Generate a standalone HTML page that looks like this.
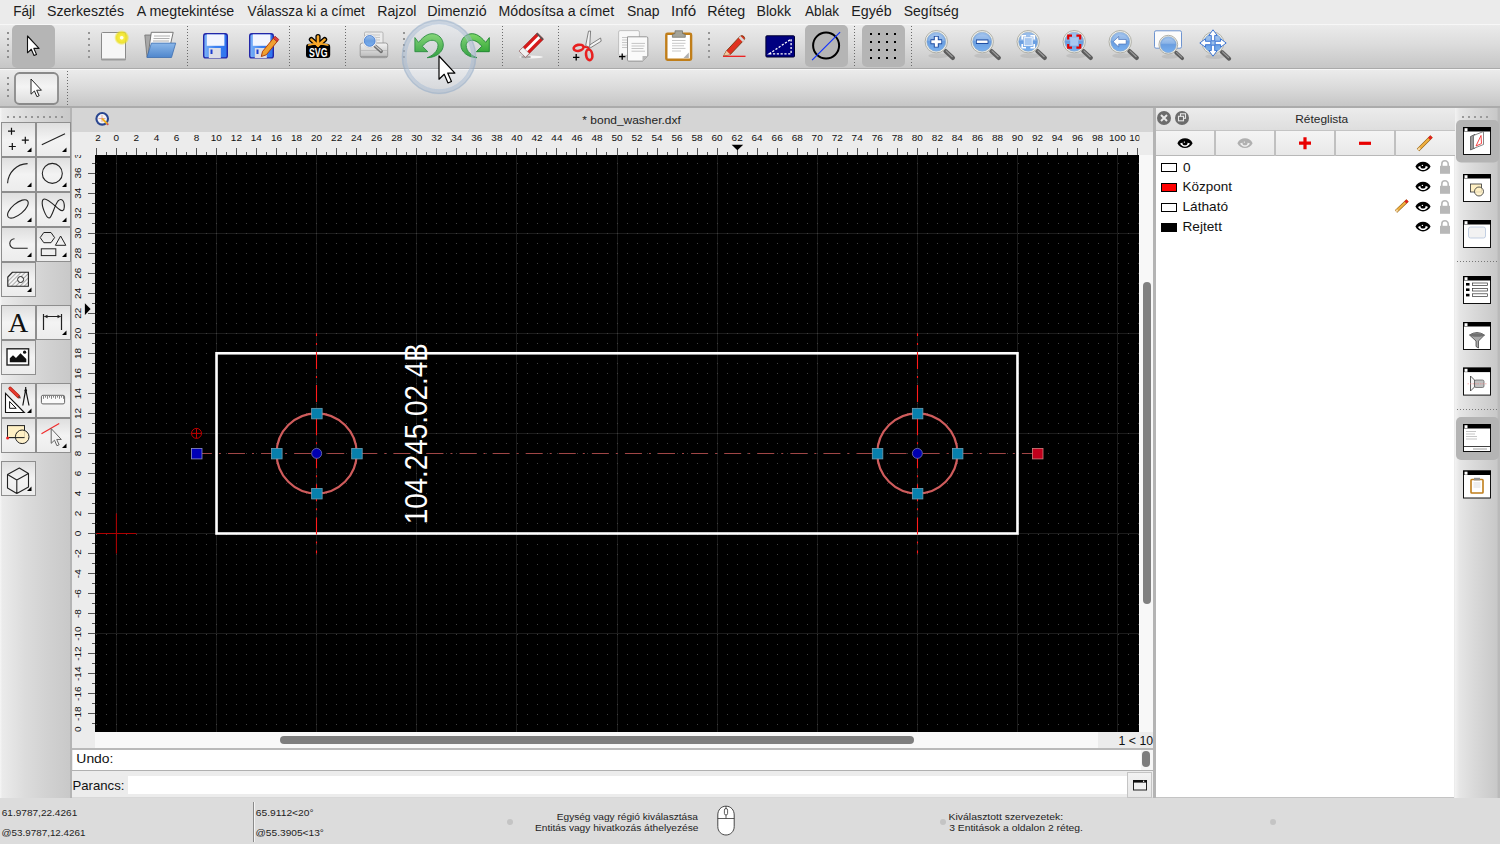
<!DOCTYPE html><html><head><meta charset="utf-8"><style>
html,body{margin:0;padding:0;width:1500px;height:844px;overflow:hidden;background:#ececec;font-family:"Liberation Sans",sans-serif;}
*{box-sizing:border-box}
</style></head><body>
<div style="position:absolute;left:0px;top:0px;width:1500px;height:24px;background:#ebebeb"></div>
<div style="position:absolute;left:0px;top:24px;width:1500px;height:45px;background:linear-gradient(#ebebeb,#dcdcdc 45%,#c6c6c6);border-top:1px solid #f7f7f7;border-bottom:1px solid #aaaaaa"></div>
<div style="position:absolute;left:0px;top:69px;width:1500px;height:39px;background:linear-gradient(#ebebeb,#dcdcdc 45%,#c6c6c6);border-top:1px solid #f7f7f7;border-bottom:2px solid #ababab"></div>
<div style="position:absolute;left:0px;top:108px;width:71px;height:690px;background:linear-gradient(90deg,#f6f6f6 0,#ebebeb 3%,#dcdcdc 35%,#d2d2d2 65%,#c8c8c8 100%)"></div>
<div style="position:absolute;left:1455px;top:108px;width:45px;height:690px;background:linear-gradient(90deg,#f2f2f2 0,#e6e6e6 10%,#dadada 40%,#d0d0d0 70%,#c8c8c8 94%,#bababa 95%,#bababa 100%)"></div>
<div style="position:absolute;left:70px;top:108px;width:2px;height:690px;background:#b4b4b4"></div>
<div style="position:absolute;left:72px;top:108px;width:1082px;height:24px;background:#d5d5d5"></div>
<div style="position:absolute;left:72px;top:132px;width:1082px;height:600px;background:#ececec"></div>
<div style="position:absolute;left:1139px;top:155px;width:15px;height:577px;background:#f8f8f8"></div>
<div style="position:absolute;left:1143px;top:282px;width:8px;height:322px;background:#808080;border-radius:4px"></div>
<div style="position:absolute;left:95px;top:732px;width:1059px;height:16px;background:#f8f8f8"></div>
<div style="position:absolute;left:72px;top:732px;width:23px;height:16px;background:#ececec"></div>
<div style="position:absolute;left:280px;top:736px;width:634px;height:8px;background:#7e7e7e;border-radius:4px"></div>
<div style="position:absolute;left:1098px;top:732px;width:56px;height:16px;background:#ececec"></div>
<div style="position:absolute;left:72px;top:748px;width:1082px;height:2px;background:#b9b9b9"></div>
<div style="position:absolute;left:73px;top:750px;width:1081px;height:20px;background:#fff"></div>
<div style="position:absolute;left:1141px;top:750px;width:13px;height:20px;background:#f6f6f6"></div>
<div style="position:absolute;left:1142px;top:751px;width:8px;height:16px;background:#7d7d7d;border-radius:4px"></div>
<div style="position:absolute;left:72px;top:770px;width:1082px;height:1px;background:#b0b0b0"></div>
<div style="position:absolute;left:72px;top:771px;width:1082px;height:27px;background:#ececec;border-bottom:1px solid #d8d8d8"></div>
<div style="position:absolute;left:128px;top:776px;width:999px;height:18px;background:#fff"></div>
<div style="position:absolute;left:1127px;top:772px;width:25px;height:26px;background:linear-gradient(#f2f2f2,#e6e6e6);border:1px solid #c4c4c4"></div>
<div style="position:absolute;left:1153px;top:108px;width:3px;height:690px;background:#b4b4b4"></div>
<svg width="1500" height="844" style="position:absolute;left:0;top:0">
<defs><clipPath id="cc"><rect x="95" y="155" width="1044" height="577"/></clipPath><clipPath id="hr"><rect x="95" y="132" width="1044.5" height="23"/></clipPath><clipPath id="vr"><rect x="72" y="155" width="23" height="577"/></clipPath></defs>
<rect x="95" y="155" width="1044" height="577" fill="#000"/>
<g clip-path="url(#cc)">
<line x1="16.5" y1="155" x2="16.5" y2="732" stroke="#1c1c1c" stroke-width="1"/>
<line x1="116.5" y1="155" x2="116.5" y2="732" stroke="#1c1c1c" stroke-width="1"/>
<line x1="216.5" y1="155" x2="216.5" y2="732" stroke="#1c1c1c" stroke-width="1"/>
<line x1="316.5" y1="155" x2="316.5" y2="732" stroke="#1c1c1c" stroke-width="1"/>
<line x1="416.5" y1="155" x2="416.5" y2="732" stroke="#1c1c1c" stroke-width="1"/>
<line x1="516.5" y1="155" x2="516.5" y2="732" stroke="#1c1c1c" stroke-width="1"/>
<line x1="617.5" y1="155" x2="617.5" y2="732" stroke="#1c1c1c" stroke-width="1"/>
<line x1="717.5" y1="155" x2="717.5" y2="732" stroke="#1c1c1c" stroke-width="1"/>
<line x1="817.5" y1="155" x2="817.5" y2="732" stroke="#1c1c1c" stroke-width="1"/>
<line x1="917.5" y1="155" x2="917.5" y2="732" stroke="#1c1c1c" stroke-width="1"/>
<line x1="1017.5" y1="155" x2="1017.5" y2="732" stroke="#1c1c1c" stroke-width="1"/>
<line x1="1117.5" y1="155" x2="1117.5" y2="732" stroke="#1c1c1c" stroke-width="1"/>
<line x1="95" y1="833.5" x2="1139" y2="833.5" stroke="#1c1c1c" stroke-width="1"/>
<line x1="95" y1="733.5" x2="1139" y2="733.5" stroke="#1c1c1c" stroke-width="1"/>
<line x1="95" y1="633.5" x2="1139" y2="633.5" stroke="#1c1c1c" stroke-width="1"/>
<line x1="95" y1="533.5" x2="1139" y2="533.5" stroke="#1c1c1c" stroke-width="1"/>
<line x1="95" y1="433.5" x2="1139" y2="433.5" stroke="#1c1c1c" stroke-width="1"/>
<line x1="95" y1="333.5" x2="1139" y2="333.5" stroke="#1c1c1c" stroke-width="1"/>
<line x1="95" y1="233.5" x2="1139" y2="233.5" stroke="#1c1c1c" stroke-width="1"/>
<line x1="95" y1="133.5" x2="1139" y2="133.5" stroke="#1c1c1c" stroke-width="1"/>
<path d="M86 744h1v1h-1zM86 734h1v1h-1zM86 724h1v1h-1zM86 714h1v1h-1zM86 704h1v1h-1zM86 694h1v1h-1zM86 684h1v1h-1zM86 674h1v1h-1zM86 664h1v1h-1zM86 654h1v1h-1zM86 644h1v1h-1zM86 634h1v1h-1zM86 624h1v1h-1zM86 614h1v1h-1zM86 604h1v1h-1zM86 594h1v1h-1zM86 584h1v1h-1zM86 574h1v1h-1zM86 564h1v1h-1zM86 554h1v1h-1zM86 544h1v1h-1zM86 534h1v1h-1zM86 523h1v1h-1zM86 513h1v1h-1zM86 503h1v1h-1zM86 493h1v1h-1zM86 483h1v1h-1zM86 473h1v1h-1zM86 463h1v1h-1zM86 453h1v1h-1zM86 443h1v1h-1zM86 433h1v1h-1zM86 423h1v1h-1zM86 413h1v1h-1zM86 403h1v1h-1zM86 393h1v1h-1zM86 383h1v1h-1zM86 373h1v1h-1zM86 363h1v1h-1zM86 353h1v1h-1zM86 343h1v1h-1zM86 333h1v1h-1zM86 323h1v1h-1zM86 313h1v1h-1zM86 303h1v1h-1zM86 293h1v1h-1zM86 283h1v1h-1zM86 273h1v1h-1zM86 263h1v1h-1zM86 253h1v1h-1zM86 243h1v1h-1zM86 233h1v1h-1zM86 223h1v1h-1zM86 213h1v1h-1zM86 203h1v1h-1zM86 193h1v1h-1zM86 183h1v1h-1zM86 173h1v1h-1zM86 163h1v1h-1zM86 153h1v1h-1zM96 744h1v1h-1zM96 734h1v1h-1zM96 724h1v1h-1zM96 714h1v1h-1zM96 704h1v1h-1zM96 694h1v1h-1zM96 684h1v1h-1zM96 674h1v1h-1zM96 664h1v1h-1zM96 654h1v1h-1zM96 644h1v1h-1zM96 634h1v1h-1zM96 624h1v1h-1zM96 614h1v1h-1zM96 604h1v1h-1zM96 594h1v1h-1zM96 584h1v1h-1zM96 574h1v1h-1zM96 564h1v1h-1zM96 554h1v1h-1zM96 544h1v1h-1zM96 534h1v1h-1zM96 523h1v1h-1zM96 513h1v1h-1zM96 503h1v1h-1zM96 493h1v1h-1zM96 483h1v1h-1zM96 473h1v1h-1zM96 463h1v1h-1zM96 453h1v1h-1zM96 443h1v1h-1zM96 433h1v1h-1zM96 423h1v1h-1zM96 413h1v1h-1zM96 403h1v1h-1zM96 393h1v1h-1zM96 383h1v1h-1zM96 373h1v1h-1zM96 363h1v1h-1zM96 353h1v1h-1zM96 343h1v1h-1zM96 333h1v1h-1zM96 323h1v1h-1zM96 313h1v1h-1zM96 303h1v1h-1zM96 293h1v1h-1zM96 283h1v1h-1zM96 273h1v1h-1zM96 263h1v1h-1zM96 253h1v1h-1zM96 243h1v1h-1zM96 233h1v1h-1zM96 223h1v1h-1zM96 213h1v1h-1zM96 203h1v1h-1zM96 193h1v1h-1zM96 183h1v1h-1zM96 173h1v1h-1zM96 163h1v1h-1zM96 153h1v1h-1zM106 744h1v1h-1zM106 734h1v1h-1zM106 724h1v1h-1zM106 714h1v1h-1zM106 704h1v1h-1zM106 694h1v1h-1zM106 684h1v1h-1zM106 674h1v1h-1zM106 664h1v1h-1zM106 654h1v1h-1zM106 644h1v1h-1zM106 634h1v1h-1zM106 624h1v1h-1zM106 614h1v1h-1zM106 604h1v1h-1zM106 594h1v1h-1zM106 584h1v1h-1zM106 574h1v1h-1zM106 564h1v1h-1zM106 554h1v1h-1zM106 544h1v1h-1zM106 534h1v1h-1zM106 523h1v1h-1zM106 513h1v1h-1zM106 503h1v1h-1zM106 493h1v1h-1zM106 483h1v1h-1zM106 473h1v1h-1zM106 463h1v1h-1zM106 453h1v1h-1zM106 443h1v1h-1zM106 433h1v1h-1zM106 423h1v1h-1zM106 413h1v1h-1zM106 403h1v1h-1zM106 393h1v1h-1zM106 383h1v1h-1zM106 373h1v1h-1zM106 363h1v1h-1zM106 353h1v1h-1zM106 343h1v1h-1zM106 333h1v1h-1zM106 323h1v1h-1zM106 313h1v1h-1zM106 303h1v1h-1zM106 293h1v1h-1zM106 283h1v1h-1zM106 273h1v1h-1zM106 263h1v1h-1zM106 253h1v1h-1zM106 243h1v1h-1zM106 233h1v1h-1zM106 223h1v1h-1zM106 213h1v1h-1zM106 203h1v1h-1zM106 193h1v1h-1zM106 183h1v1h-1zM106 173h1v1h-1zM106 163h1v1h-1zM106 153h1v1h-1zM116 744h1v1h-1zM116 734h1v1h-1zM116 724h1v1h-1zM116 714h1v1h-1zM116 704h1v1h-1zM116 694h1v1h-1zM116 684h1v1h-1zM116 674h1v1h-1zM116 664h1v1h-1zM116 654h1v1h-1zM116 644h1v1h-1zM116 634h1v1h-1zM116 624h1v1h-1zM116 614h1v1h-1zM116 604h1v1h-1zM116 594h1v1h-1zM116 584h1v1h-1zM116 574h1v1h-1zM116 564h1v1h-1zM116 554h1v1h-1zM116 544h1v1h-1zM116 534h1v1h-1zM116 523h1v1h-1zM116 513h1v1h-1zM116 503h1v1h-1zM116 493h1v1h-1zM116 483h1v1h-1zM116 473h1v1h-1zM116 463h1v1h-1zM116 453h1v1h-1zM116 443h1v1h-1zM116 433h1v1h-1zM116 423h1v1h-1zM116 413h1v1h-1zM116 403h1v1h-1zM116 393h1v1h-1zM116 383h1v1h-1zM116 373h1v1h-1zM116 363h1v1h-1zM116 353h1v1h-1zM116 343h1v1h-1zM116 333h1v1h-1zM116 323h1v1h-1zM116 313h1v1h-1zM116 303h1v1h-1zM116 293h1v1h-1zM116 283h1v1h-1zM116 273h1v1h-1zM116 263h1v1h-1zM116 253h1v1h-1zM116 243h1v1h-1zM116 233h1v1h-1zM116 223h1v1h-1zM116 213h1v1h-1zM116 203h1v1h-1zM116 193h1v1h-1zM116 183h1v1h-1zM116 173h1v1h-1zM116 163h1v1h-1zM116 153h1v1h-1zM126 744h1v1h-1zM126 734h1v1h-1zM126 724h1v1h-1zM126 714h1v1h-1zM126 704h1v1h-1zM126 694h1v1h-1zM126 684h1v1h-1zM126 674h1v1h-1zM126 664h1v1h-1zM126 654h1v1h-1zM126 644h1v1h-1zM126 634h1v1h-1zM126 624h1v1h-1zM126 614h1v1h-1zM126 604h1v1h-1zM126 594h1v1h-1zM126 584h1v1h-1zM126 574h1v1h-1zM126 564h1v1h-1zM126 554h1v1h-1zM126 544h1v1h-1zM126 534h1v1h-1zM126 523h1v1h-1zM126 513h1v1h-1zM126 503h1v1h-1zM126 493h1v1h-1zM126 483h1v1h-1zM126 473h1v1h-1zM126 463h1v1h-1zM126 453h1v1h-1zM126 443h1v1h-1zM126 433h1v1h-1zM126 423h1v1h-1zM126 413h1v1h-1zM126 403h1v1h-1zM126 393h1v1h-1zM126 383h1v1h-1zM126 373h1v1h-1zM126 363h1v1h-1zM126 353h1v1h-1zM126 343h1v1h-1zM126 333h1v1h-1zM126 323h1v1h-1zM126 313h1v1h-1zM126 303h1v1h-1zM126 293h1v1h-1zM126 283h1v1h-1zM126 273h1v1h-1zM126 263h1v1h-1zM126 253h1v1h-1zM126 243h1v1h-1zM126 233h1v1h-1zM126 223h1v1h-1zM126 213h1v1h-1zM126 203h1v1h-1zM126 193h1v1h-1zM126 183h1v1h-1zM126 173h1v1h-1zM126 163h1v1h-1zM126 153h1v1h-1zM136 744h1v1h-1zM136 734h1v1h-1zM136 724h1v1h-1zM136 714h1v1h-1zM136 704h1v1h-1zM136 694h1v1h-1zM136 684h1v1h-1zM136 674h1v1h-1zM136 664h1v1h-1zM136 654h1v1h-1zM136 644h1v1h-1zM136 634h1v1h-1zM136 624h1v1h-1zM136 614h1v1h-1zM136 604h1v1h-1zM136 594h1v1h-1zM136 584h1v1h-1zM136 574h1v1h-1zM136 564h1v1h-1zM136 554h1v1h-1zM136 544h1v1h-1zM136 534h1v1h-1zM136 523h1v1h-1zM136 513h1v1h-1zM136 503h1v1h-1zM136 493h1v1h-1zM136 483h1v1h-1zM136 473h1v1h-1zM136 463h1v1h-1zM136 453h1v1h-1zM136 443h1v1h-1zM136 433h1v1h-1zM136 423h1v1h-1zM136 413h1v1h-1zM136 403h1v1h-1zM136 393h1v1h-1zM136 383h1v1h-1zM136 373h1v1h-1zM136 363h1v1h-1zM136 353h1v1h-1zM136 343h1v1h-1zM136 333h1v1h-1zM136 323h1v1h-1zM136 313h1v1h-1zM136 303h1v1h-1zM136 293h1v1h-1zM136 283h1v1h-1zM136 273h1v1h-1zM136 263h1v1h-1zM136 253h1v1h-1zM136 243h1v1h-1zM136 233h1v1h-1zM136 223h1v1h-1zM136 213h1v1h-1zM136 203h1v1h-1zM136 193h1v1h-1zM136 183h1v1h-1zM136 173h1v1h-1zM136 163h1v1h-1zM136 153h1v1h-1zM146 744h1v1h-1zM146 734h1v1h-1zM146 724h1v1h-1zM146 714h1v1h-1zM146 704h1v1h-1zM146 694h1v1h-1zM146 684h1v1h-1zM146 674h1v1h-1zM146 664h1v1h-1zM146 654h1v1h-1zM146 644h1v1h-1zM146 634h1v1h-1zM146 624h1v1h-1zM146 614h1v1h-1zM146 604h1v1h-1zM146 594h1v1h-1zM146 584h1v1h-1zM146 574h1v1h-1zM146 564h1v1h-1zM146 554h1v1h-1zM146 544h1v1h-1zM146 534h1v1h-1zM146 523h1v1h-1zM146 513h1v1h-1zM146 503h1v1h-1zM146 493h1v1h-1zM146 483h1v1h-1zM146 473h1v1h-1zM146 463h1v1h-1zM146 453h1v1h-1zM146 443h1v1h-1zM146 433h1v1h-1zM146 423h1v1h-1zM146 413h1v1h-1zM146 403h1v1h-1zM146 393h1v1h-1zM146 383h1v1h-1zM146 373h1v1h-1zM146 363h1v1h-1zM146 353h1v1h-1zM146 343h1v1h-1zM146 333h1v1h-1zM146 323h1v1h-1zM146 313h1v1h-1zM146 303h1v1h-1zM146 293h1v1h-1zM146 283h1v1h-1zM146 273h1v1h-1zM146 263h1v1h-1zM146 253h1v1h-1zM146 243h1v1h-1zM146 233h1v1h-1zM146 223h1v1h-1zM146 213h1v1h-1zM146 203h1v1h-1zM146 193h1v1h-1zM146 183h1v1h-1zM146 173h1v1h-1zM146 163h1v1h-1zM146 153h1v1h-1zM156 744h1v1h-1zM156 734h1v1h-1zM156 724h1v1h-1zM156 714h1v1h-1zM156 704h1v1h-1zM156 694h1v1h-1zM156 684h1v1h-1zM156 674h1v1h-1zM156 664h1v1h-1zM156 654h1v1h-1zM156 644h1v1h-1zM156 634h1v1h-1zM156 624h1v1h-1zM156 614h1v1h-1zM156 604h1v1h-1zM156 594h1v1h-1zM156 584h1v1h-1zM156 574h1v1h-1zM156 564h1v1h-1zM156 554h1v1h-1zM156 544h1v1h-1zM156 534h1v1h-1zM156 523h1v1h-1zM156 513h1v1h-1zM156 503h1v1h-1zM156 493h1v1h-1zM156 483h1v1h-1zM156 473h1v1h-1zM156 463h1v1h-1zM156 453h1v1h-1zM156 443h1v1h-1zM156 433h1v1h-1zM156 423h1v1h-1zM156 413h1v1h-1zM156 403h1v1h-1zM156 393h1v1h-1zM156 383h1v1h-1zM156 373h1v1h-1zM156 363h1v1h-1zM156 353h1v1h-1zM156 343h1v1h-1zM156 333h1v1h-1zM156 323h1v1h-1zM156 313h1v1h-1zM156 303h1v1h-1zM156 293h1v1h-1zM156 283h1v1h-1zM156 273h1v1h-1zM156 263h1v1h-1zM156 253h1v1h-1zM156 243h1v1h-1zM156 233h1v1h-1zM156 223h1v1h-1zM156 213h1v1h-1zM156 203h1v1h-1zM156 193h1v1h-1zM156 183h1v1h-1zM156 173h1v1h-1zM156 163h1v1h-1zM156 153h1v1h-1zM166 744h1v1h-1zM166 734h1v1h-1zM166 724h1v1h-1zM166 714h1v1h-1zM166 704h1v1h-1zM166 694h1v1h-1zM166 684h1v1h-1zM166 674h1v1h-1zM166 664h1v1h-1zM166 654h1v1h-1zM166 644h1v1h-1zM166 634h1v1h-1zM166 624h1v1h-1zM166 614h1v1h-1zM166 604h1v1h-1zM166 594h1v1h-1zM166 584h1v1h-1zM166 574h1v1h-1zM166 564h1v1h-1zM166 554h1v1h-1zM166 544h1v1h-1zM166 534h1v1h-1zM166 523h1v1h-1zM166 513h1v1h-1zM166 503h1v1h-1zM166 493h1v1h-1zM166 483h1v1h-1zM166 473h1v1h-1zM166 463h1v1h-1zM166 453h1v1h-1zM166 443h1v1h-1zM166 433h1v1h-1zM166 423h1v1h-1zM166 413h1v1h-1zM166 403h1v1h-1zM166 393h1v1h-1zM166 383h1v1h-1zM166 373h1v1h-1zM166 363h1v1h-1zM166 353h1v1h-1zM166 343h1v1h-1zM166 333h1v1h-1zM166 323h1v1h-1zM166 313h1v1h-1zM166 303h1v1h-1zM166 293h1v1h-1zM166 283h1v1h-1zM166 273h1v1h-1zM166 263h1v1h-1zM166 253h1v1h-1zM166 243h1v1h-1zM166 233h1v1h-1zM166 223h1v1h-1zM166 213h1v1h-1zM166 203h1v1h-1zM166 193h1v1h-1zM166 183h1v1h-1zM166 173h1v1h-1zM166 163h1v1h-1zM166 153h1v1h-1zM176 744h1v1h-1zM176 734h1v1h-1zM176 724h1v1h-1zM176 714h1v1h-1zM176 704h1v1h-1zM176 694h1v1h-1zM176 684h1v1h-1zM176 674h1v1h-1zM176 664h1v1h-1zM176 654h1v1h-1zM176 644h1v1h-1zM176 634h1v1h-1zM176 624h1v1h-1zM176 614h1v1h-1zM176 604h1v1h-1zM176 594h1v1h-1zM176 584h1v1h-1zM176 574h1v1h-1zM176 564h1v1h-1zM176 554h1v1h-1zM176 544h1v1h-1zM176 534h1v1h-1zM176 523h1v1h-1zM176 513h1v1h-1zM176 503h1v1h-1zM176 493h1v1h-1zM176 483h1v1h-1zM176 473h1v1h-1zM176 463h1v1h-1zM176 453h1v1h-1zM176 443h1v1h-1zM176 433h1v1h-1zM176 423h1v1h-1zM176 413h1v1h-1zM176 403h1v1h-1zM176 393h1v1h-1zM176 383h1v1h-1zM176 373h1v1h-1zM176 363h1v1h-1zM176 353h1v1h-1zM176 343h1v1h-1zM176 333h1v1h-1zM176 323h1v1h-1zM176 313h1v1h-1zM176 303h1v1h-1zM176 293h1v1h-1zM176 283h1v1h-1zM176 273h1v1h-1zM176 263h1v1h-1zM176 253h1v1h-1zM176 243h1v1h-1zM176 233h1v1h-1zM176 223h1v1h-1zM176 213h1v1h-1zM176 203h1v1h-1zM176 193h1v1h-1zM176 183h1v1h-1zM176 173h1v1h-1zM176 163h1v1h-1zM176 153h1v1h-1zM186 744h1v1h-1zM186 734h1v1h-1zM186 724h1v1h-1zM186 714h1v1h-1zM186 704h1v1h-1zM186 694h1v1h-1zM186 684h1v1h-1zM186 674h1v1h-1zM186 664h1v1h-1zM186 654h1v1h-1zM186 644h1v1h-1zM186 634h1v1h-1zM186 624h1v1h-1zM186 614h1v1h-1zM186 604h1v1h-1zM186 594h1v1h-1zM186 584h1v1h-1zM186 574h1v1h-1zM186 564h1v1h-1zM186 554h1v1h-1zM186 544h1v1h-1zM186 534h1v1h-1zM186 523h1v1h-1zM186 513h1v1h-1zM186 503h1v1h-1zM186 493h1v1h-1zM186 483h1v1h-1zM186 473h1v1h-1zM186 463h1v1h-1zM186 453h1v1h-1zM186 443h1v1h-1zM186 433h1v1h-1zM186 423h1v1h-1zM186 413h1v1h-1zM186 403h1v1h-1zM186 393h1v1h-1zM186 383h1v1h-1zM186 373h1v1h-1zM186 363h1v1h-1zM186 353h1v1h-1zM186 343h1v1h-1zM186 333h1v1h-1zM186 323h1v1h-1zM186 313h1v1h-1zM186 303h1v1h-1zM186 293h1v1h-1zM186 283h1v1h-1zM186 273h1v1h-1zM186 263h1v1h-1zM186 253h1v1h-1zM186 243h1v1h-1zM186 233h1v1h-1zM186 223h1v1h-1zM186 213h1v1h-1zM186 203h1v1h-1zM186 193h1v1h-1zM186 183h1v1h-1zM186 173h1v1h-1zM186 163h1v1h-1zM186 153h1v1h-1zM196 744h1v1h-1zM196 734h1v1h-1zM196 724h1v1h-1zM196 714h1v1h-1zM196 704h1v1h-1zM196 694h1v1h-1zM196 684h1v1h-1zM196 674h1v1h-1zM196 664h1v1h-1zM196 654h1v1h-1zM196 644h1v1h-1zM196 634h1v1h-1zM196 624h1v1h-1zM196 614h1v1h-1zM196 604h1v1h-1zM196 594h1v1h-1zM196 584h1v1h-1zM196 574h1v1h-1zM196 564h1v1h-1zM196 554h1v1h-1zM196 544h1v1h-1zM196 534h1v1h-1zM196 523h1v1h-1zM196 513h1v1h-1zM196 503h1v1h-1zM196 493h1v1h-1zM196 483h1v1h-1zM196 473h1v1h-1zM196 463h1v1h-1zM196 453h1v1h-1zM196 443h1v1h-1zM196 433h1v1h-1zM196 423h1v1h-1zM196 413h1v1h-1zM196 403h1v1h-1zM196 393h1v1h-1zM196 383h1v1h-1zM196 373h1v1h-1zM196 363h1v1h-1zM196 353h1v1h-1zM196 343h1v1h-1zM196 333h1v1h-1zM196 323h1v1h-1zM196 313h1v1h-1zM196 303h1v1h-1zM196 293h1v1h-1zM196 283h1v1h-1zM196 273h1v1h-1zM196 263h1v1h-1zM196 253h1v1h-1zM196 243h1v1h-1zM196 233h1v1h-1zM196 223h1v1h-1zM196 213h1v1h-1zM196 203h1v1h-1zM196 193h1v1h-1zM196 183h1v1h-1zM196 173h1v1h-1zM196 163h1v1h-1zM196 153h1v1h-1zM206 744h1v1h-1zM206 734h1v1h-1zM206 724h1v1h-1zM206 714h1v1h-1zM206 704h1v1h-1zM206 694h1v1h-1zM206 684h1v1h-1zM206 674h1v1h-1zM206 664h1v1h-1zM206 654h1v1h-1zM206 644h1v1h-1zM206 634h1v1h-1zM206 624h1v1h-1zM206 614h1v1h-1zM206 604h1v1h-1zM206 594h1v1h-1zM206 584h1v1h-1zM206 574h1v1h-1zM206 564h1v1h-1zM206 554h1v1h-1zM206 544h1v1h-1zM206 534h1v1h-1zM206 523h1v1h-1zM206 513h1v1h-1zM206 503h1v1h-1zM206 493h1v1h-1zM206 483h1v1h-1zM206 473h1v1h-1zM206 463h1v1h-1zM206 453h1v1h-1zM206 443h1v1h-1zM206 433h1v1h-1zM206 423h1v1h-1zM206 413h1v1h-1zM206 403h1v1h-1zM206 393h1v1h-1zM206 383h1v1h-1zM206 373h1v1h-1zM206 363h1v1h-1zM206 353h1v1h-1zM206 343h1v1h-1zM206 333h1v1h-1zM206 323h1v1h-1zM206 313h1v1h-1zM206 303h1v1h-1zM206 293h1v1h-1zM206 283h1v1h-1zM206 273h1v1h-1zM206 263h1v1h-1zM206 253h1v1h-1zM206 243h1v1h-1zM206 233h1v1h-1zM206 223h1v1h-1zM206 213h1v1h-1zM206 203h1v1h-1zM206 193h1v1h-1zM206 183h1v1h-1zM206 173h1v1h-1zM206 163h1v1h-1zM206 153h1v1h-1zM216 744h1v1h-1zM216 734h1v1h-1zM216 724h1v1h-1zM216 714h1v1h-1zM216 704h1v1h-1zM216 694h1v1h-1zM216 684h1v1h-1zM216 674h1v1h-1zM216 664h1v1h-1zM216 654h1v1h-1zM216 644h1v1h-1zM216 634h1v1h-1zM216 624h1v1h-1zM216 614h1v1h-1zM216 604h1v1h-1zM216 594h1v1h-1zM216 584h1v1h-1zM216 574h1v1h-1zM216 564h1v1h-1zM216 554h1v1h-1zM216 544h1v1h-1zM216 534h1v1h-1zM216 523h1v1h-1zM216 513h1v1h-1zM216 503h1v1h-1zM216 493h1v1h-1zM216 483h1v1h-1zM216 473h1v1h-1zM216 463h1v1h-1zM216 453h1v1h-1zM216 443h1v1h-1zM216 433h1v1h-1zM216 423h1v1h-1zM216 413h1v1h-1zM216 403h1v1h-1zM216 393h1v1h-1zM216 383h1v1h-1zM216 373h1v1h-1zM216 363h1v1h-1zM216 353h1v1h-1zM216 343h1v1h-1zM216 333h1v1h-1zM216 323h1v1h-1zM216 313h1v1h-1zM216 303h1v1h-1zM216 293h1v1h-1zM216 283h1v1h-1zM216 273h1v1h-1zM216 263h1v1h-1zM216 253h1v1h-1zM216 243h1v1h-1zM216 233h1v1h-1zM216 223h1v1h-1zM216 213h1v1h-1zM216 203h1v1h-1zM216 193h1v1h-1zM216 183h1v1h-1zM216 173h1v1h-1zM216 163h1v1h-1zM216 153h1v1h-1zM226 744h1v1h-1zM226 734h1v1h-1zM226 724h1v1h-1zM226 714h1v1h-1zM226 704h1v1h-1zM226 694h1v1h-1zM226 684h1v1h-1zM226 674h1v1h-1zM226 664h1v1h-1zM226 654h1v1h-1zM226 644h1v1h-1zM226 634h1v1h-1zM226 624h1v1h-1zM226 614h1v1h-1zM226 604h1v1h-1zM226 594h1v1h-1zM226 584h1v1h-1zM226 574h1v1h-1zM226 564h1v1h-1zM226 554h1v1h-1zM226 544h1v1h-1zM226 534h1v1h-1zM226 523h1v1h-1zM226 513h1v1h-1zM226 503h1v1h-1zM226 493h1v1h-1zM226 483h1v1h-1zM226 473h1v1h-1zM226 463h1v1h-1zM226 453h1v1h-1zM226 443h1v1h-1zM226 433h1v1h-1zM226 423h1v1h-1zM226 413h1v1h-1zM226 403h1v1h-1zM226 393h1v1h-1zM226 383h1v1h-1zM226 373h1v1h-1zM226 363h1v1h-1zM226 353h1v1h-1zM226 343h1v1h-1zM226 333h1v1h-1zM226 323h1v1h-1zM226 313h1v1h-1zM226 303h1v1h-1zM226 293h1v1h-1zM226 283h1v1h-1zM226 273h1v1h-1zM226 263h1v1h-1zM226 253h1v1h-1zM226 243h1v1h-1zM226 233h1v1h-1zM226 223h1v1h-1zM226 213h1v1h-1zM226 203h1v1h-1zM226 193h1v1h-1zM226 183h1v1h-1zM226 173h1v1h-1zM226 163h1v1h-1zM226 153h1v1h-1zM236 744h1v1h-1zM236 734h1v1h-1zM236 724h1v1h-1zM236 714h1v1h-1zM236 704h1v1h-1zM236 694h1v1h-1zM236 684h1v1h-1zM236 674h1v1h-1zM236 664h1v1h-1zM236 654h1v1h-1zM236 644h1v1h-1zM236 634h1v1h-1zM236 624h1v1h-1zM236 614h1v1h-1zM236 604h1v1h-1zM236 594h1v1h-1zM236 584h1v1h-1zM236 574h1v1h-1zM236 564h1v1h-1zM236 554h1v1h-1zM236 544h1v1h-1zM236 534h1v1h-1zM236 523h1v1h-1zM236 513h1v1h-1zM236 503h1v1h-1zM236 493h1v1h-1zM236 483h1v1h-1zM236 473h1v1h-1zM236 463h1v1h-1zM236 453h1v1h-1zM236 443h1v1h-1zM236 433h1v1h-1zM236 423h1v1h-1zM236 413h1v1h-1zM236 403h1v1h-1zM236 393h1v1h-1zM236 383h1v1h-1zM236 373h1v1h-1zM236 363h1v1h-1zM236 353h1v1h-1zM236 343h1v1h-1zM236 333h1v1h-1zM236 323h1v1h-1zM236 313h1v1h-1zM236 303h1v1h-1zM236 293h1v1h-1zM236 283h1v1h-1zM236 273h1v1h-1zM236 263h1v1h-1zM236 253h1v1h-1zM236 243h1v1h-1zM236 233h1v1h-1zM236 223h1v1h-1zM236 213h1v1h-1zM236 203h1v1h-1zM236 193h1v1h-1zM236 183h1v1h-1zM236 173h1v1h-1zM236 163h1v1h-1zM236 153h1v1h-1zM246 744h1v1h-1zM246 734h1v1h-1zM246 724h1v1h-1zM246 714h1v1h-1zM246 704h1v1h-1zM246 694h1v1h-1zM246 684h1v1h-1zM246 674h1v1h-1zM246 664h1v1h-1zM246 654h1v1h-1zM246 644h1v1h-1zM246 634h1v1h-1zM246 624h1v1h-1zM246 614h1v1h-1zM246 604h1v1h-1zM246 594h1v1h-1zM246 584h1v1h-1zM246 574h1v1h-1zM246 564h1v1h-1zM246 554h1v1h-1zM246 544h1v1h-1zM246 534h1v1h-1zM246 523h1v1h-1zM246 513h1v1h-1zM246 503h1v1h-1zM246 493h1v1h-1zM246 483h1v1h-1zM246 473h1v1h-1zM246 463h1v1h-1zM246 453h1v1h-1zM246 443h1v1h-1zM246 433h1v1h-1zM246 423h1v1h-1zM246 413h1v1h-1zM246 403h1v1h-1zM246 393h1v1h-1zM246 383h1v1h-1zM246 373h1v1h-1zM246 363h1v1h-1zM246 353h1v1h-1zM246 343h1v1h-1zM246 333h1v1h-1zM246 323h1v1h-1zM246 313h1v1h-1zM246 303h1v1h-1zM246 293h1v1h-1zM246 283h1v1h-1zM246 273h1v1h-1zM246 263h1v1h-1zM246 253h1v1h-1zM246 243h1v1h-1zM246 233h1v1h-1zM246 223h1v1h-1zM246 213h1v1h-1zM246 203h1v1h-1zM246 193h1v1h-1zM246 183h1v1h-1zM246 173h1v1h-1zM246 163h1v1h-1zM246 153h1v1h-1zM256 744h1v1h-1zM256 734h1v1h-1zM256 724h1v1h-1zM256 714h1v1h-1zM256 704h1v1h-1zM256 694h1v1h-1zM256 684h1v1h-1zM256 674h1v1h-1zM256 664h1v1h-1zM256 654h1v1h-1zM256 644h1v1h-1zM256 634h1v1h-1zM256 624h1v1h-1zM256 614h1v1h-1zM256 604h1v1h-1zM256 594h1v1h-1zM256 584h1v1h-1zM256 574h1v1h-1zM256 564h1v1h-1zM256 554h1v1h-1zM256 544h1v1h-1zM256 534h1v1h-1zM256 523h1v1h-1zM256 513h1v1h-1zM256 503h1v1h-1zM256 493h1v1h-1zM256 483h1v1h-1zM256 473h1v1h-1zM256 463h1v1h-1zM256 453h1v1h-1zM256 443h1v1h-1zM256 433h1v1h-1zM256 423h1v1h-1zM256 413h1v1h-1zM256 403h1v1h-1zM256 393h1v1h-1zM256 383h1v1h-1zM256 373h1v1h-1zM256 363h1v1h-1zM256 353h1v1h-1zM256 343h1v1h-1zM256 333h1v1h-1zM256 323h1v1h-1zM256 313h1v1h-1zM256 303h1v1h-1zM256 293h1v1h-1zM256 283h1v1h-1zM256 273h1v1h-1zM256 263h1v1h-1zM256 253h1v1h-1zM256 243h1v1h-1zM256 233h1v1h-1zM256 223h1v1h-1zM256 213h1v1h-1zM256 203h1v1h-1zM256 193h1v1h-1zM256 183h1v1h-1zM256 173h1v1h-1zM256 163h1v1h-1zM256 153h1v1h-1zM266 744h1v1h-1zM266 734h1v1h-1zM266 724h1v1h-1zM266 714h1v1h-1zM266 704h1v1h-1zM266 694h1v1h-1zM266 684h1v1h-1zM266 674h1v1h-1zM266 664h1v1h-1zM266 654h1v1h-1zM266 644h1v1h-1zM266 634h1v1h-1zM266 624h1v1h-1zM266 614h1v1h-1zM266 604h1v1h-1zM266 594h1v1h-1zM266 584h1v1h-1zM266 574h1v1h-1zM266 564h1v1h-1zM266 554h1v1h-1zM266 544h1v1h-1zM266 534h1v1h-1zM266 523h1v1h-1zM266 513h1v1h-1zM266 503h1v1h-1zM266 493h1v1h-1zM266 483h1v1h-1zM266 473h1v1h-1zM266 463h1v1h-1zM266 453h1v1h-1zM266 443h1v1h-1zM266 433h1v1h-1zM266 423h1v1h-1zM266 413h1v1h-1zM266 403h1v1h-1zM266 393h1v1h-1zM266 383h1v1h-1zM266 373h1v1h-1zM266 363h1v1h-1zM266 353h1v1h-1zM266 343h1v1h-1zM266 333h1v1h-1zM266 323h1v1h-1zM266 313h1v1h-1zM266 303h1v1h-1zM266 293h1v1h-1zM266 283h1v1h-1zM266 273h1v1h-1zM266 263h1v1h-1zM266 253h1v1h-1zM266 243h1v1h-1zM266 233h1v1h-1zM266 223h1v1h-1zM266 213h1v1h-1zM266 203h1v1h-1zM266 193h1v1h-1zM266 183h1v1h-1zM266 173h1v1h-1zM266 163h1v1h-1zM266 153h1v1h-1zM276 744h1v1h-1zM276 734h1v1h-1zM276 724h1v1h-1zM276 714h1v1h-1zM276 704h1v1h-1zM276 694h1v1h-1zM276 684h1v1h-1zM276 674h1v1h-1zM276 664h1v1h-1zM276 654h1v1h-1zM276 644h1v1h-1zM276 634h1v1h-1zM276 624h1v1h-1zM276 614h1v1h-1zM276 604h1v1h-1zM276 594h1v1h-1zM276 584h1v1h-1zM276 574h1v1h-1zM276 564h1v1h-1zM276 554h1v1h-1zM276 544h1v1h-1zM276 534h1v1h-1zM276 523h1v1h-1zM276 513h1v1h-1zM276 503h1v1h-1zM276 493h1v1h-1zM276 483h1v1h-1zM276 473h1v1h-1zM276 463h1v1h-1zM276 453h1v1h-1zM276 443h1v1h-1zM276 433h1v1h-1zM276 423h1v1h-1zM276 413h1v1h-1zM276 403h1v1h-1zM276 393h1v1h-1zM276 383h1v1h-1zM276 373h1v1h-1zM276 363h1v1h-1zM276 353h1v1h-1zM276 343h1v1h-1zM276 333h1v1h-1zM276 323h1v1h-1zM276 313h1v1h-1zM276 303h1v1h-1zM276 293h1v1h-1zM276 283h1v1h-1zM276 273h1v1h-1zM276 263h1v1h-1zM276 253h1v1h-1zM276 243h1v1h-1zM276 233h1v1h-1zM276 223h1v1h-1zM276 213h1v1h-1zM276 203h1v1h-1zM276 193h1v1h-1zM276 183h1v1h-1zM276 173h1v1h-1zM276 163h1v1h-1zM276 153h1v1h-1zM286 744h1v1h-1zM286 734h1v1h-1zM286 724h1v1h-1zM286 714h1v1h-1zM286 704h1v1h-1zM286 694h1v1h-1zM286 684h1v1h-1zM286 674h1v1h-1zM286 664h1v1h-1zM286 654h1v1h-1zM286 644h1v1h-1zM286 634h1v1h-1zM286 624h1v1h-1zM286 614h1v1h-1zM286 604h1v1h-1zM286 594h1v1h-1zM286 584h1v1h-1zM286 574h1v1h-1zM286 564h1v1h-1zM286 554h1v1h-1zM286 544h1v1h-1zM286 534h1v1h-1zM286 523h1v1h-1zM286 513h1v1h-1zM286 503h1v1h-1zM286 493h1v1h-1zM286 483h1v1h-1zM286 473h1v1h-1zM286 463h1v1h-1zM286 453h1v1h-1zM286 443h1v1h-1zM286 433h1v1h-1zM286 423h1v1h-1zM286 413h1v1h-1zM286 403h1v1h-1zM286 393h1v1h-1zM286 383h1v1h-1zM286 373h1v1h-1zM286 363h1v1h-1zM286 353h1v1h-1zM286 343h1v1h-1zM286 333h1v1h-1zM286 323h1v1h-1zM286 313h1v1h-1zM286 303h1v1h-1zM286 293h1v1h-1zM286 283h1v1h-1zM286 273h1v1h-1zM286 263h1v1h-1zM286 253h1v1h-1zM286 243h1v1h-1zM286 233h1v1h-1zM286 223h1v1h-1zM286 213h1v1h-1zM286 203h1v1h-1zM286 193h1v1h-1zM286 183h1v1h-1zM286 173h1v1h-1zM286 163h1v1h-1zM286 153h1v1h-1zM296 744h1v1h-1zM296 734h1v1h-1zM296 724h1v1h-1zM296 714h1v1h-1zM296 704h1v1h-1zM296 694h1v1h-1zM296 684h1v1h-1zM296 674h1v1h-1zM296 664h1v1h-1zM296 654h1v1h-1zM296 644h1v1h-1zM296 634h1v1h-1zM296 624h1v1h-1zM296 614h1v1h-1zM296 604h1v1h-1zM296 594h1v1h-1zM296 584h1v1h-1zM296 574h1v1h-1zM296 564h1v1h-1zM296 554h1v1h-1zM296 544h1v1h-1zM296 534h1v1h-1zM296 523h1v1h-1zM296 513h1v1h-1zM296 503h1v1h-1zM296 493h1v1h-1zM296 483h1v1h-1zM296 473h1v1h-1zM296 463h1v1h-1zM296 453h1v1h-1zM296 443h1v1h-1zM296 433h1v1h-1zM296 423h1v1h-1zM296 413h1v1h-1zM296 403h1v1h-1zM296 393h1v1h-1zM296 383h1v1h-1zM296 373h1v1h-1zM296 363h1v1h-1zM296 353h1v1h-1zM296 343h1v1h-1zM296 333h1v1h-1zM296 323h1v1h-1zM296 313h1v1h-1zM296 303h1v1h-1zM296 293h1v1h-1zM296 283h1v1h-1zM296 273h1v1h-1zM296 263h1v1h-1zM296 253h1v1h-1zM296 243h1v1h-1zM296 233h1v1h-1zM296 223h1v1h-1zM296 213h1v1h-1zM296 203h1v1h-1zM296 193h1v1h-1zM296 183h1v1h-1zM296 173h1v1h-1zM296 163h1v1h-1zM296 153h1v1h-1zM306 744h1v1h-1zM306 734h1v1h-1zM306 724h1v1h-1zM306 714h1v1h-1zM306 704h1v1h-1zM306 694h1v1h-1zM306 684h1v1h-1zM306 674h1v1h-1zM306 664h1v1h-1zM306 654h1v1h-1zM306 644h1v1h-1zM306 634h1v1h-1zM306 624h1v1h-1zM306 614h1v1h-1zM306 604h1v1h-1zM306 594h1v1h-1zM306 584h1v1h-1zM306 574h1v1h-1zM306 564h1v1h-1zM306 554h1v1h-1zM306 544h1v1h-1zM306 534h1v1h-1zM306 523h1v1h-1zM306 513h1v1h-1zM306 503h1v1h-1zM306 493h1v1h-1zM306 483h1v1h-1zM306 473h1v1h-1zM306 463h1v1h-1zM306 453h1v1h-1zM306 443h1v1h-1zM306 433h1v1h-1zM306 423h1v1h-1zM306 413h1v1h-1zM306 403h1v1h-1zM306 393h1v1h-1zM306 383h1v1h-1zM306 373h1v1h-1zM306 363h1v1h-1zM306 353h1v1h-1zM306 343h1v1h-1zM306 333h1v1h-1zM306 323h1v1h-1zM306 313h1v1h-1zM306 303h1v1h-1zM306 293h1v1h-1zM306 283h1v1h-1zM306 273h1v1h-1zM306 263h1v1h-1zM306 253h1v1h-1zM306 243h1v1h-1zM306 233h1v1h-1zM306 223h1v1h-1zM306 213h1v1h-1zM306 203h1v1h-1zM306 193h1v1h-1zM306 183h1v1h-1zM306 173h1v1h-1zM306 163h1v1h-1zM306 153h1v1h-1zM316 744h1v1h-1zM316 734h1v1h-1zM316 724h1v1h-1zM316 714h1v1h-1zM316 704h1v1h-1zM316 694h1v1h-1zM316 684h1v1h-1zM316 674h1v1h-1zM316 664h1v1h-1zM316 654h1v1h-1zM316 644h1v1h-1zM316 634h1v1h-1zM316 624h1v1h-1zM316 614h1v1h-1zM316 604h1v1h-1zM316 594h1v1h-1zM316 584h1v1h-1zM316 574h1v1h-1zM316 564h1v1h-1zM316 554h1v1h-1zM316 544h1v1h-1zM316 534h1v1h-1zM316 523h1v1h-1zM316 513h1v1h-1zM316 503h1v1h-1zM316 493h1v1h-1zM316 483h1v1h-1zM316 473h1v1h-1zM316 463h1v1h-1zM316 453h1v1h-1zM316 443h1v1h-1zM316 433h1v1h-1zM316 423h1v1h-1zM316 413h1v1h-1zM316 403h1v1h-1zM316 393h1v1h-1zM316 383h1v1h-1zM316 373h1v1h-1zM316 363h1v1h-1zM316 353h1v1h-1zM316 343h1v1h-1zM316 333h1v1h-1zM316 323h1v1h-1zM316 313h1v1h-1zM316 303h1v1h-1zM316 293h1v1h-1zM316 283h1v1h-1zM316 273h1v1h-1zM316 263h1v1h-1zM316 253h1v1h-1zM316 243h1v1h-1zM316 233h1v1h-1zM316 223h1v1h-1zM316 213h1v1h-1zM316 203h1v1h-1zM316 193h1v1h-1zM316 183h1v1h-1zM316 173h1v1h-1zM316 163h1v1h-1zM316 153h1v1h-1zM326 744h1v1h-1zM326 734h1v1h-1zM326 724h1v1h-1zM326 714h1v1h-1zM326 704h1v1h-1zM326 694h1v1h-1zM326 684h1v1h-1zM326 674h1v1h-1zM326 664h1v1h-1zM326 654h1v1h-1zM326 644h1v1h-1zM326 634h1v1h-1zM326 624h1v1h-1zM326 614h1v1h-1zM326 604h1v1h-1zM326 594h1v1h-1zM326 584h1v1h-1zM326 574h1v1h-1zM326 564h1v1h-1zM326 554h1v1h-1zM326 544h1v1h-1zM326 534h1v1h-1zM326 523h1v1h-1zM326 513h1v1h-1zM326 503h1v1h-1zM326 493h1v1h-1zM326 483h1v1h-1zM326 473h1v1h-1zM326 463h1v1h-1zM326 453h1v1h-1zM326 443h1v1h-1zM326 433h1v1h-1zM326 423h1v1h-1zM326 413h1v1h-1zM326 403h1v1h-1zM326 393h1v1h-1zM326 383h1v1h-1zM326 373h1v1h-1zM326 363h1v1h-1zM326 353h1v1h-1zM326 343h1v1h-1zM326 333h1v1h-1zM326 323h1v1h-1zM326 313h1v1h-1zM326 303h1v1h-1zM326 293h1v1h-1zM326 283h1v1h-1zM326 273h1v1h-1zM326 263h1v1h-1zM326 253h1v1h-1zM326 243h1v1h-1zM326 233h1v1h-1zM326 223h1v1h-1zM326 213h1v1h-1zM326 203h1v1h-1zM326 193h1v1h-1zM326 183h1v1h-1zM326 173h1v1h-1zM326 163h1v1h-1zM326 153h1v1h-1zM336 744h1v1h-1zM336 734h1v1h-1zM336 724h1v1h-1zM336 714h1v1h-1zM336 704h1v1h-1zM336 694h1v1h-1zM336 684h1v1h-1zM336 674h1v1h-1zM336 664h1v1h-1zM336 654h1v1h-1zM336 644h1v1h-1zM336 634h1v1h-1zM336 624h1v1h-1zM336 614h1v1h-1zM336 604h1v1h-1zM336 594h1v1h-1zM336 584h1v1h-1zM336 574h1v1h-1zM336 564h1v1h-1zM336 554h1v1h-1zM336 544h1v1h-1zM336 534h1v1h-1zM336 523h1v1h-1zM336 513h1v1h-1zM336 503h1v1h-1zM336 493h1v1h-1zM336 483h1v1h-1zM336 473h1v1h-1zM336 463h1v1h-1zM336 453h1v1h-1zM336 443h1v1h-1zM336 433h1v1h-1zM336 423h1v1h-1zM336 413h1v1h-1zM336 403h1v1h-1zM336 393h1v1h-1zM336 383h1v1h-1zM336 373h1v1h-1zM336 363h1v1h-1zM336 353h1v1h-1zM336 343h1v1h-1zM336 333h1v1h-1zM336 323h1v1h-1zM336 313h1v1h-1zM336 303h1v1h-1zM336 293h1v1h-1zM336 283h1v1h-1zM336 273h1v1h-1zM336 263h1v1h-1zM336 253h1v1h-1zM336 243h1v1h-1zM336 233h1v1h-1zM336 223h1v1h-1zM336 213h1v1h-1zM336 203h1v1h-1zM336 193h1v1h-1zM336 183h1v1h-1zM336 173h1v1h-1zM336 163h1v1h-1zM336 153h1v1h-1zM346 744h1v1h-1zM346 734h1v1h-1zM346 724h1v1h-1zM346 714h1v1h-1zM346 704h1v1h-1zM346 694h1v1h-1zM346 684h1v1h-1zM346 674h1v1h-1zM346 664h1v1h-1zM346 654h1v1h-1zM346 644h1v1h-1zM346 634h1v1h-1zM346 624h1v1h-1zM346 614h1v1h-1zM346 604h1v1h-1zM346 594h1v1h-1zM346 584h1v1h-1zM346 574h1v1h-1zM346 564h1v1h-1zM346 554h1v1h-1zM346 544h1v1h-1zM346 534h1v1h-1zM346 523h1v1h-1zM346 513h1v1h-1zM346 503h1v1h-1zM346 493h1v1h-1zM346 483h1v1h-1zM346 473h1v1h-1zM346 463h1v1h-1zM346 453h1v1h-1zM346 443h1v1h-1zM346 433h1v1h-1zM346 423h1v1h-1zM346 413h1v1h-1zM346 403h1v1h-1zM346 393h1v1h-1zM346 383h1v1h-1zM346 373h1v1h-1zM346 363h1v1h-1zM346 353h1v1h-1zM346 343h1v1h-1zM346 333h1v1h-1zM346 323h1v1h-1zM346 313h1v1h-1zM346 303h1v1h-1zM346 293h1v1h-1zM346 283h1v1h-1zM346 273h1v1h-1zM346 263h1v1h-1zM346 253h1v1h-1zM346 243h1v1h-1zM346 233h1v1h-1zM346 223h1v1h-1zM346 213h1v1h-1zM346 203h1v1h-1zM346 193h1v1h-1zM346 183h1v1h-1zM346 173h1v1h-1zM346 163h1v1h-1zM346 153h1v1h-1zM356 744h1v1h-1zM356 734h1v1h-1zM356 724h1v1h-1zM356 714h1v1h-1zM356 704h1v1h-1zM356 694h1v1h-1zM356 684h1v1h-1zM356 674h1v1h-1zM356 664h1v1h-1zM356 654h1v1h-1zM356 644h1v1h-1zM356 634h1v1h-1zM356 624h1v1h-1zM356 614h1v1h-1zM356 604h1v1h-1zM356 594h1v1h-1zM356 584h1v1h-1zM356 574h1v1h-1zM356 564h1v1h-1zM356 554h1v1h-1zM356 544h1v1h-1zM356 534h1v1h-1zM356 523h1v1h-1zM356 513h1v1h-1zM356 503h1v1h-1zM356 493h1v1h-1zM356 483h1v1h-1zM356 473h1v1h-1zM356 463h1v1h-1zM356 453h1v1h-1zM356 443h1v1h-1zM356 433h1v1h-1zM356 423h1v1h-1zM356 413h1v1h-1zM356 403h1v1h-1zM356 393h1v1h-1zM356 383h1v1h-1zM356 373h1v1h-1zM356 363h1v1h-1zM356 353h1v1h-1zM356 343h1v1h-1zM356 333h1v1h-1zM356 323h1v1h-1zM356 313h1v1h-1zM356 303h1v1h-1zM356 293h1v1h-1zM356 283h1v1h-1zM356 273h1v1h-1zM356 263h1v1h-1zM356 253h1v1h-1zM356 243h1v1h-1zM356 233h1v1h-1zM356 223h1v1h-1zM356 213h1v1h-1zM356 203h1v1h-1zM356 193h1v1h-1zM356 183h1v1h-1zM356 173h1v1h-1zM356 163h1v1h-1zM356 153h1v1h-1zM366 744h1v1h-1zM366 734h1v1h-1zM366 724h1v1h-1zM366 714h1v1h-1zM366 704h1v1h-1zM366 694h1v1h-1zM366 684h1v1h-1zM366 674h1v1h-1zM366 664h1v1h-1zM366 654h1v1h-1zM366 644h1v1h-1zM366 634h1v1h-1zM366 624h1v1h-1zM366 614h1v1h-1zM366 604h1v1h-1zM366 594h1v1h-1zM366 584h1v1h-1zM366 574h1v1h-1zM366 564h1v1h-1zM366 554h1v1h-1zM366 544h1v1h-1zM366 534h1v1h-1zM366 523h1v1h-1zM366 513h1v1h-1zM366 503h1v1h-1zM366 493h1v1h-1zM366 483h1v1h-1zM366 473h1v1h-1zM366 463h1v1h-1zM366 453h1v1h-1zM366 443h1v1h-1zM366 433h1v1h-1zM366 423h1v1h-1zM366 413h1v1h-1zM366 403h1v1h-1zM366 393h1v1h-1zM366 383h1v1h-1zM366 373h1v1h-1zM366 363h1v1h-1zM366 353h1v1h-1zM366 343h1v1h-1zM366 333h1v1h-1zM366 323h1v1h-1zM366 313h1v1h-1zM366 303h1v1h-1zM366 293h1v1h-1zM366 283h1v1h-1zM366 273h1v1h-1zM366 263h1v1h-1zM366 253h1v1h-1zM366 243h1v1h-1zM366 233h1v1h-1zM366 223h1v1h-1zM366 213h1v1h-1zM366 203h1v1h-1zM366 193h1v1h-1zM366 183h1v1h-1zM366 173h1v1h-1zM366 163h1v1h-1zM366 153h1v1h-1zM376 744h1v1h-1zM376 734h1v1h-1zM376 724h1v1h-1zM376 714h1v1h-1zM376 704h1v1h-1zM376 694h1v1h-1zM376 684h1v1h-1zM376 674h1v1h-1zM376 664h1v1h-1zM376 654h1v1h-1zM376 644h1v1h-1zM376 634h1v1h-1zM376 624h1v1h-1zM376 614h1v1h-1zM376 604h1v1h-1zM376 594h1v1h-1zM376 584h1v1h-1zM376 574h1v1h-1zM376 564h1v1h-1zM376 554h1v1h-1zM376 544h1v1h-1zM376 534h1v1h-1zM376 523h1v1h-1zM376 513h1v1h-1zM376 503h1v1h-1zM376 493h1v1h-1zM376 483h1v1h-1zM376 473h1v1h-1zM376 463h1v1h-1zM376 453h1v1h-1zM376 443h1v1h-1zM376 433h1v1h-1zM376 423h1v1h-1zM376 413h1v1h-1zM376 403h1v1h-1zM376 393h1v1h-1zM376 383h1v1h-1zM376 373h1v1h-1zM376 363h1v1h-1zM376 353h1v1h-1zM376 343h1v1h-1zM376 333h1v1h-1zM376 323h1v1h-1zM376 313h1v1h-1zM376 303h1v1h-1zM376 293h1v1h-1zM376 283h1v1h-1zM376 273h1v1h-1zM376 263h1v1h-1zM376 253h1v1h-1zM376 243h1v1h-1zM376 233h1v1h-1zM376 223h1v1h-1zM376 213h1v1h-1zM376 203h1v1h-1zM376 193h1v1h-1zM376 183h1v1h-1zM376 173h1v1h-1zM376 163h1v1h-1zM376 153h1v1h-1zM386 744h1v1h-1zM386 734h1v1h-1zM386 724h1v1h-1zM386 714h1v1h-1zM386 704h1v1h-1zM386 694h1v1h-1zM386 684h1v1h-1zM386 674h1v1h-1zM386 664h1v1h-1zM386 654h1v1h-1zM386 644h1v1h-1zM386 634h1v1h-1zM386 624h1v1h-1zM386 614h1v1h-1zM386 604h1v1h-1zM386 594h1v1h-1zM386 584h1v1h-1zM386 574h1v1h-1zM386 564h1v1h-1zM386 554h1v1h-1zM386 544h1v1h-1zM386 534h1v1h-1zM386 523h1v1h-1zM386 513h1v1h-1zM386 503h1v1h-1zM386 493h1v1h-1zM386 483h1v1h-1zM386 473h1v1h-1zM386 463h1v1h-1zM386 453h1v1h-1zM386 443h1v1h-1zM386 433h1v1h-1zM386 423h1v1h-1zM386 413h1v1h-1zM386 403h1v1h-1zM386 393h1v1h-1zM386 383h1v1h-1zM386 373h1v1h-1zM386 363h1v1h-1zM386 353h1v1h-1zM386 343h1v1h-1zM386 333h1v1h-1zM386 323h1v1h-1zM386 313h1v1h-1zM386 303h1v1h-1zM386 293h1v1h-1zM386 283h1v1h-1zM386 273h1v1h-1zM386 263h1v1h-1zM386 253h1v1h-1zM386 243h1v1h-1zM386 233h1v1h-1zM386 223h1v1h-1zM386 213h1v1h-1zM386 203h1v1h-1zM386 193h1v1h-1zM386 183h1v1h-1zM386 173h1v1h-1zM386 163h1v1h-1zM386 153h1v1h-1zM396 744h1v1h-1zM396 734h1v1h-1zM396 724h1v1h-1zM396 714h1v1h-1zM396 704h1v1h-1zM396 694h1v1h-1zM396 684h1v1h-1zM396 674h1v1h-1zM396 664h1v1h-1zM396 654h1v1h-1zM396 644h1v1h-1zM396 634h1v1h-1zM396 624h1v1h-1zM396 614h1v1h-1zM396 604h1v1h-1zM396 594h1v1h-1zM396 584h1v1h-1zM396 574h1v1h-1zM396 564h1v1h-1zM396 554h1v1h-1zM396 544h1v1h-1zM396 534h1v1h-1zM396 523h1v1h-1zM396 513h1v1h-1zM396 503h1v1h-1zM396 493h1v1h-1zM396 483h1v1h-1zM396 473h1v1h-1zM396 463h1v1h-1zM396 453h1v1h-1zM396 443h1v1h-1zM396 433h1v1h-1zM396 423h1v1h-1zM396 413h1v1h-1zM396 403h1v1h-1zM396 393h1v1h-1zM396 383h1v1h-1zM396 373h1v1h-1zM396 363h1v1h-1zM396 353h1v1h-1zM396 343h1v1h-1zM396 333h1v1h-1zM396 323h1v1h-1zM396 313h1v1h-1zM396 303h1v1h-1zM396 293h1v1h-1zM396 283h1v1h-1zM396 273h1v1h-1zM396 263h1v1h-1zM396 253h1v1h-1zM396 243h1v1h-1zM396 233h1v1h-1zM396 223h1v1h-1zM396 213h1v1h-1zM396 203h1v1h-1zM396 193h1v1h-1zM396 183h1v1h-1zM396 173h1v1h-1zM396 163h1v1h-1zM396 153h1v1h-1zM406 744h1v1h-1zM406 734h1v1h-1zM406 724h1v1h-1zM406 714h1v1h-1zM406 704h1v1h-1zM406 694h1v1h-1zM406 684h1v1h-1zM406 674h1v1h-1zM406 664h1v1h-1zM406 654h1v1h-1zM406 644h1v1h-1zM406 634h1v1h-1zM406 624h1v1h-1zM406 614h1v1h-1zM406 604h1v1h-1zM406 594h1v1h-1zM406 584h1v1h-1zM406 574h1v1h-1zM406 564h1v1h-1zM406 554h1v1h-1zM406 544h1v1h-1zM406 534h1v1h-1zM406 523h1v1h-1zM406 513h1v1h-1zM406 503h1v1h-1zM406 493h1v1h-1zM406 483h1v1h-1zM406 473h1v1h-1zM406 463h1v1h-1zM406 453h1v1h-1zM406 443h1v1h-1zM406 433h1v1h-1zM406 423h1v1h-1zM406 413h1v1h-1zM406 403h1v1h-1zM406 393h1v1h-1zM406 383h1v1h-1zM406 373h1v1h-1zM406 363h1v1h-1zM406 353h1v1h-1zM406 343h1v1h-1zM406 333h1v1h-1zM406 323h1v1h-1zM406 313h1v1h-1zM406 303h1v1h-1zM406 293h1v1h-1zM406 283h1v1h-1zM406 273h1v1h-1zM406 263h1v1h-1zM406 253h1v1h-1zM406 243h1v1h-1zM406 233h1v1h-1zM406 223h1v1h-1zM406 213h1v1h-1zM406 203h1v1h-1zM406 193h1v1h-1zM406 183h1v1h-1zM406 173h1v1h-1zM406 163h1v1h-1zM406 153h1v1h-1zM416 744h1v1h-1zM416 734h1v1h-1zM416 724h1v1h-1zM416 714h1v1h-1zM416 704h1v1h-1zM416 694h1v1h-1zM416 684h1v1h-1zM416 674h1v1h-1zM416 664h1v1h-1zM416 654h1v1h-1zM416 644h1v1h-1zM416 634h1v1h-1zM416 624h1v1h-1zM416 614h1v1h-1zM416 604h1v1h-1zM416 594h1v1h-1zM416 584h1v1h-1zM416 574h1v1h-1zM416 564h1v1h-1zM416 554h1v1h-1zM416 544h1v1h-1zM416 534h1v1h-1zM416 523h1v1h-1zM416 513h1v1h-1zM416 503h1v1h-1zM416 493h1v1h-1zM416 483h1v1h-1zM416 473h1v1h-1zM416 463h1v1h-1zM416 453h1v1h-1zM416 443h1v1h-1zM416 433h1v1h-1zM416 423h1v1h-1zM416 413h1v1h-1zM416 403h1v1h-1zM416 393h1v1h-1zM416 383h1v1h-1zM416 373h1v1h-1zM416 363h1v1h-1zM416 353h1v1h-1zM416 343h1v1h-1zM416 333h1v1h-1zM416 323h1v1h-1zM416 313h1v1h-1zM416 303h1v1h-1zM416 293h1v1h-1zM416 283h1v1h-1zM416 273h1v1h-1zM416 263h1v1h-1zM416 253h1v1h-1zM416 243h1v1h-1zM416 233h1v1h-1zM416 223h1v1h-1zM416 213h1v1h-1zM416 203h1v1h-1zM416 193h1v1h-1zM416 183h1v1h-1zM416 173h1v1h-1zM416 163h1v1h-1zM416 153h1v1h-1zM426 744h1v1h-1zM426 734h1v1h-1zM426 724h1v1h-1zM426 714h1v1h-1zM426 704h1v1h-1zM426 694h1v1h-1zM426 684h1v1h-1zM426 674h1v1h-1zM426 664h1v1h-1zM426 654h1v1h-1zM426 644h1v1h-1zM426 634h1v1h-1zM426 624h1v1h-1zM426 614h1v1h-1zM426 604h1v1h-1zM426 594h1v1h-1zM426 584h1v1h-1zM426 574h1v1h-1zM426 564h1v1h-1zM426 554h1v1h-1zM426 544h1v1h-1zM426 534h1v1h-1zM426 523h1v1h-1zM426 513h1v1h-1zM426 503h1v1h-1zM426 493h1v1h-1zM426 483h1v1h-1zM426 473h1v1h-1zM426 463h1v1h-1zM426 453h1v1h-1zM426 443h1v1h-1zM426 433h1v1h-1zM426 423h1v1h-1zM426 413h1v1h-1zM426 403h1v1h-1zM426 393h1v1h-1zM426 383h1v1h-1zM426 373h1v1h-1zM426 363h1v1h-1zM426 353h1v1h-1zM426 343h1v1h-1zM426 333h1v1h-1zM426 323h1v1h-1zM426 313h1v1h-1zM426 303h1v1h-1zM426 293h1v1h-1zM426 283h1v1h-1zM426 273h1v1h-1zM426 263h1v1h-1zM426 253h1v1h-1zM426 243h1v1h-1zM426 233h1v1h-1zM426 223h1v1h-1zM426 213h1v1h-1zM426 203h1v1h-1zM426 193h1v1h-1zM426 183h1v1h-1zM426 173h1v1h-1zM426 163h1v1h-1zM426 153h1v1h-1zM436 744h1v1h-1zM436 734h1v1h-1zM436 724h1v1h-1zM436 714h1v1h-1zM436 704h1v1h-1zM436 694h1v1h-1zM436 684h1v1h-1zM436 674h1v1h-1zM436 664h1v1h-1zM436 654h1v1h-1zM436 644h1v1h-1zM436 634h1v1h-1zM436 624h1v1h-1zM436 614h1v1h-1zM436 604h1v1h-1zM436 594h1v1h-1zM436 584h1v1h-1zM436 574h1v1h-1zM436 564h1v1h-1zM436 554h1v1h-1zM436 544h1v1h-1zM436 534h1v1h-1zM436 523h1v1h-1zM436 513h1v1h-1zM436 503h1v1h-1zM436 493h1v1h-1zM436 483h1v1h-1zM436 473h1v1h-1zM436 463h1v1h-1zM436 453h1v1h-1zM436 443h1v1h-1zM436 433h1v1h-1zM436 423h1v1h-1zM436 413h1v1h-1zM436 403h1v1h-1zM436 393h1v1h-1zM436 383h1v1h-1zM436 373h1v1h-1zM436 363h1v1h-1zM436 353h1v1h-1zM436 343h1v1h-1zM436 333h1v1h-1zM436 323h1v1h-1zM436 313h1v1h-1zM436 303h1v1h-1zM436 293h1v1h-1zM436 283h1v1h-1zM436 273h1v1h-1zM436 263h1v1h-1zM436 253h1v1h-1zM436 243h1v1h-1zM436 233h1v1h-1zM436 223h1v1h-1zM436 213h1v1h-1zM436 203h1v1h-1zM436 193h1v1h-1zM436 183h1v1h-1zM436 173h1v1h-1zM436 163h1v1h-1zM436 153h1v1h-1zM446 744h1v1h-1zM446 734h1v1h-1zM446 724h1v1h-1zM446 714h1v1h-1zM446 704h1v1h-1zM446 694h1v1h-1zM446 684h1v1h-1zM446 674h1v1h-1zM446 664h1v1h-1zM446 654h1v1h-1zM446 644h1v1h-1zM446 634h1v1h-1zM446 624h1v1h-1zM446 614h1v1h-1zM446 604h1v1h-1zM446 594h1v1h-1zM446 584h1v1h-1zM446 574h1v1h-1zM446 564h1v1h-1zM446 554h1v1h-1zM446 544h1v1h-1zM446 534h1v1h-1zM446 523h1v1h-1zM446 513h1v1h-1zM446 503h1v1h-1zM446 493h1v1h-1zM446 483h1v1h-1zM446 473h1v1h-1zM446 463h1v1h-1zM446 453h1v1h-1zM446 443h1v1h-1zM446 433h1v1h-1zM446 423h1v1h-1zM446 413h1v1h-1zM446 403h1v1h-1zM446 393h1v1h-1zM446 383h1v1h-1zM446 373h1v1h-1zM446 363h1v1h-1zM446 353h1v1h-1zM446 343h1v1h-1zM446 333h1v1h-1zM446 323h1v1h-1zM446 313h1v1h-1zM446 303h1v1h-1zM446 293h1v1h-1zM446 283h1v1h-1zM446 273h1v1h-1zM446 263h1v1h-1zM446 253h1v1h-1zM446 243h1v1h-1zM446 233h1v1h-1zM446 223h1v1h-1zM446 213h1v1h-1zM446 203h1v1h-1zM446 193h1v1h-1zM446 183h1v1h-1zM446 173h1v1h-1zM446 163h1v1h-1zM446 153h1v1h-1zM456 744h1v1h-1zM456 734h1v1h-1zM456 724h1v1h-1zM456 714h1v1h-1zM456 704h1v1h-1zM456 694h1v1h-1zM456 684h1v1h-1zM456 674h1v1h-1zM456 664h1v1h-1zM456 654h1v1h-1zM456 644h1v1h-1zM456 634h1v1h-1zM456 624h1v1h-1zM456 614h1v1h-1zM456 604h1v1h-1zM456 594h1v1h-1zM456 584h1v1h-1zM456 574h1v1h-1zM456 564h1v1h-1zM456 554h1v1h-1zM456 544h1v1h-1zM456 534h1v1h-1zM456 523h1v1h-1zM456 513h1v1h-1zM456 503h1v1h-1zM456 493h1v1h-1zM456 483h1v1h-1zM456 473h1v1h-1zM456 463h1v1h-1zM456 453h1v1h-1zM456 443h1v1h-1zM456 433h1v1h-1zM456 423h1v1h-1zM456 413h1v1h-1zM456 403h1v1h-1zM456 393h1v1h-1zM456 383h1v1h-1zM456 373h1v1h-1zM456 363h1v1h-1zM456 353h1v1h-1zM456 343h1v1h-1zM456 333h1v1h-1zM456 323h1v1h-1zM456 313h1v1h-1zM456 303h1v1h-1zM456 293h1v1h-1zM456 283h1v1h-1zM456 273h1v1h-1zM456 263h1v1h-1zM456 253h1v1h-1zM456 243h1v1h-1zM456 233h1v1h-1zM456 223h1v1h-1zM456 213h1v1h-1zM456 203h1v1h-1zM456 193h1v1h-1zM456 183h1v1h-1zM456 173h1v1h-1zM456 163h1v1h-1zM456 153h1v1h-1zM466 744h1v1h-1zM466 734h1v1h-1zM466 724h1v1h-1zM466 714h1v1h-1zM466 704h1v1h-1zM466 694h1v1h-1zM466 684h1v1h-1zM466 674h1v1h-1zM466 664h1v1h-1zM466 654h1v1h-1zM466 644h1v1h-1zM466 634h1v1h-1zM466 624h1v1h-1zM466 614h1v1h-1zM466 604h1v1h-1zM466 594h1v1h-1zM466 584h1v1h-1zM466 574h1v1h-1zM466 564h1v1h-1zM466 554h1v1h-1zM466 544h1v1h-1zM466 534h1v1h-1zM466 523h1v1h-1zM466 513h1v1h-1zM466 503h1v1h-1zM466 493h1v1h-1zM466 483h1v1h-1zM466 473h1v1h-1zM466 463h1v1h-1zM466 453h1v1h-1zM466 443h1v1h-1zM466 433h1v1h-1zM466 423h1v1h-1zM466 413h1v1h-1zM466 403h1v1h-1zM466 393h1v1h-1zM466 383h1v1h-1zM466 373h1v1h-1zM466 363h1v1h-1zM466 353h1v1h-1zM466 343h1v1h-1zM466 333h1v1h-1zM466 323h1v1h-1zM466 313h1v1h-1zM466 303h1v1h-1zM466 293h1v1h-1zM466 283h1v1h-1zM466 273h1v1h-1zM466 263h1v1h-1zM466 253h1v1h-1zM466 243h1v1h-1zM466 233h1v1h-1zM466 223h1v1h-1zM466 213h1v1h-1zM466 203h1v1h-1zM466 193h1v1h-1zM466 183h1v1h-1zM466 173h1v1h-1zM466 163h1v1h-1zM466 153h1v1h-1zM476 744h1v1h-1zM476 734h1v1h-1zM476 724h1v1h-1zM476 714h1v1h-1zM476 704h1v1h-1zM476 694h1v1h-1zM476 684h1v1h-1zM476 674h1v1h-1zM476 664h1v1h-1zM476 654h1v1h-1zM476 644h1v1h-1zM476 634h1v1h-1zM476 624h1v1h-1zM476 614h1v1h-1zM476 604h1v1h-1zM476 594h1v1h-1zM476 584h1v1h-1zM476 574h1v1h-1zM476 564h1v1h-1zM476 554h1v1h-1zM476 544h1v1h-1zM476 534h1v1h-1zM476 523h1v1h-1zM476 513h1v1h-1zM476 503h1v1h-1zM476 493h1v1h-1zM476 483h1v1h-1zM476 473h1v1h-1zM476 463h1v1h-1zM476 453h1v1h-1zM476 443h1v1h-1zM476 433h1v1h-1zM476 423h1v1h-1zM476 413h1v1h-1zM476 403h1v1h-1zM476 393h1v1h-1zM476 383h1v1h-1zM476 373h1v1h-1zM476 363h1v1h-1zM476 353h1v1h-1zM476 343h1v1h-1zM476 333h1v1h-1zM476 323h1v1h-1zM476 313h1v1h-1zM476 303h1v1h-1zM476 293h1v1h-1zM476 283h1v1h-1zM476 273h1v1h-1zM476 263h1v1h-1zM476 253h1v1h-1zM476 243h1v1h-1zM476 233h1v1h-1zM476 223h1v1h-1zM476 213h1v1h-1zM476 203h1v1h-1zM476 193h1v1h-1zM476 183h1v1h-1zM476 173h1v1h-1zM476 163h1v1h-1zM476 153h1v1h-1zM486 744h1v1h-1zM486 734h1v1h-1zM486 724h1v1h-1zM486 714h1v1h-1zM486 704h1v1h-1zM486 694h1v1h-1zM486 684h1v1h-1zM486 674h1v1h-1zM486 664h1v1h-1zM486 654h1v1h-1zM486 644h1v1h-1zM486 634h1v1h-1zM486 624h1v1h-1zM486 614h1v1h-1zM486 604h1v1h-1zM486 594h1v1h-1zM486 584h1v1h-1zM486 574h1v1h-1zM486 564h1v1h-1zM486 554h1v1h-1zM486 544h1v1h-1zM486 534h1v1h-1zM486 523h1v1h-1zM486 513h1v1h-1zM486 503h1v1h-1zM486 493h1v1h-1zM486 483h1v1h-1zM486 473h1v1h-1zM486 463h1v1h-1zM486 453h1v1h-1zM486 443h1v1h-1zM486 433h1v1h-1zM486 423h1v1h-1zM486 413h1v1h-1zM486 403h1v1h-1zM486 393h1v1h-1zM486 383h1v1h-1zM486 373h1v1h-1zM486 363h1v1h-1zM486 353h1v1h-1zM486 343h1v1h-1zM486 333h1v1h-1zM486 323h1v1h-1zM486 313h1v1h-1zM486 303h1v1h-1zM486 293h1v1h-1zM486 283h1v1h-1zM486 273h1v1h-1zM486 263h1v1h-1zM486 253h1v1h-1zM486 243h1v1h-1zM486 233h1v1h-1zM486 223h1v1h-1zM486 213h1v1h-1zM486 203h1v1h-1zM486 193h1v1h-1zM486 183h1v1h-1zM486 173h1v1h-1zM486 163h1v1h-1zM486 153h1v1h-1zM496 744h1v1h-1zM496 734h1v1h-1zM496 724h1v1h-1zM496 714h1v1h-1zM496 704h1v1h-1zM496 694h1v1h-1zM496 684h1v1h-1zM496 674h1v1h-1zM496 664h1v1h-1zM496 654h1v1h-1zM496 644h1v1h-1zM496 634h1v1h-1zM496 624h1v1h-1zM496 614h1v1h-1zM496 604h1v1h-1zM496 594h1v1h-1zM496 584h1v1h-1zM496 574h1v1h-1zM496 564h1v1h-1zM496 554h1v1h-1zM496 544h1v1h-1zM496 534h1v1h-1zM496 523h1v1h-1zM496 513h1v1h-1zM496 503h1v1h-1zM496 493h1v1h-1zM496 483h1v1h-1zM496 473h1v1h-1zM496 463h1v1h-1zM496 453h1v1h-1zM496 443h1v1h-1zM496 433h1v1h-1zM496 423h1v1h-1zM496 413h1v1h-1zM496 403h1v1h-1zM496 393h1v1h-1zM496 383h1v1h-1zM496 373h1v1h-1zM496 363h1v1h-1zM496 353h1v1h-1zM496 343h1v1h-1zM496 333h1v1h-1zM496 323h1v1h-1zM496 313h1v1h-1zM496 303h1v1h-1zM496 293h1v1h-1zM496 283h1v1h-1zM496 273h1v1h-1zM496 263h1v1h-1zM496 253h1v1h-1zM496 243h1v1h-1zM496 233h1v1h-1zM496 223h1v1h-1zM496 213h1v1h-1zM496 203h1v1h-1zM496 193h1v1h-1zM496 183h1v1h-1zM496 173h1v1h-1zM496 163h1v1h-1zM496 153h1v1h-1zM506 744h1v1h-1zM506 734h1v1h-1zM506 724h1v1h-1zM506 714h1v1h-1zM506 704h1v1h-1zM506 694h1v1h-1zM506 684h1v1h-1zM506 674h1v1h-1zM506 664h1v1h-1zM506 654h1v1h-1zM506 644h1v1h-1zM506 634h1v1h-1zM506 624h1v1h-1zM506 614h1v1h-1zM506 604h1v1h-1zM506 594h1v1h-1zM506 584h1v1h-1zM506 574h1v1h-1zM506 564h1v1h-1zM506 554h1v1h-1zM506 544h1v1h-1zM506 534h1v1h-1zM506 523h1v1h-1zM506 513h1v1h-1zM506 503h1v1h-1zM506 493h1v1h-1zM506 483h1v1h-1zM506 473h1v1h-1zM506 463h1v1h-1zM506 453h1v1h-1zM506 443h1v1h-1zM506 433h1v1h-1zM506 423h1v1h-1zM506 413h1v1h-1zM506 403h1v1h-1zM506 393h1v1h-1zM506 383h1v1h-1zM506 373h1v1h-1zM506 363h1v1h-1zM506 353h1v1h-1zM506 343h1v1h-1zM506 333h1v1h-1zM506 323h1v1h-1zM506 313h1v1h-1zM506 303h1v1h-1zM506 293h1v1h-1zM506 283h1v1h-1zM506 273h1v1h-1zM506 263h1v1h-1zM506 253h1v1h-1zM506 243h1v1h-1zM506 233h1v1h-1zM506 223h1v1h-1zM506 213h1v1h-1zM506 203h1v1h-1zM506 193h1v1h-1zM506 183h1v1h-1zM506 173h1v1h-1zM506 163h1v1h-1zM506 153h1v1h-1zM517 744h1v1h-1zM517 734h1v1h-1zM517 724h1v1h-1zM517 714h1v1h-1zM517 704h1v1h-1zM517 694h1v1h-1zM517 684h1v1h-1zM517 674h1v1h-1zM517 664h1v1h-1zM517 654h1v1h-1zM517 644h1v1h-1zM517 634h1v1h-1zM517 624h1v1h-1zM517 614h1v1h-1zM517 604h1v1h-1zM517 594h1v1h-1zM517 584h1v1h-1zM517 574h1v1h-1zM517 564h1v1h-1zM517 554h1v1h-1zM517 544h1v1h-1zM517 534h1v1h-1zM517 523h1v1h-1zM517 513h1v1h-1zM517 503h1v1h-1zM517 493h1v1h-1zM517 483h1v1h-1zM517 473h1v1h-1zM517 463h1v1h-1zM517 453h1v1h-1zM517 443h1v1h-1zM517 433h1v1h-1zM517 423h1v1h-1zM517 413h1v1h-1zM517 403h1v1h-1zM517 393h1v1h-1zM517 383h1v1h-1zM517 373h1v1h-1zM517 363h1v1h-1zM517 353h1v1h-1zM517 343h1v1h-1zM517 333h1v1h-1zM517 323h1v1h-1zM517 313h1v1h-1zM517 303h1v1h-1zM517 293h1v1h-1zM517 283h1v1h-1zM517 273h1v1h-1zM517 263h1v1h-1zM517 253h1v1h-1zM517 243h1v1h-1zM517 233h1v1h-1zM517 223h1v1h-1zM517 213h1v1h-1zM517 203h1v1h-1zM517 193h1v1h-1zM517 183h1v1h-1zM517 173h1v1h-1zM517 163h1v1h-1zM517 153h1v1h-1zM527 744h1v1h-1zM527 734h1v1h-1zM527 724h1v1h-1zM527 714h1v1h-1zM527 704h1v1h-1zM527 694h1v1h-1zM527 684h1v1h-1zM527 674h1v1h-1zM527 664h1v1h-1zM527 654h1v1h-1zM527 644h1v1h-1zM527 634h1v1h-1zM527 624h1v1h-1zM527 614h1v1h-1zM527 604h1v1h-1zM527 594h1v1h-1zM527 584h1v1h-1zM527 574h1v1h-1zM527 564h1v1h-1zM527 554h1v1h-1zM527 544h1v1h-1zM527 534h1v1h-1zM527 523h1v1h-1zM527 513h1v1h-1zM527 503h1v1h-1zM527 493h1v1h-1zM527 483h1v1h-1zM527 473h1v1h-1zM527 463h1v1h-1zM527 453h1v1h-1zM527 443h1v1h-1zM527 433h1v1h-1zM527 423h1v1h-1zM527 413h1v1h-1zM527 403h1v1h-1zM527 393h1v1h-1zM527 383h1v1h-1zM527 373h1v1h-1zM527 363h1v1h-1zM527 353h1v1h-1zM527 343h1v1h-1zM527 333h1v1h-1zM527 323h1v1h-1zM527 313h1v1h-1zM527 303h1v1h-1zM527 293h1v1h-1zM527 283h1v1h-1zM527 273h1v1h-1zM527 263h1v1h-1zM527 253h1v1h-1zM527 243h1v1h-1zM527 233h1v1h-1zM527 223h1v1h-1zM527 213h1v1h-1zM527 203h1v1h-1zM527 193h1v1h-1zM527 183h1v1h-1zM527 173h1v1h-1zM527 163h1v1h-1zM527 153h1v1h-1zM537 744h1v1h-1zM537 734h1v1h-1zM537 724h1v1h-1zM537 714h1v1h-1zM537 704h1v1h-1zM537 694h1v1h-1zM537 684h1v1h-1zM537 674h1v1h-1zM537 664h1v1h-1zM537 654h1v1h-1zM537 644h1v1h-1zM537 634h1v1h-1zM537 624h1v1h-1zM537 614h1v1h-1zM537 604h1v1h-1zM537 594h1v1h-1zM537 584h1v1h-1zM537 574h1v1h-1zM537 564h1v1h-1zM537 554h1v1h-1zM537 544h1v1h-1zM537 534h1v1h-1zM537 523h1v1h-1zM537 513h1v1h-1zM537 503h1v1h-1zM537 493h1v1h-1zM537 483h1v1h-1zM537 473h1v1h-1zM537 463h1v1h-1zM537 453h1v1h-1zM537 443h1v1h-1zM537 433h1v1h-1zM537 423h1v1h-1zM537 413h1v1h-1zM537 403h1v1h-1zM537 393h1v1h-1zM537 383h1v1h-1zM537 373h1v1h-1zM537 363h1v1h-1zM537 353h1v1h-1zM537 343h1v1h-1zM537 333h1v1h-1zM537 323h1v1h-1zM537 313h1v1h-1zM537 303h1v1h-1zM537 293h1v1h-1zM537 283h1v1h-1zM537 273h1v1h-1zM537 263h1v1h-1zM537 253h1v1h-1zM537 243h1v1h-1zM537 233h1v1h-1zM537 223h1v1h-1zM537 213h1v1h-1zM537 203h1v1h-1zM537 193h1v1h-1zM537 183h1v1h-1zM537 173h1v1h-1zM537 163h1v1h-1zM537 153h1v1h-1zM547 744h1v1h-1zM547 734h1v1h-1zM547 724h1v1h-1zM547 714h1v1h-1zM547 704h1v1h-1zM547 694h1v1h-1zM547 684h1v1h-1zM547 674h1v1h-1zM547 664h1v1h-1zM547 654h1v1h-1zM547 644h1v1h-1zM547 634h1v1h-1zM547 624h1v1h-1zM547 614h1v1h-1zM547 604h1v1h-1zM547 594h1v1h-1zM547 584h1v1h-1zM547 574h1v1h-1zM547 564h1v1h-1zM547 554h1v1h-1zM547 544h1v1h-1zM547 534h1v1h-1zM547 523h1v1h-1zM547 513h1v1h-1zM547 503h1v1h-1zM547 493h1v1h-1zM547 483h1v1h-1zM547 473h1v1h-1zM547 463h1v1h-1zM547 453h1v1h-1zM547 443h1v1h-1zM547 433h1v1h-1zM547 423h1v1h-1zM547 413h1v1h-1zM547 403h1v1h-1zM547 393h1v1h-1zM547 383h1v1h-1zM547 373h1v1h-1zM547 363h1v1h-1zM547 353h1v1h-1zM547 343h1v1h-1zM547 333h1v1h-1zM547 323h1v1h-1zM547 313h1v1h-1zM547 303h1v1h-1zM547 293h1v1h-1zM547 283h1v1h-1zM547 273h1v1h-1zM547 263h1v1h-1zM547 253h1v1h-1zM547 243h1v1h-1zM547 233h1v1h-1zM547 223h1v1h-1zM547 213h1v1h-1zM547 203h1v1h-1zM547 193h1v1h-1zM547 183h1v1h-1zM547 173h1v1h-1zM547 163h1v1h-1zM547 153h1v1h-1zM557 744h1v1h-1zM557 734h1v1h-1zM557 724h1v1h-1zM557 714h1v1h-1zM557 704h1v1h-1zM557 694h1v1h-1zM557 684h1v1h-1zM557 674h1v1h-1zM557 664h1v1h-1zM557 654h1v1h-1zM557 644h1v1h-1zM557 634h1v1h-1zM557 624h1v1h-1zM557 614h1v1h-1zM557 604h1v1h-1zM557 594h1v1h-1zM557 584h1v1h-1zM557 574h1v1h-1zM557 564h1v1h-1zM557 554h1v1h-1zM557 544h1v1h-1zM557 534h1v1h-1zM557 523h1v1h-1zM557 513h1v1h-1zM557 503h1v1h-1zM557 493h1v1h-1zM557 483h1v1h-1zM557 473h1v1h-1zM557 463h1v1h-1zM557 453h1v1h-1zM557 443h1v1h-1zM557 433h1v1h-1zM557 423h1v1h-1zM557 413h1v1h-1zM557 403h1v1h-1zM557 393h1v1h-1zM557 383h1v1h-1zM557 373h1v1h-1zM557 363h1v1h-1zM557 353h1v1h-1zM557 343h1v1h-1zM557 333h1v1h-1zM557 323h1v1h-1zM557 313h1v1h-1zM557 303h1v1h-1zM557 293h1v1h-1zM557 283h1v1h-1zM557 273h1v1h-1zM557 263h1v1h-1zM557 253h1v1h-1zM557 243h1v1h-1zM557 233h1v1h-1zM557 223h1v1h-1zM557 213h1v1h-1zM557 203h1v1h-1zM557 193h1v1h-1zM557 183h1v1h-1zM557 173h1v1h-1zM557 163h1v1h-1zM557 153h1v1h-1zM567 744h1v1h-1zM567 734h1v1h-1zM567 724h1v1h-1zM567 714h1v1h-1zM567 704h1v1h-1zM567 694h1v1h-1zM567 684h1v1h-1zM567 674h1v1h-1zM567 664h1v1h-1zM567 654h1v1h-1zM567 644h1v1h-1zM567 634h1v1h-1zM567 624h1v1h-1zM567 614h1v1h-1zM567 604h1v1h-1zM567 594h1v1h-1zM567 584h1v1h-1zM567 574h1v1h-1zM567 564h1v1h-1zM567 554h1v1h-1zM567 544h1v1h-1zM567 534h1v1h-1zM567 523h1v1h-1zM567 513h1v1h-1zM567 503h1v1h-1zM567 493h1v1h-1zM567 483h1v1h-1zM567 473h1v1h-1zM567 463h1v1h-1zM567 453h1v1h-1zM567 443h1v1h-1zM567 433h1v1h-1zM567 423h1v1h-1zM567 413h1v1h-1zM567 403h1v1h-1zM567 393h1v1h-1zM567 383h1v1h-1zM567 373h1v1h-1zM567 363h1v1h-1zM567 353h1v1h-1zM567 343h1v1h-1zM567 333h1v1h-1zM567 323h1v1h-1zM567 313h1v1h-1zM567 303h1v1h-1zM567 293h1v1h-1zM567 283h1v1h-1zM567 273h1v1h-1zM567 263h1v1h-1zM567 253h1v1h-1zM567 243h1v1h-1zM567 233h1v1h-1zM567 223h1v1h-1zM567 213h1v1h-1zM567 203h1v1h-1zM567 193h1v1h-1zM567 183h1v1h-1zM567 173h1v1h-1zM567 163h1v1h-1zM567 153h1v1h-1zM577 744h1v1h-1zM577 734h1v1h-1zM577 724h1v1h-1zM577 714h1v1h-1zM577 704h1v1h-1zM577 694h1v1h-1zM577 684h1v1h-1zM577 674h1v1h-1zM577 664h1v1h-1zM577 654h1v1h-1zM577 644h1v1h-1zM577 634h1v1h-1zM577 624h1v1h-1zM577 614h1v1h-1zM577 604h1v1h-1zM577 594h1v1h-1zM577 584h1v1h-1zM577 574h1v1h-1zM577 564h1v1h-1zM577 554h1v1h-1zM577 544h1v1h-1zM577 534h1v1h-1zM577 523h1v1h-1zM577 513h1v1h-1zM577 503h1v1h-1zM577 493h1v1h-1zM577 483h1v1h-1zM577 473h1v1h-1zM577 463h1v1h-1zM577 453h1v1h-1zM577 443h1v1h-1zM577 433h1v1h-1zM577 423h1v1h-1zM577 413h1v1h-1zM577 403h1v1h-1zM577 393h1v1h-1zM577 383h1v1h-1zM577 373h1v1h-1zM577 363h1v1h-1zM577 353h1v1h-1zM577 343h1v1h-1zM577 333h1v1h-1zM577 323h1v1h-1zM577 313h1v1h-1zM577 303h1v1h-1zM577 293h1v1h-1zM577 283h1v1h-1zM577 273h1v1h-1zM577 263h1v1h-1zM577 253h1v1h-1zM577 243h1v1h-1zM577 233h1v1h-1zM577 223h1v1h-1zM577 213h1v1h-1zM577 203h1v1h-1zM577 193h1v1h-1zM577 183h1v1h-1zM577 173h1v1h-1zM577 163h1v1h-1zM577 153h1v1h-1zM587 744h1v1h-1zM587 734h1v1h-1zM587 724h1v1h-1zM587 714h1v1h-1zM587 704h1v1h-1zM587 694h1v1h-1zM587 684h1v1h-1zM587 674h1v1h-1zM587 664h1v1h-1zM587 654h1v1h-1zM587 644h1v1h-1zM587 634h1v1h-1zM587 624h1v1h-1zM587 614h1v1h-1zM587 604h1v1h-1zM587 594h1v1h-1zM587 584h1v1h-1zM587 574h1v1h-1zM587 564h1v1h-1zM587 554h1v1h-1zM587 544h1v1h-1zM587 534h1v1h-1zM587 523h1v1h-1zM587 513h1v1h-1zM587 503h1v1h-1zM587 493h1v1h-1zM587 483h1v1h-1zM587 473h1v1h-1zM587 463h1v1h-1zM587 453h1v1h-1zM587 443h1v1h-1zM587 433h1v1h-1zM587 423h1v1h-1zM587 413h1v1h-1zM587 403h1v1h-1zM587 393h1v1h-1zM587 383h1v1h-1zM587 373h1v1h-1zM587 363h1v1h-1zM587 353h1v1h-1zM587 343h1v1h-1zM587 333h1v1h-1zM587 323h1v1h-1zM587 313h1v1h-1zM587 303h1v1h-1zM587 293h1v1h-1zM587 283h1v1h-1zM587 273h1v1h-1zM587 263h1v1h-1zM587 253h1v1h-1zM587 243h1v1h-1zM587 233h1v1h-1zM587 223h1v1h-1zM587 213h1v1h-1zM587 203h1v1h-1zM587 193h1v1h-1zM587 183h1v1h-1zM587 173h1v1h-1zM587 163h1v1h-1zM587 153h1v1h-1zM597 744h1v1h-1zM597 734h1v1h-1zM597 724h1v1h-1zM597 714h1v1h-1zM597 704h1v1h-1zM597 694h1v1h-1zM597 684h1v1h-1zM597 674h1v1h-1zM597 664h1v1h-1zM597 654h1v1h-1zM597 644h1v1h-1zM597 634h1v1h-1zM597 624h1v1h-1zM597 614h1v1h-1zM597 604h1v1h-1zM597 594h1v1h-1zM597 584h1v1h-1zM597 574h1v1h-1zM597 564h1v1h-1zM597 554h1v1h-1zM597 544h1v1h-1zM597 534h1v1h-1zM597 523h1v1h-1zM597 513h1v1h-1zM597 503h1v1h-1zM597 493h1v1h-1zM597 483h1v1h-1zM597 473h1v1h-1zM597 463h1v1h-1zM597 453h1v1h-1zM597 443h1v1h-1zM597 433h1v1h-1zM597 423h1v1h-1zM597 413h1v1h-1zM597 403h1v1h-1zM597 393h1v1h-1zM597 383h1v1h-1zM597 373h1v1h-1zM597 363h1v1h-1zM597 353h1v1h-1zM597 343h1v1h-1zM597 333h1v1h-1zM597 323h1v1h-1zM597 313h1v1h-1zM597 303h1v1h-1zM597 293h1v1h-1zM597 283h1v1h-1zM597 273h1v1h-1zM597 263h1v1h-1zM597 253h1v1h-1zM597 243h1v1h-1zM597 233h1v1h-1zM597 223h1v1h-1zM597 213h1v1h-1zM597 203h1v1h-1zM597 193h1v1h-1zM597 183h1v1h-1zM597 173h1v1h-1zM597 163h1v1h-1zM597 153h1v1h-1zM607 744h1v1h-1zM607 734h1v1h-1zM607 724h1v1h-1zM607 714h1v1h-1zM607 704h1v1h-1zM607 694h1v1h-1zM607 684h1v1h-1zM607 674h1v1h-1zM607 664h1v1h-1zM607 654h1v1h-1zM607 644h1v1h-1zM607 634h1v1h-1zM607 624h1v1h-1zM607 614h1v1h-1zM607 604h1v1h-1zM607 594h1v1h-1zM607 584h1v1h-1zM607 574h1v1h-1zM607 564h1v1h-1zM607 554h1v1h-1zM607 544h1v1h-1zM607 534h1v1h-1zM607 523h1v1h-1zM607 513h1v1h-1zM607 503h1v1h-1zM607 493h1v1h-1zM607 483h1v1h-1zM607 473h1v1h-1zM607 463h1v1h-1zM607 453h1v1h-1zM607 443h1v1h-1zM607 433h1v1h-1zM607 423h1v1h-1zM607 413h1v1h-1zM607 403h1v1h-1zM607 393h1v1h-1zM607 383h1v1h-1zM607 373h1v1h-1zM607 363h1v1h-1zM607 353h1v1h-1zM607 343h1v1h-1zM607 333h1v1h-1zM607 323h1v1h-1zM607 313h1v1h-1zM607 303h1v1h-1zM607 293h1v1h-1zM607 283h1v1h-1zM607 273h1v1h-1zM607 263h1v1h-1zM607 253h1v1h-1zM607 243h1v1h-1zM607 233h1v1h-1zM607 223h1v1h-1zM607 213h1v1h-1zM607 203h1v1h-1zM607 193h1v1h-1zM607 183h1v1h-1zM607 173h1v1h-1zM607 163h1v1h-1zM607 153h1v1h-1zM617 744h1v1h-1zM617 734h1v1h-1zM617 724h1v1h-1zM617 714h1v1h-1zM617 704h1v1h-1zM617 694h1v1h-1zM617 684h1v1h-1zM617 674h1v1h-1zM617 664h1v1h-1zM617 654h1v1h-1zM617 644h1v1h-1zM617 634h1v1h-1zM617 624h1v1h-1zM617 614h1v1h-1zM617 604h1v1h-1zM617 594h1v1h-1zM617 584h1v1h-1zM617 574h1v1h-1zM617 564h1v1h-1zM617 554h1v1h-1zM617 544h1v1h-1zM617 534h1v1h-1zM617 523h1v1h-1zM617 513h1v1h-1zM617 503h1v1h-1zM617 493h1v1h-1zM617 483h1v1h-1zM617 473h1v1h-1zM617 463h1v1h-1zM617 453h1v1h-1zM617 443h1v1h-1zM617 433h1v1h-1zM617 423h1v1h-1zM617 413h1v1h-1zM617 403h1v1h-1zM617 393h1v1h-1zM617 383h1v1h-1zM617 373h1v1h-1zM617 363h1v1h-1zM617 353h1v1h-1zM617 343h1v1h-1zM617 333h1v1h-1zM617 323h1v1h-1zM617 313h1v1h-1zM617 303h1v1h-1zM617 293h1v1h-1zM617 283h1v1h-1zM617 273h1v1h-1zM617 263h1v1h-1zM617 253h1v1h-1zM617 243h1v1h-1zM617 233h1v1h-1zM617 223h1v1h-1zM617 213h1v1h-1zM617 203h1v1h-1zM617 193h1v1h-1zM617 183h1v1h-1zM617 173h1v1h-1zM617 163h1v1h-1zM617 153h1v1h-1zM627 744h1v1h-1zM627 734h1v1h-1zM627 724h1v1h-1zM627 714h1v1h-1zM627 704h1v1h-1zM627 694h1v1h-1zM627 684h1v1h-1zM627 674h1v1h-1zM627 664h1v1h-1zM627 654h1v1h-1zM627 644h1v1h-1zM627 634h1v1h-1zM627 624h1v1h-1zM627 614h1v1h-1zM627 604h1v1h-1zM627 594h1v1h-1zM627 584h1v1h-1zM627 574h1v1h-1zM627 564h1v1h-1zM627 554h1v1h-1zM627 544h1v1h-1zM627 534h1v1h-1zM627 523h1v1h-1zM627 513h1v1h-1zM627 503h1v1h-1zM627 493h1v1h-1zM627 483h1v1h-1zM627 473h1v1h-1zM627 463h1v1h-1zM627 453h1v1h-1zM627 443h1v1h-1zM627 433h1v1h-1zM627 423h1v1h-1zM627 413h1v1h-1zM627 403h1v1h-1zM627 393h1v1h-1zM627 383h1v1h-1zM627 373h1v1h-1zM627 363h1v1h-1zM627 353h1v1h-1zM627 343h1v1h-1zM627 333h1v1h-1zM627 323h1v1h-1zM627 313h1v1h-1zM627 303h1v1h-1zM627 293h1v1h-1zM627 283h1v1h-1zM627 273h1v1h-1zM627 263h1v1h-1zM627 253h1v1h-1zM627 243h1v1h-1zM627 233h1v1h-1zM627 223h1v1h-1zM627 213h1v1h-1zM627 203h1v1h-1zM627 193h1v1h-1zM627 183h1v1h-1zM627 173h1v1h-1zM627 163h1v1h-1zM627 153h1v1h-1zM637 744h1v1h-1zM637 734h1v1h-1zM637 724h1v1h-1zM637 714h1v1h-1zM637 704h1v1h-1zM637 694h1v1h-1zM637 684h1v1h-1zM637 674h1v1h-1zM637 664h1v1h-1zM637 654h1v1h-1zM637 644h1v1h-1zM637 634h1v1h-1zM637 624h1v1h-1zM637 614h1v1h-1zM637 604h1v1h-1zM637 594h1v1h-1zM637 584h1v1h-1zM637 574h1v1h-1zM637 564h1v1h-1zM637 554h1v1h-1zM637 544h1v1h-1zM637 534h1v1h-1zM637 523h1v1h-1zM637 513h1v1h-1zM637 503h1v1h-1zM637 493h1v1h-1zM637 483h1v1h-1zM637 473h1v1h-1zM637 463h1v1h-1zM637 453h1v1h-1zM637 443h1v1h-1zM637 433h1v1h-1zM637 423h1v1h-1zM637 413h1v1h-1zM637 403h1v1h-1zM637 393h1v1h-1zM637 383h1v1h-1zM637 373h1v1h-1zM637 363h1v1h-1zM637 353h1v1h-1zM637 343h1v1h-1zM637 333h1v1h-1zM637 323h1v1h-1zM637 313h1v1h-1zM637 303h1v1h-1zM637 293h1v1h-1zM637 283h1v1h-1zM637 273h1v1h-1zM637 263h1v1h-1zM637 253h1v1h-1zM637 243h1v1h-1zM637 233h1v1h-1zM637 223h1v1h-1zM637 213h1v1h-1zM637 203h1v1h-1zM637 193h1v1h-1zM637 183h1v1h-1zM637 173h1v1h-1zM637 163h1v1h-1zM637 153h1v1h-1zM647 744h1v1h-1zM647 734h1v1h-1zM647 724h1v1h-1zM647 714h1v1h-1zM647 704h1v1h-1zM647 694h1v1h-1zM647 684h1v1h-1zM647 674h1v1h-1zM647 664h1v1h-1zM647 654h1v1h-1zM647 644h1v1h-1zM647 634h1v1h-1zM647 624h1v1h-1zM647 614h1v1h-1zM647 604h1v1h-1zM647 594h1v1h-1zM647 584h1v1h-1zM647 574h1v1h-1zM647 564h1v1h-1zM647 554h1v1h-1zM647 544h1v1h-1zM647 534h1v1h-1zM647 523h1v1h-1zM647 513h1v1h-1zM647 503h1v1h-1zM647 493h1v1h-1zM647 483h1v1h-1zM647 473h1v1h-1zM647 463h1v1h-1zM647 453h1v1h-1zM647 443h1v1h-1zM647 433h1v1h-1zM647 423h1v1h-1zM647 413h1v1h-1zM647 403h1v1h-1zM647 393h1v1h-1zM647 383h1v1h-1zM647 373h1v1h-1zM647 363h1v1h-1zM647 353h1v1h-1zM647 343h1v1h-1zM647 333h1v1h-1zM647 323h1v1h-1zM647 313h1v1h-1zM647 303h1v1h-1zM647 293h1v1h-1zM647 283h1v1h-1zM647 273h1v1h-1zM647 263h1v1h-1zM647 253h1v1h-1zM647 243h1v1h-1zM647 233h1v1h-1zM647 223h1v1h-1zM647 213h1v1h-1zM647 203h1v1h-1zM647 193h1v1h-1zM647 183h1v1h-1zM647 173h1v1h-1zM647 163h1v1h-1zM647 153h1v1h-1zM657 744h1v1h-1zM657 734h1v1h-1zM657 724h1v1h-1zM657 714h1v1h-1zM657 704h1v1h-1zM657 694h1v1h-1zM657 684h1v1h-1zM657 674h1v1h-1zM657 664h1v1h-1zM657 654h1v1h-1zM657 644h1v1h-1zM657 634h1v1h-1zM657 624h1v1h-1zM657 614h1v1h-1zM657 604h1v1h-1zM657 594h1v1h-1zM657 584h1v1h-1zM657 574h1v1h-1zM657 564h1v1h-1zM657 554h1v1h-1zM657 544h1v1h-1zM657 534h1v1h-1zM657 523h1v1h-1zM657 513h1v1h-1zM657 503h1v1h-1zM657 493h1v1h-1zM657 483h1v1h-1zM657 473h1v1h-1zM657 463h1v1h-1zM657 453h1v1h-1zM657 443h1v1h-1zM657 433h1v1h-1zM657 423h1v1h-1zM657 413h1v1h-1zM657 403h1v1h-1zM657 393h1v1h-1zM657 383h1v1h-1zM657 373h1v1h-1zM657 363h1v1h-1zM657 353h1v1h-1zM657 343h1v1h-1zM657 333h1v1h-1zM657 323h1v1h-1zM657 313h1v1h-1zM657 303h1v1h-1zM657 293h1v1h-1zM657 283h1v1h-1zM657 273h1v1h-1zM657 263h1v1h-1zM657 253h1v1h-1zM657 243h1v1h-1zM657 233h1v1h-1zM657 223h1v1h-1zM657 213h1v1h-1zM657 203h1v1h-1zM657 193h1v1h-1zM657 183h1v1h-1zM657 173h1v1h-1zM657 163h1v1h-1zM657 153h1v1h-1zM667 744h1v1h-1zM667 734h1v1h-1zM667 724h1v1h-1zM667 714h1v1h-1zM667 704h1v1h-1zM667 694h1v1h-1zM667 684h1v1h-1zM667 674h1v1h-1zM667 664h1v1h-1zM667 654h1v1h-1zM667 644h1v1h-1zM667 634h1v1h-1zM667 624h1v1h-1zM667 614h1v1h-1zM667 604h1v1h-1zM667 594h1v1h-1zM667 584h1v1h-1zM667 574h1v1h-1zM667 564h1v1h-1zM667 554h1v1h-1zM667 544h1v1h-1zM667 534h1v1h-1zM667 523h1v1h-1zM667 513h1v1h-1zM667 503h1v1h-1zM667 493h1v1h-1zM667 483h1v1h-1zM667 473h1v1h-1zM667 463h1v1h-1zM667 453h1v1h-1zM667 443h1v1h-1zM667 433h1v1h-1zM667 423h1v1h-1zM667 413h1v1h-1zM667 403h1v1h-1zM667 393h1v1h-1zM667 383h1v1h-1zM667 373h1v1h-1zM667 363h1v1h-1zM667 353h1v1h-1zM667 343h1v1h-1zM667 333h1v1h-1zM667 323h1v1h-1zM667 313h1v1h-1zM667 303h1v1h-1zM667 293h1v1h-1zM667 283h1v1h-1zM667 273h1v1h-1zM667 263h1v1h-1zM667 253h1v1h-1zM667 243h1v1h-1zM667 233h1v1h-1zM667 223h1v1h-1zM667 213h1v1h-1zM667 203h1v1h-1zM667 193h1v1h-1zM667 183h1v1h-1zM667 173h1v1h-1zM667 163h1v1h-1zM667 153h1v1h-1zM677 744h1v1h-1zM677 734h1v1h-1zM677 724h1v1h-1zM677 714h1v1h-1zM677 704h1v1h-1zM677 694h1v1h-1zM677 684h1v1h-1zM677 674h1v1h-1zM677 664h1v1h-1zM677 654h1v1h-1zM677 644h1v1h-1zM677 634h1v1h-1zM677 624h1v1h-1zM677 614h1v1h-1zM677 604h1v1h-1zM677 594h1v1h-1zM677 584h1v1h-1zM677 574h1v1h-1zM677 564h1v1h-1zM677 554h1v1h-1zM677 544h1v1h-1zM677 534h1v1h-1zM677 523h1v1h-1zM677 513h1v1h-1zM677 503h1v1h-1zM677 493h1v1h-1zM677 483h1v1h-1zM677 473h1v1h-1zM677 463h1v1h-1zM677 453h1v1h-1zM677 443h1v1h-1zM677 433h1v1h-1zM677 423h1v1h-1zM677 413h1v1h-1zM677 403h1v1h-1zM677 393h1v1h-1zM677 383h1v1h-1zM677 373h1v1h-1zM677 363h1v1h-1zM677 353h1v1h-1zM677 343h1v1h-1zM677 333h1v1h-1zM677 323h1v1h-1zM677 313h1v1h-1zM677 303h1v1h-1zM677 293h1v1h-1zM677 283h1v1h-1zM677 273h1v1h-1zM677 263h1v1h-1zM677 253h1v1h-1zM677 243h1v1h-1zM677 233h1v1h-1zM677 223h1v1h-1zM677 213h1v1h-1zM677 203h1v1h-1zM677 193h1v1h-1zM677 183h1v1h-1zM677 173h1v1h-1zM677 163h1v1h-1zM677 153h1v1h-1zM687 744h1v1h-1zM687 734h1v1h-1zM687 724h1v1h-1zM687 714h1v1h-1zM687 704h1v1h-1zM687 694h1v1h-1zM687 684h1v1h-1zM687 674h1v1h-1zM687 664h1v1h-1zM687 654h1v1h-1zM687 644h1v1h-1zM687 634h1v1h-1zM687 624h1v1h-1zM687 614h1v1h-1zM687 604h1v1h-1zM687 594h1v1h-1zM687 584h1v1h-1zM687 574h1v1h-1zM687 564h1v1h-1zM687 554h1v1h-1zM687 544h1v1h-1zM687 534h1v1h-1zM687 523h1v1h-1zM687 513h1v1h-1zM687 503h1v1h-1zM687 493h1v1h-1zM687 483h1v1h-1zM687 473h1v1h-1zM687 463h1v1h-1zM687 453h1v1h-1zM687 443h1v1h-1zM687 433h1v1h-1zM687 423h1v1h-1zM687 413h1v1h-1zM687 403h1v1h-1zM687 393h1v1h-1zM687 383h1v1h-1zM687 373h1v1h-1zM687 363h1v1h-1zM687 353h1v1h-1zM687 343h1v1h-1zM687 333h1v1h-1zM687 323h1v1h-1zM687 313h1v1h-1zM687 303h1v1h-1zM687 293h1v1h-1zM687 283h1v1h-1zM687 273h1v1h-1zM687 263h1v1h-1zM687 253h1v1h-1zM687 243h1v1h-1zM687 233h1v1h-1zM687 223h1v1h-1zM687 213h1v1h-1zM687 203h1v1h-1zM687 193h1v1h-1zM687 183h1v1h-1zM687 173h1v1h-1zM687 163h1v1h-1zM687 153h1v1h-1zM697 744h1v1h-1zM697 734h1v1h-1zM697 724h1v1h-1zM697 714h1v1h-1zM697 704h1v1h-1zM697 694h1v1h-1zM697 684h1v1h-1zM697 674h1v1h-1zM697 664h1v1h-1zM697 654h1v1h-1zM697 644h1v1h-1zM697 634h1v1h-1zM697 624h1v1h-1zM697 614h1v1h-1zM697 604h1v1h-1zM697 594h1v1h-1zM697 584h1v1h-1zM697 574h1v1h-1zM697 564h1v1h-1zM697 554h1v1h-1zM697 544h1v1h-1zM697 534h1v1h-1zM697 523h1v1h-1zM697 513h1v1h-1zM697 503h1v1h-1zM697 493h1v1h-1zM697 483h1v1h-1zM697 473h1v1h-1zM697 463h1v1h-1zM697 453h1v1h-1zM697 443h1v1h-1zM697 433h1v1h-1zM697 423h1v1h-1zM697 413h1v1h-1zM697 403h1v1h-1zM697 393h1v1h-1zM697 383h1v1h-1zM697 373h1v1h-1zM697 363h1v1h-1zM697 353h1v1h-1zM697 343h1v1h-1zM697 333h1v1h-1zM697 323h1v1h-1zM697 313h1v1h-1zM697 303h1v1h-1zM697 293h1v1h-1zM697 283h1v1h-1zM697 273h1v1h-1zM697 263h1v1h-1zM697 253h1v1h-1zM697 243h1v1h-1zM697 233h1v1h-1zM697 223h1v1h-1zM697 213h1v1h-1zM697 203h1v1h-1zM697 193h1v1h-1zM697 183h1v1h-1zM697 173h1v1h-1zM697 163h1v1h-1zM697 153h1v1h-1zM707 744h1v1h-1zM707 734h1v1h-1zM707 724h1v1h-1zM707 714h1v1h-1zM707 704h1v1h-1zM707 694h1v1h-1zM707 684h1v1h-1zM707 674h1v1h-1zM707 664h1v1h-1zM707 654h1v1h-1zM707 644h1v1h-1zM707 634h1v1h-1zM707 624h1v1h-1zM707 614h1v1h-1zM707 604h1v1h-1zM707 594h1v1h-1zM707 584h1v1h-1zM707 574h1v1h-1zM707 564h1v1h-1zM707 554h1v1h-1zM707 544h1v1h-1zM707 534h1v1h-1zM707 523h1v1h-1zM707 513h1v1h-1zM707 503h1v1h-1zM707 493h1v1h-1zM707 483h1v1h-1zM707 473h1v1h-1zM707 463h1v1h-1zM707 453h1v1h-1zM707 443h1v1h-1zM707 433h1v1h-1zM707 423h1v1h-1zM707 413h1v1h-1zM707 403h1v1h-1zM707 393h1v1h-1zM707 383h1v1h-1zM707 373h1v1h-1zM707 363h1v1h-1zM707 353h1v1h-1zM707 343h1v1h-1zM707 333h1v1h-1zM707 323h1v1h-1zM707 313h1v1h-1zM707 303h1v1h-1zM707 293h1v1h-1zM707 283h1v1h-1zM707 273h1v1h-1zM707 263h1v1h-1zM707 253h1v1h-1zM707 243h1v1h-1zM707 233h1v1h-1zM707 223h1v1h-1zM707 213h1v1h-1zM707 203h1v1h-1zM707 193h1v1h-1zM707 183h1v1h-1zM707 173h1v1h-1zM707 163h1v1h-1zM707 153h1v1h-1zM717 744h1v1h-1zM717 734h1v1h-1zM717 724h1v1h-1zM717 714h1v1h-1zM717 704h1v1h-1zM717 694h1v1h-1zM717 684h1v1h-1zM717 674h1v1h-1zM717 664h1v1h-1zM717 654h1v1h-1zM717 644h1v1h-1zM717 634h1v1h-1zM717 624h1v1h-1zM717 614h1v1h-1zM717 604h1v1h-1zM717 594h1v1h-1zM717 584h1v1h-1zM717 574h1v1h-1zM717 564h1v1h-1zM717 554h1v1h-1zM717 544h1v1h-1zM717 534h1v1h-1zM717 523h1v1h-1zM717 513h1v1h-1zM717 503h1v1h-1zM717 493h1v1h-1zM717 483h1v1h-1zM717 473h1v1h-1zM717 463h1v1h-1zM717 453h1v1h-1zM717 443h1v1h-1zM717 433h1v1h-1zM717 423h1v1h-1zM717 413h1v1h-1zM717 403h1v1h-1zM717 393h1v1h-1zM717 383h1v1h-1zM717 373h1v1h-1zM717 363h1v1h-1zM717 353h1v1h-1zM717 343h1v1h-1zM717 333h1v1h-1zM717 323h1v1h-1zM717 313h1v1h-1zM717 303h1v1h-1zM717 293h1v1h-1zM717 283h1v1h-1zM717 273h1v1h-1zM717 263h1v1h-1zM717 253h1v1h-1zM717 243h1v1h-1zM717 233h1v1h-1zM717 223h1v1h-1zM717 213h1v1h-1zM717 203h1v1h-1zM717 193h1v1h-1zM717 183h1v1h-1zM717 173h1v1h-1zM717 163h1v1h-1zM717 153h1v1h-1zM727 744h1v1h-1zM727 734h1v1h-1zM727 724h1v1h-1zM727 714h1v1h-1zM727 704h1v1h-1zM727 694h1v1h-1zM727 684h1v1h-1zM727 674h1v1h-1zM727 664h1v1h-1zM727 654h1v1h-1zM727 644h1v1h-1zM727 634h1v1h-1zM727 624h1v1h-1zM727 614h1v1h-1zM727 604h1v1h-1zM727 594h1v1h-1zM727 584h1v1h-1zM727 574h1v1h-1zM727 564h1v1h-1zM727 554h1v1h-1zM727 544h1v1h-1zM727 534h1v1h-1zM727 523h1v1h-1zM727 513h1v1h-1zM727 503h1v1h-1zM727 493h1v1h-1zM727 483h1v1h-1zM727 473h1v1h-1zM727 463h1v1h-1zM727 453h1v1h-1zM727 443h1v1h-1zM727 433h1v1h-1zM727 423h1v1h-1zM727 413h1v1h-1zM727 403h1v1h-1zM727 393h1v1h-1zM727 383h1v1h-1zM727 373h1v1h-1zM727 363h1v1h-1zM727 353h1v1h-1zM727 343h1v1h-1zM727 333h1v1h-1zM727 323h1v1h-1zM727 313h1v1h-1zM727 303h1v1h-1zM727 293h1v1h-1zM727 283h1v1h-1zM727 273h1v1h-1zM727 263h1v1h-1zM727 253h1v1h-1zM727 243h1v1h-1zM727 233h1v1h-1zM727 223h1v1h-1zM727 213h1v1h-1zM727 203h1v1h-1zM727 193h1v1h-1zM727 183h1v1h-1zM727 173h1v1h-1zM727 163h1v1h-1zM727 153h1v1h-1zM737 744h1v1h-1zM737 734h1v1h-1zM737 724h1v1h-1zM737 714h1v1h-1zM737 704h1v1h-1zM737 694h1v1h-1zM737 684h1v1h-1zM737 674h1v1h-1zM737 664h1v1h-1zM737 654h1v1h-1zM737 644h1v1h-1zM737 634h1v1h-1zM737 624h1v1h-1zM737 614h1v1h-1zM737 604h1v1h-1zM737 594h1v1h-1zM737 584h1v1h-1zM737 574h1v1h-1zM737 564h1v1h-1zM737 554h1v1h-1zM737 544h1v1h-1zM737 534h1v1h-1zM737 523h1v1h-1zM737 513h1v1h-1zM737 503h1v1h-1zM737 493h1v1h-1zM737 483h1v1h-1zM737 473h1v1h-1zM737 463h1v1h-1zM737 453h1v1h-1zM737 443h1v1h-1zM737 433h1v1h-1zM737 423h1v1h-1zM737 413h1v1h-1zM737 403h1v1h-1zM737 393h1v1h-1zM737 383h1v1h-1zM737 373h1v1h-1zM737 363h1v1h-1zM737 353h1v1h-1zM737 343h1v1h-1zM737 333h1v1h-1zM737 323h1v1h-1zM737 313h1v1h-1zM737 303h1v1h-1zM737 293h1v1h-1zM737 283h1v1h-1zM737 273h1v1h-1zM737 263h1v1h-1zM737 253h1v1h-1zM737 243h1v1h-1zM737 233h1v1h-1zM737 223h1v1h-1zM737 213h1v1h-1zM737 203h1v1h-1zM737 193h1v1h-1zM737 183h1v1h-1zM737 173h1v1h-1zM737 163h1v1h-1zM737 153h1v1h-1zM747 744h1v1h-1zM747 734h1v1h-1zM747 724h1v1h-1zM747 714h1v1h-1zM747 704h1v1h-1zM747 694h1v1h-1zM747 684h1v1h-1zM747 674h1v1h-1zM747 664h1v1h-1zM747 654h1v1h-1zM747 644h1v1h-1zM747 634h1v1h-1zM747 624h1v1h-1zM747 614h1v1h-1zM747 604h1v1h-1zM747 594h1v1h-1zM747 584h1v1h-1zM747 574h1v1h-1zM747 564h1v1h-1zM747 554h1v1h-1zM747 544h1v1h-1zM747 534h1v1h-1zM747 523h1v1h-1zM747 513h1v1h-1zM747 503h1v1h-1zM747 493h1v1h-1zM747 483h1v1h-1zM747 473h1v1h-1zM747 463h1v1h-1zM747 453h1v1h-1zM747 443h1v1h-1zM747 433h1v1h-1zM747 423h1v1h-1zM747 413h1v1h-1zM747 403h1v1h-1zM747 393h1v1h-1zM747 383h1v1h-1zM747 373h1v1h-1zM747 363h1v1h-1zM747 353h1v1h-1zM747 343h1v1h-1zM747 333h1v1h-1zM747 323h1v1h-1zM747 313h1v1h-1zM747 303h1v1h-1zM747 293h1v1h-1zM747 283h1v1h-1zM747 273h1v1h-1zM747 263h1v1h-1zM747 253h1v1h-1zM747 243h1v1h-1zM747 233h1v1h-1zM747 223h1v1h-1zM747 213h1v1h-1zM747 203h1v1h-1zM747 193h1v1h-1zM747 183h1v1h-1zM747 173h1v1h-1zM747 163h1v1h-1zM747 153h1v1h-1zM757 744h1v1h-1zM757 734h1v1h-1zM757 724h1v1h-1zM757 714h1v1h-1zM757 704h1v1h-1zM757 694h1v1h-1zM757 684h1v1h-1zM757 674h1v1h-1zM757 664h1v1h-1zM757 654h1v1h-1zM757 644h1v1h-1zM757 634h1v1h-1zM757 624h1v1h-1zM757 614h1v1h-1zM757 604h1v1h-1zM757 594h1v1h-1zM757 584h1v1h-1zM757 574h1v1h-1zM757 564h1v1h-1zM757 554h1v1h-1zM757 544h1v1h-1zM757 534h1v1h-1zM757 523h1v1h-1zM757 513h1v1h-1zM757 503h1v1h-1zM757 493h1v1h-1zM757 483h1v1h-1zM757 473h1v1h-1zM757 463h1v1h-1zM757 453h1v1h-1zM757 443h1v1h-1zM757 433h1v1h-1zM757 423h1v1h-1zM757 413h1v1h-1zM757 403h1v1h-1zM757 393h1v1h-1zM757 383h1v1h-1zM757 373h1v1h-1zM757 363h1v1h-1zM757 353h1v1h-1zM757 343h1v1h-1zM757 333h1v1h-1zM757 323h1v1h-1zM757 313h1v1h-1zM757 303h1v1h-1zM757 293h1v1h-1zM757 283h1v1h-1zM757 273h1v1h-1zM757 263h1v1h-1zM757 253h1v1h-1zM757 243h1v1h-1zM757 233h1v1h-1zM757 223h1v1h-1zM757 213h1v1h-1zM757 203h1v1h-1zM757 193h1v1h-1zM757 183h1v1h-1zM757 173h1v1h-1zM757 163h1v1h-1zM757 153h1v1h-1zM767 744h1v1h-1zM767 734h1v1h-1zM767 724h1v1h-1zM767 714h1v1h-1zM767 704h1v1h-1zM767 694h1v1h-1zM767 684h1v1h-1zM767 674h1v1h-1zM767 664h1v1h-1zM767 654h1v1h-1zM767 644h1v1h-1zM767 634h1v1h-1zM767 624h1v1h-1zM767 614h1v1h-1zM767 604h1v1h-1zM767 594h1v1h-1zM767 584h1v1h-1zM767 574h1v1h-1zM767 564h1v1h-1zM767 554h1v1h-1zM767 544h1v1h-1zM767 534h1v1h-1zM767 523h1v1h-1zM767 513h1v1h-1zM767 503h1v1h-1zM767 493h1v1h-1zM767 483h1v1h-1zM767 473h1v1h-1zM767 463h1v1h-1zM767 453h1v1h-1zM767 443h1v1h-1zM767 433h1v1h-1zM767 423h1v1h-1zM767 413h1v1h-1zM767 403h1v1h-1zM767 393h1v1h-1zM767 383h1v1h-1zM767 373h1v1h-1zM767 363h1v1h-1zM767 353h1v1h-1zM767 343h1v1h-1zM767 333h1v1h-1zM767 323h1v1h-1zM767 313h1v1h-1zM767 303h1v1h-1zM767 293h1v1h-1zM767 283h1v1h-1zM767 273h1v1h-1zM767 263h1v1h-1zM767 253h1v1h-1zM767 243h1v1h-1zM767 233h1v1h-1zM767 223h1v1h-1zM767 213h1v1h-1zM767 203h1v1h-1zM767 193h1v1h-1zM767 183h1v1h-1zM767 173h1v1h-1zM767 163h1v1h-1zM767 153h1v1h-1zM777 744h1v1h-1zM777 734h1v1h-1zM777 724h1v1h-1zM777 714h1v1h-1zM777 704h1v1h-1zM777 694h1v1h-1zM777 684h1v1h-1zM777 674h1v1h-1zM777 664h1v1h-1zM777 654h1v1h-1zM777 644h1v1h-1zM777 634h1v1h-1zM777 624h1v1h-1zM777 614h1v1h-1zM777 604h1v1h-1zM777 594h1v1h-1zM777 584h1v1h-1zM777 574h1v1h-1zM777 564h1v1h-1zM777 554h1v1h-1zM777 544h1v1h-1zM777 534h1v1h-1zM777 523h1v1h-1zM777 513h1v1h-1zM777 503h1v1h-1zM777 493h1v1h-1zM777 483h1v1h-1zM777 473h1v1h-1zM777 463h1v1h-1zM777 453h1v1h-1zM777 443h1v1h-1zM777 433h1v1h-1zM777 423h1v1h-1zM777 413h1v1h-1zM777 403h1v1h-1zM777 393h1v1h-1zM777 383h1v1h-1zM777 373h1v1h-1zM777 363h1v1h-1zM777 353h1v1h-1zM777 343h1v1h-1zM777 333h1v1h-1zM777 323h1v1h-1zM777 313h1v1h-1zM777 303h1v1h-1zM777 293h1v1h-1zM777 283h1v1h-1zM777 273h1v1h-1zM777 263h1v1h-1zM777 253h1v1h-1zM777 243h1v1h-1zM777 233h1v1h-1zM777 223h1v1h-1zM777 213h1v1h-1zM777 203h1v1h-1zM777 193h1v1h-1zM777 183h1v1h-1zM777 173h1v1h-1zM777 163h1v1h-1zM777 153h1v1h-1zM787 744h1v1h-1zM787 734h1v1h-1zM787 724h1v1h-1zM787 714h1v1h-1zM787 704h1v1h-1zM787 694h1v1h-1zM787 684h1v1h-1zM787 674h1v1h-1zM787 664h1v1h-1zM787 654h1v1h-1zM787 644h1v1h-1zM787 634h1v1h-1zM787 624h1v1h-1zM787 614h1v1h-1zM787 604h1v1h-1zM787 594h1v1h-1zM787 584h1v1h-1zM787 574h1v1h-1zM787 564h1v1h-1zM787 554h1v1h-1zM787 544h1v1h-1zM787 534h1v1h-1zM787 523h1v1h-1zM787 513h1v1h-1zM787 503h1v1h-1zM787 493h1v1h-1zM787 483h1v1h-1zM787 473h1v1h-1zM787 463h1v1h-1zM787 453h1v1h-1zM787 443h1v1h-1zM787 433h1v1h-1zM787 423h1v1h-1zM787 413h1v1h-1zM787 403h1v1h-1zM787 393h1v1h-1zM787 383h1v1h-1zM787 373h1v1h-1zM787 363h1v1h-1zM787 353h1v1h-1zM787 343h1v1h-1zM787 333h1v1h-1zM787 323h1v1h-1zM787 313h1v1h-1zM787 303h1v1h-1zM787 293h1v1h-1zM787 283h1v1h-1zM787 273h1v1h-1zM787 263h1v1h-1zM787 253h1v1h-1zM787 243h1v1h-1zM787 233h1v1h-1zM787 223h1v1h-1zM787 213h1v1h-1zM787 203h1v1h-1zM787 193h1v1h-1zM787 183h1v1h-1zM787 173h1v1h-1zM787 163h1v1h-1zM787 153h1v1h-1zM797 744h1v1h-1zM797 734h1v1h-1zM797 724h1v1h-1zM797 714h1v1h-1zM797 704h1v1h-1zM797 694h1v1h-1zM797 684h1v1h-1zM797 674h1v1h-1zM797 664h1v1h-1zM797 654h1v1h-1zM797 644h1v1h-1zM797 634h1v1h-1zM797 624h1v1h-1zM797 614h1v1h-1zM797 604h1v1h-1zM797 594h1v1h-1zM797 584h1v1h-1zM797 574h1v1h-1zM797 564h1v1h-1zM797 554h1v1h-1zM797 544h1v1h-1zM797 534h1v1h-1zM797 523h1v1h-1zM797 513h1v1h-1zM797 503h1v1h-1zM797 493h1v1h-1zM797 483h1v1h-1zM797 473h1v1h-1zM797 463h1v1h-1zM797 453h1v1h-1zM797 443h1v1h-1zM797 433h1v1h-1zM797 423h1v1h-1zM797 413h1v1h-1zM797 403h1v1h-1zM797 393h1v1h-1zM797 383h1v1h-1zM797 373h1v1h-1zM797 363h1v1h-1zM797 353h1v1h-1zM797 343h1v1h-1zM797 333h1v1h-1zM797 323h1v1h-1zM797 313h1v1h-1zM797 303h1v1h-1zM797 293h1v1h-1zM797 283h1v1h-1zM797 273h1v1h-1zM797 263h1v1h-1zM797 253h1v1h-1zM797 243h1v1h-1zM797 233h1v1h-1zM797 223h1v1h-1zM797 213h1v1h-1zM797 203h1v1h-1zM797 193h1v1h-1zM797 183h1v1h-1zM797 173h1v1h-1zM797 163h1v1h-1zM797 153h1v1h-1zM807 744h1v1h-1zM807 734h1v1h-1zM807 724h1v1h-1zM807 714h1v1h-1zM807 704h1v1h-1zM807 694h1v1h-1zM807 684h1v1h-1zM807 674h1v1h-1zM807 664h1v1h-1zM807 654h1v1h-1zM807 644h1v1h-1zM807 634h1v1h-1zM807 624h1v1h-1zM807 614h1v1h-1zM807 604h1v1h-1zM807 594h1v1h-1zM807 584h1v1h-1zM807 574h1v1h-1zM807 564h1v1h-1zM807 554h1v1h-1zM807 544h1v1h-1zM807 534h1v1h-1zM807 523h1v1h-1zM807 513h1v1h-1zM807 503h1v1h-1zM807 493h1v1h-1zM807 483h1v1h-1zM807 473h1v1h-1zM807 463h1v1h-1zM807 453h1v1h-1zM807 443h1v1h-1zM807 433h1v1h-1zM807 423h1v1h-1zM807 413h1v1h-1zM807 403h1v1h-1zM807 393h1v1h-1zM807 383h1v1h-1zM807 373h1v1h-1zM807 363h1v1h-1zM807 353h1v1h-1zM807 343h1v1h-1zM807 333h1v1h-1zM807 323h1v1h-1zM807 313h1v1h-1zM807 303h1v1h-1zM807 293h1v1h-1zM807 283h1v1h-1zM807 273h1v1h-1zM807 263h1v1h-1zM807 253h1v1h-1zM807 243h1v1h-1zM807 233h1v1h-1zM807 223h1v1h-1zM807 213h1v1h-1zM807 203h1v1h-1zM807 193h1v1h-1zM807 183h1v1h-1zM807 173h1v1h-1zM807 163h1v1h-1zM807 153h1v1h-1zM817 744h1v1h-1zM817 734h1v1h-1zM817 724h1v1h-1zM817 714h1v1h-1zM817 704h1v1h-1zM817 694h1v1h-1zM817 684h1v1h-1zM817 674h1v1h-1zM817 664h1v1h-1zM817 654h1v1h-1zM817 644h1v1h-1zM817 634h1v1h-1zM817 624h1v1h-1zM817 614h1v1h-1zM817 604h1v1h-1zM817 594h1v1h-1zM817 584h1v1h-1zM817 574h1v1h-1zM817 564h1v1h-1zM817 554h1v1h-1zM817 544h1v1h-1zM817 534h1v1h-1zM817 523h1v1h-1zM817 513h1v1h-1zM817 503h1v1h-1zM817 493h1v1h-1zM817 483h1v1h-1zM817 473h1v1h-1zM817 463h1v1h-1zM817 453h1v1h-1zM817 443h1v1h-1zM817 433h1v1h-1zM817 423h1v1h-1zM817 413h1v1h-1zM817 403h1v1h-1zM817 393h1v1h-1zM817 383h1v1h-1zM817 373h1v1h-1zM817 363h1v1h-1zM817 353h1v1h-1zM817 343h1v1h-1zM817 333h1v1h-1zM817 323h1v1h-1zM817 313h1v1h-1zM817 303h1v1h-1zM817 293h1v1h-1zM817 283h1v1h-1zM817 273h1v1h-1zM817 263h1v1h-1zM817 253h1v1h-1zM817 243h1v1h-1zM817 233h1v1h-1zM817 223h1v1h-1zM817 213h1v1h-1zM817 203h1v1h-1zM817 193h1v1h-1zM817 183h1v1h-1zM817 173h1v1h-1zM817 163h1v1h-1zM817 153h1v1h-1zM827 744h1v1h-1zM827 734h1v1h-1zM827 724h1v1h-1zM827 714h1v1h-1zM827 704h1v1h-1zM827 694h1v1h-1zM827 684h1v1h-1zM827 674h1v1h-1zM827 664h1v1h-1zM827 654h1v1h-1zM827 644h1v1h-1zM827 634h1v1h-1zM827 624h1v1h-1zM827 614h1v1h-1zM827 604h1v1h-1zM827 594h1v1h-1zM827 584h1v1h-1zM827 574h1v1h-1zM827 564h1v1h-1zM827 554h1v1h-1zM827 544h1v1h-1zM827 534h1v1h-1zM827 523h1v1h-1zM827 513h1v1h-1zM827 503h1v1h-1zM827 493h1v1h-1zM827 483h1v1h-1zM827 473h1v1h-1zM827 463h1v1h-1zM827 453h1v1h-1zM827 443h1v1h-1zM827 433h1v1h-1zM827 423h1v1h-1zM827 413h1v1h-1zM827 403h1v1h-1zM827 393h1v1h-1zM827 383h1v1h-1zM827 373h1v1h-1zM827 363h1v1h-1zM827 353h1v1h-1zM827 343h1v1h-1zM827 333h1v1h-1zM827 323h1v1h-1zM827 313h1v1h-1zM827 303h1v1h-1zM827 293h1v1h-1zM827 283h1v1h-1zM827 273h1v1h-1zM827 263h1v1h-1zM827 253h1v1h-1zM827 243h1v1h-1zM827 233h1v1h-1zM827 223h1v1h-1zM827 213h1v1h-1zM827 203h1v1h-1zM827 193h1v1h-1zM827 183h1v1h-1zM827 173h1v1h-1zM827 163h1v1h-1zM827 153h1v1h-1zM837 744h1v1h-1zM837 734h1v1h-1zM837 724h1v1h-1zM837 714h1v1h-1zM837 704h1v1h-1zM837 694h1v1h-1zM837 684h1v1h-1zM837 674h1v1h-1zM837 664h1v1h-1zM837 654h1v1h-1zM837 644h1v1h-1zM837 634h1v1h-1zM837 624h1v1h-1zM837 614h1v1h-1zM837 604h1v1h-1zM837 594h1v1h-1zM837 584h1v1h-1zM837 574h1v1h-1zM837 564h1v1h-1zM837 554h1v1h-1zM837 544h1v1h-1zM837 534h1v1h-1zM837 523h1v1h-1zM837 513h1v1h-1zM837 503h1v1h-1zM837 493h1v1h-1zM837 483h1v1h-1zM837 473h1v1h-1zM837 463h1v1h-1zM837 453h1v1h-1zM837 443h1v1h-1zM837 433h1v1h-1zM837 423h1v1h-1zM837 413h1v1h-1zM837 403h1v1h-1zM837 393h1v1h-1zM837 383h1v1h-1zM837 373h1v1h-1zM837 363h1v1h-1zM837 353h1v1h-1zM837 343h1v1h-1zM837 333h1v1h-1zM837 323h1v1h-1zM837 313h1v1h-1zM837 303h1v1h-1zM837 293h1v1h-1zM837 283h1v1h-1zM837 273h1v1h-1zM837 263h1v1h-1zM837 253h1v1h-1zM837 243h1v1h-1zM837 233h1v1h-1zM837 223h1v1h-1zM837 213h1v1h-1zM837 203h1v1h-1zM837 193h1v1h-1zM837 183h1v1h-1zM837 173h1v1h-1zM837 163h1v1h-1zM837 153h1v1h-1zM847 744h1v1h-1zM847 734h1v1h-1zM847 724h1v1h-1zM847 714h1v1h-1zM847 704h1v1h-1zM847 694h1v1h-1zM847 684h1v1h-1zM847 674h1v1h-1zM847 664h1v1h-1zM847 654h1v1h-1zM847 644h1v1h-1zM847 634h1v1h-1zM847 624h1v1h-1zM847 614h1v1h-1zM847 604h1v1h-1zM847 594h1v1h-1zM847 584h1v1h-1zM847 574h1v1h-1zM847 564h1v1h-1zM847 554h1v1h-1zM847 544h1v1h-1zM847 534h1v1h-1zM847 523h1v1h-1zM847 513h1v1h-1zM847 503h1v1h-1zM847 493h1v1h-1zM847 483h1v1h-1zM847 473h1v1h-1zM847 463h1v1h-1zM847 453h1v1h-1zM847 443h1v1h-1zM847 433h1v1h-1zM847 423h1v1h-1zM847 413h1v1h-1zM847 403h1v1h-1zM847 393h1v1h-1zM847 383h1v1h-1zM847 373h1v1h-1zM847 363h1v1h-1zM847 353h1v1h-1zM847 343h1v1h-1zM847 333h1v1h-1zM847 323h1v1h-1zM847 313h1v1h-1zM847 303h1v1h-1zM847 293h1v1h-1zM847 283h1v1h-1zM847 273h1v1h-1zM847 263h1v1h-1zM847 253h1v1h-1zM847 243h1v1h-1zM847 233h1v1h-1zM847 223h1v1h-1zM847 213h1v1h-1zM847 203h1v1h-1zM847 193h1v1h-1zM847 183h1v1h-1zM847 173h1v1h-1zM847 163h1v1h-1zM847 153h1v1h-1zM857 744h1v1h-1zM857 734h1v1h-1zM857 724h1v1h-1zM857 714h1v1h-1zM857 704h1v1h-1zM857 694h1v1h-1zM857 684h1v1h-1zM857 674h1v1h-1zM857 664h1v1h-1zM857 654h1v1h-1zM857 644h1v1h-1zM857 634h1v1h-1zM857 624h1v1h-1zM857 614h1v1h-1zM857 604h1v1h-1zM857 594h1v1h-1zM857 584h1v1h-1zM857 574h1v1h-1zM857 564h1v1h-1zM857 554h1v1h-1zM857 544h1v1h-1zM857 534h1v1h-1zM857 523h1v1h-1zM857 513h1v1h-1zM857 503h1v1h-1zM857 493h1v1h-1zM857 483h1v1h-1zM857 473h1v1h-1zM857 463h1v1h-1zM857 453h1v1h-1zM857 443h1v1h-1zM857 433h1v1h-1zM857 423h1v1h-1zM857 413h1v1h-1zM857 403h1v1h-1zM857 393h1v1h-1zM857 383h1v1h-1zM857 373h1v1h-1zM857 363h1v1h-1zM857 353h1v1h-1zM857 343h1v1h-1zM857 333h1v1h-1zM857 323h1v1h-1zM857 313h1v1h-1zM857 303h1v1h-1zM857 293h1v1h-1zM857 283h1v1h-1zM857 273h1v1h-1zM857 263h1v1h-1zM857 253h1v1h-1zM857 243h1v1h-1zM857 233h1v1h-1zM857 223h1v1h-1zM857 213h1v1h-1zM857 203h1v1h-1zM857 193h1v1h-1zM857 183h1v1h-1zM857 173h1v1h-1zM857 163h1v1h-1zM857 153h1v1h-1zM867 744h1v1h-1zM867 734h1v1h-1zM867 724h1v1h-1zM867 714h1v1h-1zM867 704h1v1h-1zM867 694h1v1h-1zM867 684h1v1h-1zM867 674h1v1h-1zM867 664h1v1h-1zM867 654h1v1h-1zM867 644h1v1h-1zM867 634h1v1h-1zM867 624h1v1h-1zM867 614h1v1h-1zM867 604h1v1h-1zM867 594h1v1h-1zM867 584h1v1h-1zM867 574h1v1h-1zM867 564h1v1h-1zM867 554h1v1h-1zM867 544h1v1h-1zM867 534h1v1h-1zM867 523h1v1h-1zM867 513h1v1h-1zM867 503h1v1h-1zM867 493h1v1h-1zM867 483h1v1h-1zM867 473h1v1h-1zM867 463h1v1h-1zM867 453h1v1h-1zM867 443h1v1h-1zM867 433h1v1h-1zM867 423h1v1h-1zM867 413h1v1h-1zM867 403h1v1h-1zM867 393h1v1h-1zM867 383h1v1h-1zM867 373h1v1h-1zM867 363h1v1h-1zM867 353h1v1h-1zM867 343h1v1h-1zM867 333h1v1h-1zM867 323h1v1h-1zM867 313h1v1h-1zM867 303h1v1h-1zM867 293h1v1h-1zM867 283h1v1h-1zM867 273h1v1h-1zM867 263h1v1h-1zM867 253h1v1h-1zM867 243h1v1h-1zM867 233h1v1h-1zM867 223h1v1h-1zM867 213h1v1h-1zM867 203h1v1h-1zM867 193h1v1h-1zM867 183h1v1h-1zM867 173h1v1h-1zM867 163h1v1h-1zM867 153h1v1h-1zM877 744h1v1h-1zM877 734h1v1h-1zM877 724h1v1h-1zM877 714h1v1h-1zM877 704h1v1h-1zM877 694h1v1h-1zM877 684h1v1h-1zM877 674h1v1h-1zM877 664h1v1h-1zM877 654h1v1h-1zM877 644h1v1h-1zM877 634h1v1h-1zM877 624h1v1h-1zM877 614h1v1h-1zM877 604h1v1h-1zM877 594h1v1h-1zM877 584h1v1h-1zM877 574h1v1h-1zM877 564h1v1h-1zM877 554h1v1h-1zM877 544h1v1h-1zM877 534h1v1h-1zM877 523h1v1h-1zM877 513h1v1h-1zM877 503h1v1h-1zM877 493h1v1h-1zM877 483h1v1h-1zM877 473h1v1h-1zM877 463h1v1h-1zM877 453h1v1h-1zM877 443h1v1h-1zM877 433h1v1h-1zM877 423h1v1h-1zM877 413h1v1h-1zM877 403h1v1h-1zM877 393h1v1h-1zM877 383h1v1h-1zM877 373h1v1h-1zM877 363h1v1h-1zM877 353h1v1h-1zM877 343h1v1h-1zM877 333h1v1h-1zM877 323h1v1h-1zM877 313h1v1h-1zM877 303h1v1h-1zM877 293h1v1h-1zM877 283h1v1h-1zM877 273h1v1h-1zM877 263h1v1h-1zM877 253h1v1h-1zM877 243h1v1h-1zM877 233h1v1h-1zM877 223h1v1h-1zM877 213h1v1h-1zM877 203h1v1h-1zM877 193h1v1h-1zM877 183h1v1h-1zM877 173h1v1h-1zM877 163h1v1h-1zM877 153h1v1h-1zM887 744h1v1h-1zM887 734h1v1h-1zM887 724h1v1h-1zM887 714h1v1h-1zM887 704h1v1h-1zM887 694h1v1h-1zM887 684h1v1h-1zM887 674h1v1h-1zM887 664h1v1h-1zM887 654h1v1h-1zM887 644h1v1h-1zM887 634h1v1h-1zM887 624h1v1h-1zM887 614h1v1h-1zM887 604h1v1h-1zM887 594h1v1h-1zM887 584h1v1h-1zM887 574h1v1h-1zM887 564h1v1h-1zM887 554h1v1h-1zM887 544h1v1h-1zM887 534h1v1h-1zM887 523h1v1h-1zM887 513h1v1h-1zM887 503h1v1h-1zM887 493h1v1h-1zM887 483h1v1h-1zM887 473h1v1h-1zM887 463h1v1h-1zM887 453h1v1h-1zM887 443h1v1h-1zM887 433h1v1h-1zM887 423h1v1h-1zM887 413h1v1h-1zM887 403h1v1h-1zM887 393h1v1h-1zM887 383h1v1h-1zM887 373h1v1h-1zM887 363h1v1h-1zM887 353h1v1h-1zM887 343h1v1h-1zM887 333h1v1h-1zM887 323h1v1h-1zM887 313h1v1h-1zM887 303h1v1h-1zM887 293h1v1h-1zM887 283h1v1h-1zM887 273h1v1h-1zM887 263h1v1h-1zM887 253h1v1h-1zM887 243h1v1h-1zM887 233h1v1h-1zM887 223h1v1h-1zM887 213h1v1h-1zM887 203h1v1h-1zM887 193h1v1h-1zM887 183h1v1h-1zM887 173h1v1h-1zM887 163h1v1h-1zM887 153h1v1h-1zM897 744h1v1h-1zM897 734h1v1h-1zM897 724h1v1h-1zM897 714h1v1h-1zM897 704h1v1h-1zM897 694h1v1h-1zM897 684h1v1h-1zM897 674h1v1h-1zM897 664h1v1h-1zM897 654h1v1h-1zM897 644h1v1h-1zM897 634h1v1h-1zM897 624h1v1h-1zM897 614h1v1h-1zM897 604h1v1h-1zM897 594h1v1h-1zM897 584h1v1h-1zM897 574h1v1h-1zM897 564h1v1h-1zM897 554h1v1h-1zM897 544h1v1h-1zM897 534h1v1h-1zM897 523h1v1h-1zM897 513h1v1h-1zM897 503h1v1h-1zM897 493h1v1h-1zM897 483h1v1h-1zM897 473h1v1h-1zM897 463h1v1h-1zM897 453h1v1h-1zM897 443h1v1h-1zM897 433h1v1h-1zM897 423h1v1h-1zM897 413h1v1h-1zM897 403h1v1h-1zM897 393h1v1h-1zM897 383h1v1h-1zM897 373h1v1h-1zM897 363h1v1h-1zM897 353h1v1h-1zM897 343h1v1h-1zM897 333h1v1h-1zM897 323h1v1h-1zM897 313h1v1h-1zM897 303h1v1h-1zM897 293h1v1h-1zM897 283h1v1h-1zM897 273h1v1h-1zM897 263h1v1h-1zM897 253h1v1h-1zM897 243h1v1h-1zM897 233h1v1h-1zM897 223h1v1h-1zM897 213h1v1h-1zM897 203h1v1h-1zM897 193h1v1h-1zM897 183h1v1h-1zM897 173h1v1h-1zM897 163h1v1h-1zM897 153h1v1h-1zM907 744h1v1h-1zM907 734h1v1h-1zM907 724h1v1h-1zM907 714h1v1h-1zM907 704h1v1h-1zM907 694h1v1h-1zM907 684h1v1h-1zM907 674h1v1h-1zM907 664h1v1h-1zM907 654h1v1h-1zM907 644h1v1h-1zM907 634h1v1h-1zM907 624h1v1h-1zM907 614h1v1h-1zM907 604h1v1h-1zM907 594h1v1h-1zM907 584h1v1h-1zM907 574h1v1h-1zM907 564h1v1h-1zM907 554h1v1h-1zM907 544h1v1h-1zM907 534h1v1h-1zM907 523h1v1h-1zM907 513h1v1h-1zM907 503h1v1h-1zM907 493h1v1h-1zM907 483h1v1h-1zM907 473h1v1h-1zM907 463h1v1h-1zM907 453h1v1h-1zM907 443h1v1h-1zM907 433h1v1h-1zM907 423h1v1h-1zM907 413h1v1h-1zM907 403h1v1h-1zM907 393h1v1h-1zM907 383h1v1h-1zM907 373h1v1h-1zM907 363h1v1h-1zM907 353h1v1h-1zM907 343h1v1h-1zM907 333h1v1h-1zM907 323h1v1h-1zM907 313h1v1h-1zM907 303h1v1h-1zM907 293h1v1h-1zM907 283h1v1h-1zM907 273h1v1h-1zM907 263h1v1h-1zM907 253h1v1h-1zM907 243h1v1h-1zM907 233h1v1h-1zM907 223h1v1h-1zM907 213h1v1h-1zM907 203h1v1h-1zM907 193h1v1h-1zM907 183h1v1h-1zM907 173h1v1h-1zM907 163h1v1h-1zM907 153h1v1h-1zM917 744h1v1h-1zM917 734h1v1h-1zM917 724h1v1h-1zM917 714h1v1h-1zM917 704h1v1h-1zM917 694h1v1h-1zM917 684h1v1h-1zM917 674h1v1h-1zM917 664h1v1h-1zM917 654h1v1h-1zM917 644h1v1h-1zM917 634h1v1h-1zM917 624h1v1h-1zM917 614h1v1h-1zM917 604h1v1h-1zM917 594h1v1h-1zM917 584h1v1h-1zM917 574h1v1h-1zM917 564h1v1h-1zM917 554h1v1h-1zM917 544h1v1h-1zM917 534h1v1h-1zM917 523h1v1h-1zM917 513h1v1h-1zM917 503h1v1h-1zM917 493h1v1h-1zM917 483h1v1h-1zM917 473h1v1h-1zM917 463h1v1h-1zM917 453h1v1h-1zM917 443h1v1h-1zM917 433h1v1h-1zM917 423h1v1h-1zM917 413h1v1h-1zM917 403h1v1h-1zM917 393h1v1h-1zM917 383h1v1h-1zM917 373h1v1h-1zM917 363h1v1h-1zM917 353h1v1h-1zM917 343h1v1h-1zM917 333h1v1h-1zM917 323h1v1h-1zM917 313h1v1h-1zM917 303h1v1h-1zM917 293h1v1h-1zM917 283h1v1h-1zM917 273h1v1h-1zM917 263h1v1h-1zM917 253h1v1h-1zM917 243h1v1h-1zM917 233h1v1h-1zM917 223h1v1h-1zM917 213h1v1h-1zM917 203h1v1h-1zM917 193h1v1h-1zM917 183h1v1h-1zM917 173h1v1h-1zM917 163h1v1h-1zM917 153h1v1h-1zM927 744h1v1h-1zM927 734h1v1h-1zM927 724h1v1h-1zM927 714h1v1h-1zM927 704h1v1h-1zM927 694h1v1h-1zM927 684h1v1h-1zM927 674h1v1h-1zM927 664h1v1h-1zM927 654h1v1h-1zM927 644h1v1h-1zM927 634h1v1h-1zM927 624h1v1h-1zM927 614h1v1h-1zM927 604h1v1h-1zM927 594h1v1h-1zM927 584h1v1h-1zM927 574h1v1h-1zM927 564h1v1h-1zM927 554h1v1h-1zM927 544h1v1h-1zM927 534h1v1h-1zM927 523h1v1h-1zM927 513h1v1h-1zM927 503h1v1h-1zM927 493h1v1h-1zM927 483h1v1h-1zM927 473h1v1h-1zM927 463h1v1h-1zM927 453h1v1h-1zM927 443h1v1h-1zM927 433h1v1h-1zM927 423h1v1h-1zM927 413h1v1h-1zM927 403h1v1h-1zM927 393h1v1h-1zM927 383h1v1h-1zM927 373h1v1h-1zM927 363h1v1h-1zM927 353h1v1h-1zM927 343h1v1h-1zM927 333h1v1h-1zM927 323h1v1h-1zM927 313h1v1h-1zM927 303h1v1h-1zM927 293h1v1h-1zM927 283h1v1h-1zM927 273h1v1h-1zM927 263h1v1h-1zM927 253h1v1h-1zM927 243h1v1h-1zM927 233h1v1h-1zM927 223h1v1h-1zM927 213h1v1h-1zM927 203h1v1h-1zM927 193h1v1h-1zM927 183h1v1h-1zM927 173h1v1h-1zM927 163h1v1h-1zM927 153h1v1h-1zM937 744h1v1h-1zM937 734h1v1h-1zM937 724h1v1h-1zM937 714h1v1h-1zM937 704h1v1h-1zM937 694h1v1h-1zM937 684h1v1h-1zM937 674h1v1h-1zM937 664h1v1h-1zM937 654h1v1h-1zM937 644h1v1h-1zM937 634h1v1h-1zM937 624h1v1h-1zM937 614h1v1h-1zM937 604h1v1h-1zM937 594h1v1h-1zM937 584h1v1h-1zM937 574h1v1h-1zM937 564h1v1h-1zM937 554h1v1h-1zM937 544h1v1h-1zM937 534h1v1h-1zM937 523h1v1h-1zM937 513h1v1h-1zM937 503h1v1h-1zM937 493h1v1h-1zM937 483h1v1h-1zM937 473h1v1h-1zM937 463h1v1h-1zM937 453h1v1h-1zM937 443h1v1h-1zM937 433h1v1h-1zM937 423h1v1h-1zM937 413h1v1h-1zM937 403h1v1h-1zM937 393h1v1h-1zM937 383h1v1h-1zM937 373h1v1h-1zM937 363h1v1h-1zM937 353h1v1h-1zM937 343h1v1h-1zM937 333h1v1h-1zM937 323h1v1h-1zM937 313h1v1h-1zM937 303h1v1h-1zM937 293h1v1h-1zM937 283h1v1h-1zM937 273h1v1h-1zM937 263h1v1h-1zM937 253h1v1h-1zM937 243h1v1h-1zM937 233h1v1h-1zM937 223h1v1h-1zM937 213h1v1h-1zM937 203h1v1h-1zM937 193h1v1h-1zM937 183h1v1h-1zM937 173h1v1h-1zM937 163h1v1h-1zM937 153h1v1h-1zM947 744h1v1h-1zM947 734h1v1h-1zM947 724h1v1h-1zM947 714h1v1h-1zM947 704h1v1h-1zM947 694h1v1h-1zM947 684h1v1h-1zM947 674h1v1h-1zM947 664h1v1h-1zM947 654h1v1h-1zM947 644h1v1h-1zM947 634h1v1h-1zM947 624h1v1h-1zM947 614h1v1h-1zM947 604h1v1h-1zM947 594h1v1h-1zM947 584h1v1h-1zM947 574h1v1h-1zM947 564h1v1h-1zM947 554h1v1h-1zM947 544h1v1h-1zM947 534h1v1h-1zM947 523h1v1h-1zM947 513h1v1h-1zM947 503h1v1h-1zM947 493h1v1h-1zM947 483h1v1h-1zM947 473h1v1h-1zM947 463h1v1h-1zM947 453h1v1h-1zM947 443h1v1h-1zM947 433h1v1h-1zM947 423h1v1h-1zM947 413h1v1h-1zM947 403h1v1h-1zM947 393h1v1h-1zM947 383h1v1h-1zM947 373h1v1h-1zM947 363h1v1h-1zM947 353h1v1h-1zM947 343h1v1h-1zM947 333h1v1h-1zM947 323h1v1h-1zM947 313h1v1h-1zM947 303h1v1h-1zM947 293h1v1h-1zM947 283h1v1h-1zM947 273h1v1h-1zM947 263h1v1h-1zM947 253h1v1h-1zM947 243h1v1h-1zM947 233h1v1h-1zM947 223h1v1h-1zM947 213h1v1h-1zM947 203h1v1h-1zM947 193h1v1h-1zM947 183h1v1h-1zM947 173h1v1h-1zM947 163h1v1h-1zM947 153h1v1h-1zM957 744h1v1h-1zM957 734h1v1h-1zM957 724h1v1h-1zM957 714h1v1h-1zM957 704h1v1h-1zM957 694h1v1h-1zM957 684h1v1h-1zM957 674h1v1h-1zM957 664h1v1h-1zM957 654h1v1h-1zM957 644h1v1h-1zM957 634h1v1h-1zM957 624h1v1h-1zM957 614h1v1h-1zM957 604h1v1h-1zM957 594h1v1h-1zM957 584h1v1h-1zM957 574h1v1h-1zM957 564h1v1h-1zM957 554h1v1h-1zM957 544h1v1h-1zM957 534h1v1h-1zM957 523h1v1h-1zM957 513h1v1h-1zM957 503h1v1h-1zM957 493h1v1h-1zM957 483h1v1h-1zM957 473h1v1h-1zM957 463h1v1h-1zM957 453h1v1h-1zM957 443h1v1h-1zM957 433h1v1h-1zM957 423h1v1h-1zM957 413h1v1h-1zM957 403h1v1h-1zM957 393h1v1h-1zM957 383h1v1h-1zM957 373h1v1h-1zM957 363h1v1h-1zM957 353h1v1h-1zM957 343h1v1h-1zM957 333h1v1h-1zM957 323h1v1h-1zM957 313h1v1h-1zM957 303h1v1h-1zM957 293h1v1h-1zM957 283h1v1h-1zM957 273h1v1h-1zM957 263h1v1h-1zM957 253h1v1h-1zM957 243h1v1h-1zM957 233h1v1h-1zM957 223h1v1h-1zM957 213h1v1h-1zM957 203h1v1h-1zM957 193h1v1h-1zM957 183h1v1h-1zM957 173h1v1h-1zM957 163h1v1h-1zM957 153h1v1h-1zM967 744h1v1h-1zM967 734h1v1h-1zM967 724h1v1h-1zM967 714h1v1h-1zM967 704h1v1h-1zM967 694h1v1h-1zM967 684h1v1h-1zM967 674h1v1h-1zM967 664h1v1h-1zM967 654h1v1h-1zM967 644h1v1h-1zM967 634h1v1h-1zM967 624h1v1h-1zM967 614h1v1h-1zM967 604h1v1h-1zM967 594h1v1h-1zM967 584h1v1h-1zM967 574h1v1h-1zM967 564h1v1h-1zM967 554h1v1h-1zM967 544h1v1h-1zM967 534h1v1h-1zM967 523h1v1h-1zM967 513h1v1h-1zM967 503h1v1h-1zM967 493h1v1h-1zM967 483h1v1h-1zM967 473h1v1h-1zM967 463h1v1h-1zM967 453h1v1h-1zM967 443h1v1h-1zM967 433h1v1h-1zM967 423h1v1h-1zM967 413h1v1h-1zM967 403h1v1h-1zM967 393h1v1h-1zM967 383h1v1h-1zM967 373h1v1h-1zM967 363h1v1h-1zM967 353h1v1h-1zM967 343h1v1h-1zM967 333h1v1h-1zM967 323h1v1h-1zM967 313h1v1h-1zM967 303h1v1h-1zM967 293h1v1h-1zM967 283h1v1h-1zM967 273h1v1h-1zM967 263h1v1h-1zM967 253h1v1h-1zM967 243h1v1h-1zM967 233h1v1h-1zM967 223h1v1h-1zM967 213h1v1h-1zM967 203h1v1h-1zM967 193h1v1h-1zM967 183h1v1h-1zM967 173h1v1h-1zM967 163h1v1h-1zM967 153h1v1h-1zM977 744h1v1h-1zM977 734h1v1h-1zM977 724h1v1h-1zM977 714h1v1h-1zM977 704h1v1h-1zM977 694h1v1h-1zM977 684h1v1h-1zM977 674h1v1h-1zM977 664h1v1h-1zM977 654h1v1h-1zM977 644h1v1h-1zM977 634h1v1h-1zM977 624h1v1h-1zM977 614h1v1h-1zM977 604h1v1h-1zM977 594h1v1h-1zM977 584h1v1h-1zM977 574h1v1h-1zM977 564h1v1h-1zM977 554h1v1h-1zM977 544h1v1h-1zM977 534h1v1h-1zM977 523h1v1h-1zM977 513h1v1h-1zM977 503h1v1h-1zM977 493h1v1h-1zM977 483h1v1h-1zM977 473h1v1h-1zM977 463h1v1h-1zM977 453h1v1h-1zM977 443h1v1h-1zM977 433h1v1h-1zM977 423h1v1h-1zM977 413h1v1h-1zM977 403h1v1h-1zM977 393h1v1h-1zM977 383h1v1h-1zM977 373h1v1h-1zM977 363h1v1h-1zM977 353h1v1h-1zM977 343h1v1h-1zM977 333h1v1h-1zM977 323h1v1h-1zM977 313h1v1h-1zM977 303h1v1h-1zM977 293h1v1h-1zM977 283h1v1h-1zM977 273h1v1h-1zM977 263h1v1h-1zM977 253h1v1h-1zM977 243h1v1h-1zM977 233h1v1h-1zM977 223h1v1h-1zM977 213h1v1h-1zM977 203h1v1h-1zM977 193h1v1h-1zM977 183h1v1h-1zM977 173h1v1h-1zM977 163h1v1h-1zM977 153h1v1h-1zM987 744h1v1h-1zM987 734h1v1h-1zM987 724h1v1h-1zM987 714h1v1h-1zM987 704h1v1h-1zM987 694h1v1h-1zM987 684h1v1h-1zM987 674h1v1h-1zM987 664h1v1h-1zM987 654h1v1h-1zM987 644h1v1h-1zM987 634h1v1h-1zM987 624h1v1h-1zM987 614h1v1h-1zM987 604h1v1h-1zM987 594h1v1h-1zM987 584h1v1h-1zM987 574h1v1h-1zM987 564h1v1h-1zM987 554h1v1h-1zM987 544h1v1h-1zM987 534h1v1h-1zM987 523h1v1h-1zM987 513h1v1h-1zM987 503h1v1h-1zM987 493h1v1h-1zM987 483h1v1h-1zM987 473h1v1h-1zM987 463h1v1h-1zM987 453h1v1h-1zM987 443h1v1h-1zM987 433h1v1h-1zM987 423h1v1h-1zM987 413h1v1h-1zM987 403h1v1h-1zM987 393h1v1h-1zM987 383h1v1h-1zM987 373h1v1h-1zM987 363h1v1h-1zM987 353h1v1h-1zM987 343h1v1h-1zM987 333h1v1h-1zM987 323h1v1h-1zM987 313h1v1h-1zM987 303h1v1h-1zM987 293h1v1h-1zM987 283h1v1h-1zM987 273h1v1h-1zM987 263h1v1h-1zM987 253h1v1h-1zM987 243h1v1h-1zM987 233h1v1h-1zM987 223h1v1h-1zM987 213h1v1h-1zM987 203h1v1h-1zM987 193h1v1h-1zM987 183h1v1h-1zM987 173h1v1h-1zM987 163h1v1h-1zM987 153h1v1h-1zM997 744h1v1h-1zM997 734h1v1h-1zM997 724h1v1h-1zM997 714h1v1h-1zM997 704h1v1h-1zM997 694h1v1h-1zM997 684h1v1h-1zM997 674h1v1h-1zM997 664h1v1h-1zM997 654h1v1h-1zM997 644h1v1h-1zM997 634h1v1h-1zM997 624h1v1h-1zM997 614h1v1h-1zM997 604h1v1h-1zM997 594h1v1h-1zM997 584h1v1h-1zM997 574h1v1h-1zM997 564h1v1h-1zM997 554h1v1h-1zM997 544h1v1h-1zM997 534h1v1h-1zM997 523h1v1h-1zM997 513h1v1h-1zM997 503h1v1h-1zM997 493h1v1h-1zM997 483h1v1h-1zM997 473h1v1h-1zM997 463h1v1h-1zM997 453h1v1h-1zM997 443h1v1h-1zM997 433h1v1h-1zM997 423h1v1h-1zM997 413h1v1h-1zM997 403h1v1h-1zM997 393h1v1h-1zM997 383h1v1h-1zM997 373h1v1h-1zM997 363h1v1h-1zM997 353h1v1h-1zM997 343h1v1h-1zM997 333h1v1h-1zM997 323h1v1h-1zM997 313h1v1h-1zM997 303h1v1h-1zM997 293h1v1h-1zM997 283h1v1h-1zM997 273h1v1h-1zM997 263h1v1h-1zM997 253h1v1h-1zM997 243h1v1h-1zM997 233h1v1h-1zM997 223h1v1h-1zM997 213h1v1h-1zM997 203h1v1h-1zM997 193h1v1h-1zM997 183h1v1h-1zM997 173h1v1h-1zM997 163h1v1h-1zM997 153h1v1h-1zM1007 744h1v1h-1zM1007 734h1v1h-1zM1007 724h1v1h-1zM1007 714h1v1h-1zM1007 704h1v1h-1zM1007 694h1v1h-1zM1007 684h1v1h-1zM1007 674h1v1h-1zM1007 664h1v1h-1zM1007 654h1v1h-1zM1007 644h1v1h-1zM1007 634h1v1h-1zM1007 624h1v1h-1zM1007 614h1v1h-1zM1007 604h1v1h-1zM1007 594h1v1h-1zM1007 584h1v1h-1zM1007 574h1v1h-1zM1007 564h1v1h-1zM1007 554h1v1h-1zM1007 544h1v1h-1zM1007 534h1v1h-1zM1007 523h1v1h-1zM1007 513h1v1h-1zM1007 503h1v1h-1zM1007 493h1v1h-1zM1007 483h1v1h-1zM1007 473h1v1h-1zM1007 463h1v1h-1zM1007 453h1v1h-1zM1007 443h1v1h-1zM1007 433h1v1h-1zM1007 423h1v1h-1zM1007 413h1v1h-1zM1007 403h1v1h-1zM1007 393h1v1h-1zM1007 383h1v1h-1zM1007 373h1v1h-1zM1007 363h1v1h-1zM1007 353h1v1h-1zM1007 343h1v1h-1zM1007 333h1v1h-1zM1007 323h1v1h-1zM1007 313h1v1h-1zM1007 303h1v1h-1zM1007 293h1v1h-1zM1007 283h1v1h-1zM1007 273h1v1h-1zM1007 263h1v1h-1zM1007 253h1v1h-1zM1007 243h1v1h-1zM1007 233h1v1h-1zM1007 223h1v1h-1zM1007 213h1v1h-1zM1007 203h1v1h-1zM1007 193h1v1h-1zM1007 183h1v1h-1zM1007 173h1v1h-1zM1007 163h1v1h-1zM1007 153h1v1h-1zM1018 744h1v1h-1zM1018 734h1v1h-1zM1018 724h1v1h-1zM1018 714h1v1h-1zM1018 704h1v1h-1zM1018 694h1v1h-1zM1018 684h1v1h-1zM1018 674h1v1h-1zM1018 664h1v1h-1zM1018 654h1v1h-1zM1018 644h1v1h-1zM1018 634h1v1h-1zM1018 624h1v1h-1zM1018 614h1v1h-1zM1018 604h1v1h-1zM1018 594h1v1h-1zM1018 584h1v1h-1zM1018 574h1v1h-1zM1018 564h1v1h-1zM1018 554h1v1h-1zM1018 544h1v1h-1zM1018 534h1v1h-1zM1018 523h1v1h-1zM1018 513h1v1h-1zM1018 503h1v1h-1zM1018 493h1v1h-1zM1018 483h1v1h-1zM1018 473h1v1h-1zM1018 463h1v1h-1zM1018 453h1v1h-1zM1018 443h1v1h-1zM1018 433h1v1h-1zM1018 423h1v1h-1zM1018 413h1v1h-1zM1018 403h1v1h-1zM1018 393h1v1h-1zM1018 383h1v1h-1zM1018 373h1v1h-1zM1018 363h1v1h-1zM1018 353h1v1h-1zM1018 343h1v1h-1zM1018 333h1v1h-1zM1018 323h1v1h-1zM1018 313h1v1h-1zM1018 303h1v1h-1zM1018 293h1v1h-1zM1018 283h1v1h-1zM1018 273h1v1h-1zM1018 263h1v1h-1zM1018 253h1v1h-1zM1018 243h1v1h-1zM1018 233h1v1h-1zM1018 223h1v1h-1zM1018 213h1v1h-1zM1018 203h1v1h-1zM1018 193h1v1h-1zM1018 183h1v1h-1zM1018 173h1v1h-1zM1018 163h1v1h-1zM1018 153h1v1h-1zM1028 744h1v1h-1zM1028 734h1v1h-1zM1028 724h1v1h-1zM1028 714h1v1h-1zM1028 704h1v1h-1zM1028 694h1v1h-1zM1028 684h1v1h-1zM1028 674h1v1h-1zM1028 664h1v1h-1zM1028 654h1v1h-1zM1028 644h1v1h-1zM1028 634h1v1h-1zM1028 624h1v1h-1zM1028 614h1v1h-1zM1028 604h1v1h-1zM1028 594h1v1h-1zM1028 584h1v1h-1zM1028 574h1v1h-1zM1028 564h1v1h-1zM1028 554h1v1h-1zM1028 544h1v1h-1zM1028 534h1v1h-1zM1028 523h1v1h-1zM1028 513h1v1h-1zM1028 503h1v1h-1zM1028 493h1v1h-1zM1028 483h1v1h-1zM1028 473h1v1h-1zM1028 463h1v1h-1zM1028 453h1v1h-1zM1028 443h1v1h-1zM1028 433h1v1h-1zM1028 423h1v1h-1zM1028 413h1v1h-1zM1028 403h1v1h-1zM1028 393h1v1h-1zM1028 383h1v1h-1zM1028 373h1v1h-1zM1028 363h1v1h-1zM1028 353h1v1h-1zM1028 343h1v1h-1zM1028 333h1v1h-1zM1028 323h1v1h-1zM1028 313h1v1h-1zM1028 303h1v1h-1zM1028 293h1v1h-1zM1028 283h1v1h-1zM1028 273h1v1h-1zM1028 263h1v1h-1zM1028 253h1v1h-1zM1028 243h1v1h-1zM1028 233h1v1h-1zM1028 223h1v1h-1zM1028 213h1v1h-1zM1028 203h1v1h-1zM1028 193h1v1h-1zM1028 183h1v1h-1zM1028 173h1v1h-1zM1028 163h1v1h-1zM1028 153h1v1h-1zM1038 744h1v1h-1zM1038 734h1v1h-1zM1038 724h1v1h-1zM1038 714h1v1h-1zM1038 704h1v1h-1zM1038 694h1v1h-1zM1038 684h1v1h-1zM1038 674h1v1h-1zM1038 664h1v1h-1zM1038 654h1v1h-1zM1038 644h1v1h-1zM1038 634h1v1h-1zM1038 624h1v1h-1zM1038 614h1v1h-1zM1038 604h1v1h-1zM1038 594h1v1h-1zM1038 584h1v1h-1zM1038 574h1v1h-1zM1038 564h1v1h-1zM1038 554h1v1h-1zM1038 544h1v1h-1zM1038 534h1v1h-1zM1038 523h1v1h-1zM1038 513h1v1h-1zM1038 503h1v1h-1zM1038 493h1v1h-1zM1038 483h1v1h-1zM1038 473h1v1h-1zM1038 463h1v1h-1zM1038 453h1v1h-1zM1038 443h1v1h-1zM1038 433h1v1h-1zM1038 423h1v1h-1zM1038 413h1v1h-1zM1038 403h1v1h-1zM1038 393h1v1h-1zM1038 383h1v1h-1zM1038 373h1v1h-1zM1038 363h1v1h-1zM1038 353h1v1h-1zM1038 343h1v1h-1zM1038 333h1v1h-1zM1038 323h1v1h-1zM1038 313h1v1h-1zM1038 303h1v1h-1zM1038 293h1v1h-1zM1038 283h1v1h-1zM1038 273h1v1h-1zM1038 263h1v1h-1zM1038 253h1v1h-1zM1038 243h1v1h-1zM1038 233h1v1h-1zM1038 223h1v1h-1zM1038 213h1v1h-1zM1038 203h1v1h-1zM1038 193h1v1h-1zM1038 183h1v1h-1zM1038 173h1v1h-1zM1038 163h1v1h-1zM1038 153h1v1h-1zM1048 744h1v1h-1zM1048 734h1v1h-1zM1048 724h1v1h-1zM1048 714h1v1h-1zM1048 704h1v1h-1zM1048 694h1v1h-1zM1048 684h1v1h-1zM1048 674h1v1h-1zM1048 664h1v1h-1zM1048 654h1v1h-1zM1048 644h1v1h-1zM1048 634h1v1h-1zM1048 624h1v1h-1zM1048 614h1v1h-1zM1048 604h1v1h-1zM1048 594h1v1h-1zM1048 584h1v1h-1zM1048 574h1v1h-1zM1048 564h1v1h-1zM1048 554h1v1h-1zM1048 544h1v1h-1zM1048 534h1v1h-1zM1048 523h1v1h-1zM1048 513h1v1h-1zM1048 503h1v1h-1zM1048 493h1v1h-1zM1048 483h1v1h-1zM1048 473h1v1h-1zM1048 463h1v1h-1zM1048 453h1v1h-1zM1048 443h1v1h-1zM1048 433h1v1h-1zM1048 423h1v1h-1zM1048 413h1v1h-1zM1048 403h1v1h-1zM1048 393h1v1h-1zM1048 383h1v1h-1zM1048 373h1v1h-1zM1048 363h1v1h-1zM1048 353h1v1h-1zM1048 343h1v1h-1zM1048 333h1v1h-1zM1048 323h1v1h-1zM1048 313h1v1h-1zM1048 303h1v1h-1zM1048 293h1v1h-1zM1048 283h1v1h-1zM1048 273h1v1h-1zM1048 263h1v1h-1zM1048 253h1v1h-1zM1048 243h1v1h-1zM1048 233h1v1h-1zM1048 223h1v1h-1zM1048 213h1v1h-1zM1048 203h1v1h-1zM1048 193h1v1h-1zM1048 183h1v1h-1zM1048 173h1v1h-1zM1048 163h1v1h-1zM1048 153h1v1h-1zM1058 744h1v1h-1zM1058 734h1v1h-1zM1058 724h1v1h-1zM1058 714h1v1h-1zM1058 704h1v1h-1zM1058 694h1v1h-1zM1058 684h1v1h-1zM1058 674h1v1h-1zM1058 664h1v1h-1zM1058 654h1v1h-1zM1058 644h1v1h-1zM1058 634h1v1h-1zM1058 624h1v1h-1zM1058 614h1v1h-1zM1058 604h1v1h-1zM1058 594h1v1h-1zM1058 584h1v1h-1zM1058 574h1v1h-1zM1058 564h1v1h-1zM1058 554h1v1h-1zM1058 544h1v1h-1zM1058 534h1v1h-1zM1058 523h1v1h-1zM1058 513h1v1h-1zM1058 503h1v1h-1zM1058 493h1v1h-1zM1058 483h1v1h-1zM1058 473h1v1h-1zM1058 463h1v1h-1zM1058 453h1v1h-1zM1058 443h1v1h-1zM1058 433h1v1h-1zM1058 423h1v1h-1zM1058 413h1v1h-1zM1058 403h1v1h-1zM1058 393h1v1h-1zM1058 383h1v1h-1zM1058 373h1v1h-1zM1058 363h1v1h-1zM1058 353h1v1h-1zM1058 343h1v1h-1zM1058 333h1v1h-1zM1058 323h1v1h-1zM1058 313h1v1h-1zM1058 303h1v1h-1zM1058 293h1v1h-1zM1058 283h1v1h-1zM1058 273h1v1h-1zM1058 263h1v1h-1zM1058 253h1v1h-1zM1058 243h1v1h-1zM1058 233h1v1h-1zM1058 223h1v1h-1zM1058 213h1v1h-1zM1058 203h1v1h-1zM1058 193h1v1h-1zM1058 183h1v1h-1zM1058 173h1v1h-1zM1058 163h1v1h-1zM1058 153h1v1h-1zM1068 744h1v1h-1zM1068 734h1v1h-1zM1068 724h1v1h-1zM1068 714h1v1h-1zM1068 704h1v1h-1zM1068 694h1v1h-1zM1068 684h1v1h-1zM1068 674h1v1h-1zM1068 664h1v1h-1zM1068 654h1v1h-1zM1068 644h1v1h-1zM1068 634h1v1h-1zM1068 624h1v1h-1zM1068 614h1v1h-1zM1068 604h1v1h-1zM1068 594h1v1h-1zM1068 584h1v1h-1zM1068 574h1v1h-1zM1068 564h1v1h-1zM1068 554h1v1h-1zM1068 544h1v1h-1zM1068 534h1v1h-1zM1068 523h1v1h-1zM1068 513h1v1h-1zM1068 503h1v1h-1zM1068 493h1v1h-1zM1068 483h1v1h-1zM1068 473h1v1h-1zM1068 463h1v1h-1zM1068 453h1v1h-1zM1068 443h1v1h-1zM1068 433h1v1h-1zM1068 423h1v1h-1zM1068 413h1v1h-1zM1068 403h1v1h-1zM1068 393h1v1h-1zM1068 383h1v1h-1zM1068 373h1v1h-1zM1068 363h1v1h-1zM1068 353h1v1h-1zM1068 343h1v1h-1zM1068 333h1v1h-1zM1068 323h1v1h-1zM1068 313h1v1h-1zM1068 303h1v1h-1zM1068 293h1v1h-1zM1068 283h1v1h-1zM1068 273h1v1h-1zM1068 263h1v1h-1zM1068 253h1v1h-1zM1068 243h1v1h-1zM1068 233h1v1h-1zM1068 223h1v1h-1zM1068 213h1v1h-1zM1068 203h1v1h-1zM1068 193h1v1h-1zM1068 183h1v1h-1zM1068 173h1v1h-1zM1068 163h1v1h-1zM1068 153h1v1h-1zM1078 744h1v1h-1zM1078 734h1v1h-1zM1078 724h1v1h-1zM1078 714h1v1h-1zM1078 704h1v1h-1zM1078 694h1v1h-1zM1078 684h1v1h-1zM1078 674h1v1h-1zM1078 664h1v1h-1zM1078 654h1v1h-1zM1078 644h1v1h-1zM1078 634h1v1h-1zM1078 624h1v1h-1zM1078 614h1v1h-1zM1078 604h1v1h-1zM1078 594h1v1h-1zM1078 584h1v1h-1zM1078 574h1v1h-1zM1078 564h1v1h-1zM1078 554h1v1h-1zM1078 544h1v1h-1zM1078 534h1v1h-1zM1078 523h1v1h-1zM1078 513h1v1h-1zM1078 503h1v1h-1zM1078 493h1v1h-1zM1078 483h1v1h-1zM1078 473h1v1h-1zM1078 463h1v1h-1zM1078 453h1v1h-1zM1078 443h1v1h-1zM1078 433h1v1h-1zM1078 423h1v1h-1zM1078 413h1v1h-1zM1078 403h1v1h-1zM1078 393h1v1h-1zM1078 383h1v1h-1zM1078 373h1v1h-1zM1078 363h1v1h-1zM1078 353h1v1h-1zM1078 343h1v1h-1zM1078 333h1v1h-1zM1078 323h1v1h-1zM1078 313h1v1h-1zM1078 303h1v1h-1zM1078 293h1v1h-1zM1078 283h1v1h-1zM1078 273h1v1h-1zM1078 263h1v1h-1zM1078 253h1v1h-1zM1078 243h1v1h-1zM1078 233h1v1h-1zM1078 223h1v1h-1zM1078 213h1v1h-1zM1078 203h1v1h-1zM1078 193h1v1h-1zM1078 183h1v1h-1zM1078 173h1v1h-1zM1078 163h1v1h-1zM1078 153h1v1h-1zM1088 744h1v1h-1zM1088 734h1v1h-1zM1088 724h1v1h-1zM1088 714h1v1h-1zM1088 704h1v1h-1zM1088 694h1v1h-1zM1088 684h1v1h-1zM1088 674h1v1h-1zM1088 664h1v1h-1zM1088 654h1v1h-1zM1088 644h1v1h-1zM1088 634h1v1h-1zM1088 624h1v1h-1zM1088 614h1v1h-1zM1088 604h1v1h-1zM1088 594h1v1h-1zM1088 584h1v1h-1zM1088 574h1v1h-1zM1088 564h1v1h-1zM1088 554h1v1h-1zM1088 544h1v1h-1zM1088 534h1v1h-1zM1088 523h1v1h-1zM1088 513h1v1h-1zM1088 503h1v1h-1zM1088 493h1v1h-1zM1088 483h1v1h-1zM1088 473h1v1h-1zM1088 463h1v1h-1zM1088 453h1v1h-1zM1088 443h1v1h-1zM1088 433h1v1h-1zM1088 423h1v1h-1zM1088 413h1v1h-1zM1088 403h1v1h-1zM1088 393h1v1h-1zM1088 383h1v1h-1zM1088 373h1v1h-1zM1088 363h1v1h-1zM1088 353h1v1h-1zM1088 343h1v1h-1zM1088 333h1v1h-1zM1088 323h1v1h-1zM1088 313h1v1h-1zM1088 303h1v1h-1zM1088 293h1v1h-1zM1088 283h1v1h-1zM1088 273h1v1h-1zM1088 263h1v1h-1zM1088 253h1v1h-1zM1088 243h1v1h-1zM1088 233h1v1h-1zM1088 223h1v1h-1zM1088 213h1v1h-1zM1088 203h1v1h-1zM1088 193h1v1h-1zM1088 183h1v1h-1zM1088 173h1v1h-1zM1088 163h1v1h-1zM1088 153h1v1h-1zM1098 744h1v1h-1zM1098 734h1v1h-1zM1098 724h1v1h-1zM1098 714h1v1h-1zM1098 704h1v1h-1zM1098 694h1v1h-1zM1098 684h1v1h-1zM1098 674h1v1h-1zM1098 664h1v1h-1zM1098 654h1v1h-1zM1098 644h1v1h-1zM1098 634h1v1h-1zM1098 624h1v1h-1zM1098 614h1v1h-1zM1098 604h1v1h-1zM1098 594h1v1h-1zM1098 584h1v1h-1zM1098 574h1v1h-1zM1098 564h1v1h-1zM1098 554h1v1h-1zM1098 544h1v1h-1zM1098 534h1v1h-1zM1098 523h1v1h-1zM1098 513h1v1h-1zM1098 503h1v1h-1zM1098 493h1v1h-1zM1098 483h1v1h-1zM1098 473h1v1h-1zM1098 463h1v1h-1zM1098 453h1v1h-1zM1098 443h1v1h-1zM1098 433h1v1h-1zM1098 423h1v1h-1zM1098 413h1v1h-1zM1098 403h1v1h-1zM1098 393h1v1h-1zM1098 383h1v1h-1zM1098 373h1v1h-1zM1098 363h1v1h-1zM1098 353h1v1h-1zM1098 343h1v1h-1zM1098 333h1v1h-1zM1098 323h1v1h-1zM1098 313h1v1h-1zM1098 303h1v1h-1zM1098 293h1v1h-1zM1098 283h1v1h-1zM1098 273h1v1h-1zM1098 263h1v1h-1zM1098 253h1v1h-1zM1098 243h1v1h-1zM1098 233h1v1h-1zM1098 223h1v1h-1zM1098 213h1v1h-1zM1098 203h1v1h-1zM1098 193h1v1h-1zM1098 183h1v1h-1zM1098 173h1v1h-1zM1098 163h1v1h-1zM1098 153h1v1h-1zM1108 744h1v1h-1zM1108 734h1v1h-1zM1108 724h1v1h-1zM1108 714h1v1h-1zM1108 704h1v1h-1zM1108 694h1v1h-1zM1108 684h1v1h-1zM1108 674h1v1h-1zM1108 664h1v1h-1zM1108 654h1v1h-1zM1108 644h1v1h-1zM1108 634h1v1h-1zM1108 624h1v1h-1zM1108 614h1v1h-1zM1108 604h1v1h-1zM1108 594h1v1h-1zM1108 584h1v1h-1zM1108 574h1v1h-1zM1108 564h1v1h-1zM1108 554h1v1h-1zM1108 544h1v1h-1zM1108 534h1v1h-1zM1108 523h1v1h-1zM1108 513h1v1h-1zM1108 503h1v1h-1zM1108 493h1v1h-1zM1108 483h1v1h-1zM1108 473h1v1h-1zM1108 463h1v1h-1zM1108 453h1v1h-1zM1108 443h1v1h-1zM1108 433h1v1h-1zM1108 423h1v1h-1zM1108 413h1v1h-1zM1108 403h1v1h-1zM1108 393h1v1h-1zM1108 383h1v1h-1zM1108 373h1v1h-1zM1108 363h1v1h-1zM1108 353h1v1h-1zM1108 343h1v1h-1zM1108 333h1v1h-1zM1108 323h1v1h-1zM1108 313h1v1h-1zM1108 303h1v1h-1zM1108 293h1v1h-1zM1108 283h1v1h-1zM1108 273h1v1h-1zM1108 263h1v1h-1zM1108 253h1v1h-1zM1108 243h1v1h-1zM1108 233h1v1h-1zM1108 223h1v1h-1zM1108 213h1v1h-1zM1108 203h1v1h-1zM1108 193h1v1h-1zM1108 183h1v1h-1zM1108 173h1v1h-1zM1108 163h1v1h-1zM1108 153h1v1h-1zM1118 744h1v1h-1zM1118 734h1v1h-1zM1118 724h1v1h-1zM1118 714h1v1h-1zM1118 704h1v1h-1zM1118 694h1v1h-1zM1118 684h1v1h-1zM1118 674h1v1h-1zM1118 664h1v1h-1zM1118 654h1v1h-1zM1118 644h1v1h-1zM1118 634h1v1h-1zM1118 624h1v1h-1zM1118 614h1v1h-1zM1118 604h1v1h-1zM1118 594h1v1h-1zM1118 584h1v1h-1zM1118 574h1v1h-1zM1118 564h1v1h-1zM1118 554h1v1h-1zM1118 544h1v1h-1zM1118 534h1v1h-1zM1118 523h1v1h-1zM1118 513h1v1h-1zM1118 503h1v1h-1zM1118 493h1v1h-1zM1118 483h1v1h-1zM1118 473h1v1h-1zM1118 463h1v1h-1zM1118 453h1v1h-1zM1118 443h1v1h-1zM1118 433h1v1h-1zM1118 423h1v1h-1zM1118 413h1v1h-1zM1118 403h1v1h-1zM1118 393h1v1h-1zM1118 383h1v1h-1zM1118 373h1v1h-1zM1118 363h1v1h-1zM1118 353h1v1h-1zM1118 343h1v1h-1zM1118 333h1v1h-1zM1118 323h1v1h-1zM1118 313h1v1h-1zM1118 303h1v1h-1zM1118 293h1v1h-1zM1118 283h1v1h-1zM1118 273h1v1h-1zM1118 263h1v1h-1zM1118 253h1v1h-1zM1118 243h1v1h-1zM1118 233h1v1h-1zM1118 223h1v1h-1zM1118 213h1v1h-1zM1118 203h1v1h-1zM1118 193h1v1h-1zM1118 183h1v1h-1zM1118 173h1v1h-1zM1118 163h1v1h-1zM1118 153h1v1h-1zM1128 744h1v1h-1zM1128 734h1v1h-1zM1128 724h1v1h-1zM1128 714h1v1h-1zM1128 704h1v1h-1zM1128 694h1v1h-1zM1128 684h1v1h-1zM1128 674h1v1h-1zM1128 664h1v1h-1zM1128 654h1v1h-1zM1128 644h1v1h-1zM1128 634h1v1h-1zM1128 624h1v1h-1zM1128 614h1v1h-1zM1128 604h1v1h-1zM1128 594h1v1h-1zM1128 584h1v1h-1zM1128 574h1v1h-1zM1128 564h1v1h-1zM1128 554h1v1h-1zM1128 544h1v1h-1zM1128 534h1v1h-1zM1128 523h1v1h-1zM1128 513h1v1h-1zM1128 503h1v1h-1zM1128 493h1v1h-1zM1128 483h1v1h-1zM1128 473h1v1h-1zM1128 463h1v1h-1zM1128 453h1v1h-1zM1128 443h1v1h-1zM1128 433h1v1h-1zM1128 423h1v1h-1zM1128 413h1v1h-1zM1128 403h1v1h-1zM1128 393h1v1h-1zM1128 383h1v1h-1zM1128 373h1v1h-1zM1128 363h1v1h-1zM1128 353h1v1h-1zM1128 343h1v1h-1zM1128 333h1v1h-1zM1128 323h1v1h-1zM1128 313h1v1h-1zM1128 303h1v1h-1zM1128 293h1v1h-1zM1128 283h1v1h-1zM1128 273h1v1h-1zM1128 263h1v1h-1zM1128 253h1v1h-1zM1128 243h1v1h-1zM1128 233h1v1h-1zM1128 223h1v1h-1zM1128 213h1v1h-1zM1128 203h1v1h-1zM1128 193h1v1h-1zM1128 183h1v1h-1zM1128 173h1v1h-1zM1128 163h1v1h-1zM1128 153h1v1h-1zM1138 744h1v1h-1zM1138 734h1v1h-1zM1138 724h1v1h-1zM1138 714h1v1h-1zM1138 704h1v1h-1zM1138 694h1v1h-1zM1138 684h1v1h-1zM1138 674h1v1h-1zM1138 664h1v1h-1zM1138 654h1v1h-1zM1138 644h1v1h-1zM1138 634h1v1h-1zM1138 624h1v1h-1zM1138 614h1v1h-1zM1138 604h1v1h-1zM1138 594h1v1h-1zM1138 584h1v1h-1zM1138 574h1v1h-1zM1138 564h1v1h-1zM1138 554h1v1h-1zM1138 544h1v1h-1zM1138 534h1v1h-1zM1138 523h1v1h-1zM1138 513h1v1h-1zM1138 503h1v1h-1zM1138 493h1v1h-1zM1138 483h1v1h-1zM1138 473h1v1h-1zM1138 463h1v1h-1zM1138 453h1v1h-1zM1138 443h1v1h-1zM1138 433h1v1h-1zM1138 423h1v1h-1zM1138 413h1v1h-1zM1138 403h1v1h-1zM1138 393h1v1h-1zM1138 383h1v1h-1zM1138 373h1v1h-1zM1138 363h1v1h-1zM1138 353h1v1h-1zM1138 343h1v1h-1zM1138 333h1v1h-1zM1138 323h1v1h-1zM1138 313h1v1h-1zM1138 303h1v1h-1zM1138 293h1v1h-1zM1138 283h1v1h-1zM1138 273h1v1h-1zM1138 263h1v1h-1zM1138 253h1v1h-1zM1138 243h1v1h-1zM1138 233h1v1h-1zM1138 223h1v1h-1zM1138 213h1v1h-1zM1138 203h1v1h-1zM1138 193h1v1h-1zM1138 183h1v1h-1zM1138 173h1v1h-1zM1138 163h1v1h-1zM1138 153h1v1h-1zM1148 744h1v1h-1zM1148 734h1v1h-1zM1148 724h1v1h-1zM1148 714h1v1h-1zM1148 704h1v1h-1zM1148 694h1v1h-1zM1148 684h1v1h-1zM1148 674h1v1h-1zM1148 664h1v1h-1zM1148 654h1v1h-1zM1148 644h1v1h-1zM1148 634h1v1h-1zM1148 624h1v1h-1zM1148 614h1v1h-1zM1148 604h1v1h-1zM1148 594h1v1h-1zM1148 584h1v1h-1zM1148 574h1v1h-1zM1148 564h1v1h-1zM1148 554h1v1h-1zM1148 544h1v1h-1zM1148 534h1v1h-1zM1148 523h1v1h-1zM1148 513h1v1h-1zM1148 503h1v1h-1zM1148 493h1v1h-1zM1148 483h1v1h-1zM1148 473h1v1h-1zM1148 463h1v1h-1zM1148 453h1v1h-1zM1148 443h1v1h-1zM1148 433h1v1h-1zM1148 423h1v1h-1zM1148 413h1v1h-1zM1148 403h1v1h-1zM1148 393h1v1h-1zM1148 383h1v1h-1zM1148 373h1v1h-1zM1148 363h1v1h-1zM1148 353h1v1h-1zM1148 343h1v1h-1zM1148 333h1v1h-1zM1148 323h1v1h-1zM1148 313h1v1h-1zM1148 303h1v1h-1zM1148 293h1v1h-1zM1148 283h1v1h-1zM1148 273h1v1h-1zM1148 263h1v1h-1zM1148 253h1v1h-1zM1148 243h1v1h-1zM1148 233h1v1h-1zM1148 223h1v1h-1zM1148 213h1v1h-1zM1148 203h1v1h-1zM1148 193h1v1h-1zM1148 183h1v1h-1zM1148 173h1v1h-1zM1148 163h1v1h-1zM1148 153h1v1h-1z" fill="#404040"/>
<rect x="216.52" y="353.28" width="800.96" height="180.22" fill="none" stroke="#fff" stroke-width="2.6"/>
<line x1="196.50" y1="453.50" x2="1037.50" y2="453.50" stroke="#a04646" stroke-width="1.05" stroke-dasharray="17 7 2 7.08" stroke-dashoffset="1.6"/>
<line x1="316.50" y1="333.26" x2="316.50" y2="553.52" stroke="#ff1a1a" stroke-width="1.1" stroke-dasharray="17 7 2 7.08" stroke-dashoffset="14.34"/>
<line x1="917.50" y1="333.26" x2="917.50" y2="553.52" stroke="#ff1a1a" stroke-width="1.1" stroke-dasharray="17 7 2 7.08" stroke-dashoffset="14.34"/>
<circle cx="316.64" cy="453.40" r="40.05" fill="none" stroke="#cf5c5c" stroke-width="2.2"/>
<circle cx="917.36" cy="453.40" r="40.05" fill="none" stroke="#cf5c5c" stroke-width="2.2"/>
<path d="M116.40 513.48V553.52M96.38 533.50H136.42" stroke="#b00000" stroke-width="1.05"/>
<text transform="translate(427.2 524.37) rotate(-90)" font-family="Liberation Sans" font-size="31" fill="#fff" textLength="181.29" lengthAdjust="spacingAndGlyphs">104.245.02.4B</text>
<rect x="311.64" y="408.36" width="10.5" height="10.5" fill="#0780ad" stroke="#6f9fb3" stroke-width="0.8"/>
<rect x="311.64" y="488.45" width="10.5" height="10.5" fill="#0780ad" stroke="#6f9fb3" stroke-width="0.8"/>
<rect x="271.59" y="448.40" width="10.5" height="10.5" fill="#0780ad" stroke="#6f9fb3" stroke-width="0.8"/>
<rect x="351.69" y="448.40" width="10.5" height="10.5" fill="#0780ad" stroke="#6f9fb3" stroke-width="0.8"/>
<circle cx="316.64" cy="453.40" r="5" fill="#0000b0" stroke="#7a7ab8" stroke-width="0.8"/>
<rect x="912.36" y="408.36" width="10.5" height="10.5" fill="#0780ad" stroke="#6f9fb3" stroke-width="0.8"/>
<rect x="912.36" y="488.45" width="10.5" height="10.5" fill="#0780ad" stroke="#6f9fb3" stroke-width="0.8"/>
<rect x="872.31" y="448.40" width="10.5" height="10.5" fill="#0780ad" stroke="#6f9fb3" stroke-width="0.8"/>
<rect x="952.41" y="448.40" width="10.5" height="10.5" fill="#0780ad" stroke="#6f9fb3" stroke-width="0.8"/>
<circle cx="917.36" cy="453.40" r="5" fill="#0000b0" stroke="#7a7ab8" stroke-width="0.8"/>
<rect x="191.50" y="448.40" width="10.5" height="10.5" fill="#0000b8" stroke="#9090c8" stroke-width="0.8"/>
<rect x="1032.50" y="448.40" width="10.5" height="10.5" fill="#c0001c" stroke="#d08080" stroke-width="0.8"/>
<circle cx="196.50" cy="433.38" r="5" fill="none" stroke="#c00000" stroke-width="1"/><path d="M191.50 433.38H201.50M196.50 428.38V438.38" stroke="#c00000" stroke-width="1"/>
</g>
<g font-family="Liberation Sans" font-size="8.6" fill="#111">
<g clip-path="url(#hr)">
<text x="91.91" y="140.9" textLength="8.87" lengthAdjust="spacingAndGlyphs">-2</text>
<text x="113.62" y="140.9" textLength="5.55" lengthAdjust="spacingAndGlyphs">0</text>
<text x="133.64" y="140.9" textLength="5.55" lengthAdjust="spacingAndGlyphs">2</text>
<text x="153.66" y="140.9" textLength="5.55" lengthAdjust="spacingAndGlyphs">4</text>
<text x="173.69" y="140.9" textLength="5.55" lengthAdjust="spacingAndGlyphs">6</text>
<text x="193.77" y="140.9" textLength="5.55" lengthAdjust="spacingAndGlyphs">8</text>
<text x="210.78" y="140.9" textLength="11.10" lengthAdjust="spacingAndGlyphs">10</text>
<text x="230.86" y="140.9" textLength="11.10" lengthAdjust="spacingAndGlyphs">12</text>
<text x="250.77" y="140.9" textLength="11.10" lengthAdjust="spacingAndGlyphs">14</text>
<text x="270.91" y="140.9" textLength="11.10" lengthAdjust="spacingAndGlyphs">16</text>
<text x="290.93" y="140.9" textLength="11.10" lengthAdjust="spacingAndGlyphs">18</text>
<text x="311.01" y="140.9" textLength="11.10" lengthAdjust="spacingAndGlyphs">20</text>
<text x="331.10" y="140.9" textLength="11.10" lengthAdjust="spacingAndGlyphs">22</text>
<text x="351.00" y="140.9" textLength="11.10" lengthAdjust="spacingAndGlyphs">24</text>
<text x="371.14" y="140.9" textLength="11.10" lengthAdjust="spacingAndGlyphs">26</text>
<text x="391.17" y="140.9" textLength="11.10" lengthAdjust="spacingAndGlyphs">28</text>
<text x="411.19" y="140.9" textLength="11.10" lengthAdjust="spacingAndGlyphs">30</text>
<text x="431.27" y="140.9" textLength="11.10" lengthAdjust="spacingAndGlyphs">32</text>
<text x="451.18" y="140.9" textLength="11.10" lengthAdjust="spacingAndGlyphs">34</text>
<text x="471.32" y="140.9" textLength="11.10" lengthAdjust="spacingAndGlyphs">36</text>
<text x="491.35" y="140.9" textLength="11.10" lengthAdjust="spacingAndGlyphs">38</text>
<text x="511.37" y="140.9" textLength="11.10" lengthAdjust="spacingAndGlyphs">40</text>
<text x="531.45" y="140.9" textLength="11.10" lengthAdjust="spacingAndGlyphs">42</text>
<text x="551.36" y="140.9" textLength="11.10" lengthAdjust="spacingAndGlyphs">44</text>
<text x="571.50" y="140.9" textLength="11.10" lengthAdjust="spacingAndGlyphs">46</text>
<text x="591.52" y="140.9" textLength="11.10" lengthAdjust="spacingAndGlyphs">48</text>
<text x="611.43" y="140.9" textLength="11.10" lengthAdjust="spacingAndGlyphs">50</text>
<text x="631.51" y="140.9" textLength="11.10" lengthAdjust="spacingAndGlyphs">52</text>
<text x="651.42" y="140.9" textLength="11.10" lengthAdjust="spacingAndGlyphs">54</text>
<text x="671.56" y="140.9" textLength="11.10" lengthAdjust="spacingAndGlyphs">56</text>
<text x="691.59" y="140.9" textLength="11.10" lengthAdjust="spacingAndGlyphs">58</text>
<text x="711.49" y="140.9" textLength="11.10" lengthAdjust="spacingAndGlyphs">60</text>
<text x="731.58" y="140.9" textLength="11.10" lengthAdjust="spacingAndGlyphs">62</text>
<text x="751.48" y="140.9" textLength="11.10" lengthAdjust="spacingAndGlyphs">64</text>
<text x="771.62" y="140.9" textLength="11.10" lengthAdjust="spacingAndGlyphs">66</text>
<text x="791.65" y="140.9" textLength="11.10" lengthAdjust="spacingAndGlyphs">68</text>
<text x="811.61" y="140.9" textLength="11.10" lengthAdjust="spacingAndGlyphs">70</text>
<text x="831.70" y="140.9" textLength="11.10" lengthAdjust="spacingAndGlyphs">72</text>
<text x="851.60" y="140.9" textLength="11.10" lengthAdjust="spacingAndGlyphs">74</text>
<text x="871.74" y="140.9" textLength="11.10" lengthAdjust="spacingAndGlyphs">76</text>
<text x="891.77" y="140.9" textLength="11.10" lengthAdjust="spacingAndGlyphs">78</text>
<text x="911.79" y="140.9" textLength="11.10" lengthAdjust="spacingAndGlyphs">80</text>
<text x="931.87" y="140.9" textLength="11.10" lengthAdjust="spacingAndGlyphs">82</text>
<text x="951.78" y="140.9" textLength="11.10" lengthAdjust="spacingAndGlyphs">84</text>
<text x="971.92" y="140.9" textLength="11.10" lengthAdjust="spacingAndGlyphs">86</text>
<text x="991.95" y="140.9" textLength="11.10" lengthAdjust="spacingAndGlyphs">88</text>
<text x="1011.85" y="140.9" textLength="11.10" lengthAdjust="spacingAndGlyphs">90</text>
<text x="1031.94" y="140.9" textLength="11.10" lengthAdjust="spacingAndGlyphs">92</text>
<text x="1051.84" y="140.9" textLength="11.10" lengthAdjust="spacingAndGlyphs">94</text>
<text x="1071.98" y="140.9" textLength="11.10" lengthAdjust="spacingAndGlyphs">96</text>
<text x="1092.01" y="140.9" textLength="11.10" lengthAdjust="spacingAndGlyphs">98</text>
<text x="1109.07" y="140.9" textLength="16.64" lengthAdjust="spacingAndGlyphs">100</text>
<text x="1129.16" y="140.9" textLength="16.64" lengthAdjust="spacingAndGlyphs">102</text>
<path d="M86.5 152V155M96.5 148V155M106.5 152V155M116.5 148V155M126.5 152V155M136.5 148V155M146.5 152V155M156.5 148V155M166.5 152V155M176.5 148V155M186.5 152V155M196.5 148V155M206.5 152V155M216.5 148V155M226.5 152V155M236.5 148V155M246.5 152V155M256.5 148V155M266.5 152V155M276.5 148V155M286.5 152V155M296.5 148V155M306.5 152V155M316.5 148V155M326.5 152V155M336.5 148V155M346.5 152V155M356.5 148V155M366.5 152V155M376.5 148V155M386.5 152V155M396.5 148V155M406.5 152V155M416.5 148V155M426.5 152V155M436.5 148V155M446.5 152V155M456.5 148V155M466.5 152V155M476.5 148V155M486.5 152V155M496.5 148V155M506.5 152V155M516.5 148V155M526.5 152V155M536.5 148V155M546.5 152V155M556.5 148V155M566.5 152V155M576.5 148V155M586.5 152V155M596.5 148V155M606.5 152V155M617.5 148V155M627.5 152V155M637.5 148V155M647.5 152V155M657.5 148V155M667.5 152V155M677.5 148V155M687.5 152V155M697.5 148V155M707.5 152V155M717.5 148V155M727.5 152V155M737.5 148V155M747.5 152V155M757.5 148V155M767.5 152V155M777.5 148V155M787.5 152V155M797.5 148V155M807.5 152V155M817.5 148V155M827.5 152V155M837.5 148V155M847.5 152V155M857.5 148V155M867.5 152V155M877.5 148V155M887.5 152V155M897.5 148V155M907.5 152V155M917.5 148V155M927.5 152V155M937.5 148V155M947.5 152V155M957.5 148V155M967.5 152V155M977.5 148V155M987.5 152V155M997.5 148V155M1007.5 152V155M1017.5 148V155M1027.5 152V155M1037.5 148V155M1047.5 152V155M1057.5 148V155M1067.5 152V155M1077.5 148V155M1087.5 152V155M1097.5 148V155M1107.5 152V155M1117.5 148V155M1127.5 152V155M1137.5 148V155M1147.5 152V155" stroke="#555" stroke-width="1"/>
</g><g clip-path="url(#vr)">
<text transform="translate(81.4 760.96) rotate(-90)" textLength="14.42" lengthAdjust="spacingAndGlyphs">-22</text>
<text transform="translate(81.4 740.99) rotate(-90)" textLength="14.42" lengthAdjust="spacingAndGlyphs">-20</text>
<text transform="translate(81.4 720.91) rotate(-90)" textLength="14.42" lengthAdjust="spacingAndGlyphs">-18</text>
<text transform="translate(81.4 700.88) rotate(-90)" textLength="14.42" lengthAdjust="spacingAndGlyphs">-16</text>
<text transform="translate(81.4 680.98) rotate(-90)" textLength="14.42" lengthAdjust="spacingAndGlyphs">-14</text>
<text transform="translate(81.4 660.84) rotate(-90)" textLength="14.42" lengthAdjust="spacingAndGlyphs">-12</text>
<text transform="translate(81.4 640.87) rotate(-90)" textLength="14.42" lengthAdjust="spacingAndGlyphs">-10</text>
<text transform="translate(81.4 618.06) rotate(-90)" textLength="8.87" lengthAdjust="spacingAndGlyphs">-8</text>
<text transform="translate(81.4 598.04) rotate(-90)" textLength="8.87" lengthAdjust="spacingAndGlyphs">-6</text>
<text transform="translate(81.4 578.13) rotate(-90)" textLength="8.87" lengthAdjust="spacingAndGlyphs">-4</text>
<text transform="translate(81.4 557.99) rotate(-90)" textLength="8.87" lengthAdjust="spacingAndGlyphs">-2</text>
<text transform="translate(81.4 536.28) rotate(-90)" textLength="5.55" lengthAdjust="spacingAndGlyphs">0</text>
<text transform="translate(81.4 516.26) rotate(-90)" textLength="5.55" lengthAdjust="spacingAndGlyphs">2</text>
<text transform="translate(81.4 496.24) rotate(-90)" textLength="5.55" lengthAdjust="spacingAndGlyphs">4</text>
<text transform="translate(81.4 476.21) rotate(-90)" textLength="5.55" lengthAdjust="spacingAndGlyphs">6</text>
<text transform="translate(81.4 456.13) rotate(-90)" textLength="5.55" lengthAdjust="spacingAndGlyphs">8</text>
<text transform="translate(81.4 439.12) rotate(-90)" textLength="11.10" lengthAdjust="spacingAndGlyphs">10</text>
<text transform="translate(81.4 419.04) rotate(-90)" textLength="11.10" lengthAdjust="spacingAndGlyphs">12</text>
<text transform="translate(81.4 399.13) rotate(-90)" textLength="11.10" lengthAdjust="spacingAndGlyphs">14</text>
<text transform="translate(81.4 378.99) rotate(-90)" textLength="11.10" lengthAdjust="spacingAndGlyphs">16</text>
<text transform="translate(81.4 358.97) rotate(-90)" textLength="11.10" lengthAdjust="spacingAndGlyphs">18</text>
<text transform="translate(81.4 338.89) rotate(-90)" textLength="11.10" lengthAdjust="spacingAndGlyphs">20</text>
<text transform="translate(81.4 318.80) rotate(-90)" textLength="11.10" lengthAdjust="spacingAndGlyphs">22</text>
<text transform="translate(81.4 298.90) rotate(-90)" textLength="11.10" lengthAdjust="spacingAndGlyphs">24</text>
<text transform="translate(81.4 278.76) rotate(-90)" textLength="11.10" lengthAdjust="spacingAndGlyphs">26</text>
<text transform="translate(81.4 258.73) rotate(-90)" textLength="11.10" lengthAdjust="spacingAndGlyphs">28</text>
<text transform="translate(81.4 238.71) rotate(-90)" textLength="11.10" lengthAdjust="spacingAndGlyphs">30</text>
<text transform="translate(81.4 218.63) rotate(-90)" textLength="11.10" lengthAdjust="spacingAndGlyphs">32</text>
<text transform="translate(81.4 198.72) rotate(-90)" textLength="11.10" lengthAdjust="spacingAndGlyphs">34</text>
<text transform="translate(81.4 178.58) rotate(-90)" textLength="11.10" lengthAdjust="spacingAndGlyphs">36</text>
<text transform="translate(81.4 158.55) rotate(-90)" textLength="11.10" lengthAdjust="spacingAndGlyphs">38</text>
<path d="M88 753.5H95M92 743.5H95M88 733.5H95M92 723.5H95M88 713.5H95M92 703.5H95M88 693.5H95M92 683.5H95M88 673.5H95M92 663.5H95M88 653.5H95M92 643.5H95M88 633.5H95M92 623.5H95M88 613.5H95M92 603.5H95M88 593.5H95M92 583.5H95M88 573.5H95M92 563.5H95M88 553.5H95M92 543.5H95M88 533.5H95M92 523.5H95M88 513.5H95M92 503.5H95M88 493.5H95M92 483.5H95M88 473.5H95M92 463.5H95M88 453.5H95M92 443.5H95M88 433.5H95M92 423.5H95M88 413.5H95M92 403.5H95M88 393.5H95M92 383.5H95M88 373.5H95M92 363.5H95M88 353.5H95M92 343.5H95M88 333.5H95M92 323.5H95M88 313.5H95M92 303.5H95M88 293.5H95M92 283.5H95M88 273.5H95M92 263.5H95M88 253.5H95M92 243.5H95M88 233.5H95M92 223.5H95M88 213.5H95M92 203.5H95M88 193.5H95M92 183.5H95M88 173.5H95M92 163.5H95M88 153.5H95M92 143.5H95" stroke="#555" stroke-width="1"/>
</g></g>
<path d="M731.6 144.8H743.2L737.4 150.2Z" fill="#000"/>
<path d="M84.9 303.3V314.9L90.6 309.1Z" fill="#000"/>
</svg>
<div style="position:absolute;left:1156px;top:108px;width:299px;height:22px;background:linear-gradient(#ececec,#dedede)"></div>
<div style="position:absolute;left:1156px;top:130px;width:299px;height:26px;background:linear-gradient(#f4f4f4,#e8e8e8);border-top:1px solid #c4c4c4;border-bottom:1px solid #b8b8b8"></div>
<div style="position:absolute;left:1214px;top:130px;width:2px;height:26px;background:#c0c0c0"></div>
<div style="position:absolute;left:1274px;top:130px;width:2px;height:26px;background:#c0c0c0"></div>
<div style="position:absolute;left:1334px;top:130px;width:2px;height:26px;background:#c0c0c0"></div>
<div style="position:absolute;left:1394px;top:130px;width:2px;height:26px;background:#c0c0c0"></div>
<div style="position:absolute;left:1156px;top:156px;width:298px;height:642px;background:#fff;border-bottom:1px solid #c4c4c4"></div>
<div style="position:absolute;left:1161px;top:163px;width:16px;height:9px;background:#fff;border:1px solid #000"></div>
<div style="position:absolute;left:1161px;top:183px;width:16px;height:9px;background:#f00;border:1px solid #000"></div>
<div style="position:absolute;left:1161px;top:203px;width:16px;height:9px;background:#fff;border:1px solid #000"></div>
<div style="position:absolute;left:1161px;top:223px;width:16px;height:9px;background:#000;border:1px solid #000"></div>
<div style="position:absolute;left:0px;top:798px;width:1500px;height:46px;background:#dcdcdc"></div>
<div style="position:absolute;left:253px;top:802px;width:1px;height:40px;background:#8a8a8a"></div>
<div style="position:absolute;left:254px;top:802px;width:1px;height:40px;background:#f4f4f4"></div>
<div style="position:absolute;left:506.5px;top:819px;width:6px;height:6px;background:#c4c4c4;border-radius:3px"></div>
<div style="position:absolute;left:940.3px;top:818.6px;width:6px;height:6px;background:#c4c4c4;border-radius:3px"></div>
<div style="position:absolute;left:1269.7px;top:819px;width:6px;height:6px;background:#c4c4c4;border-radius:3px"></div>
<svg width="1500" height="844" style="position:absolute;left:0;top:0"><defs>
<linearGradient id="gBlue" x1="0" y1="0" x2="0" y2="1"><stop offset="0" stop-color="#9cc0ec"/><stop offset="0.5" stop-color="#6a9ee0"/><stop offset="1" stop-color="#78b0f0"/></linearGradient>
<linearGradient id="gFloppy" x1="0" y1="0" x2="1" y2="0"><stop offset="0" stop-color="#7cb4f8"/><stop offset="0.5" stop-color="#3c7ff0"/><stop offset="1" stop-color="#2f74ee"/></linearGradient>
<linearGradient id="gGreen" x1="0" y1="0" x2="0" y2="1"><stop offset="0" stop-color="#7ed66a"/><stop offset="1" stop-color="#1f9a2a"/></linearGradient>
<linearGradient id="gFolder" x1="0" y1="0" x2="0" y2="1"><stop offset="0" stop-color="#8cb8ea"/><stop offset="1" stop-color="#4f86cc"/></linearGradient>
<linearGradient id="gBtn" x1="0" y1="0" x2="0" y2="1"><stop offset="0" stop-color="#e6e6e6"/><stop offset="0.45" stop-color="#f4f4f4"/><stop offset="1" stop-color="#dcdcdc"/></linearGradient>
<linearGradient id="gBtnL" x1="0" y1="0" x2="0" y2="1"><stop offset="0" stop-color="#dedede"/><stop offset="0.5" stop-color="#f3f3f3"/><stop offset="1" stop-color="#ececec"/></linearGradient>
<radialGradient id="gGlow"><stop offset="0" stop-color="#ffffd0"/><stop offset="0.3" stop-color="#f8ec40"/><stop offset="0.7" stop-color="#ece020" stop-opacity="0.9"/><stop offset="1" stop-color="#ece020" stop-opacity="0"/></radialGradient>
<linearGradient id="gClip" x1="0" y1="0" x2="0" y2="1"><stop offset="0" stop-color="#c89450"/><stop offset="1" stop-color="#a87430"/></linearGradient>
<linearGradient id="gPrinter" x1="0" y1="0" x2="0" y2="1"><stop offset="0" stop-color="#f4f4f4"/><stop offset="1" stop-color="#b8b8b8"/></linearGradient>
</defs><rect x="7" y="32" width="2" height="2" fill="#8e8e8e"/><rect x="7" y="38" width="2" height="2" fill="#8e8e8e"/><rect x="7" y="44" width="2" height="2" fill="#8e8e8e"/><rect x="7" y="50" width="2" height="2" fill="#8e8e8e"/><rect x="7" y="56" width="2" height="2" fill="#8e8e8e"/><rect x="7" y="77" width="2" height="2" fill="#8e8e8e"/><rect x="7" y="83" width="2" height="2" fill="#8e8e8e"/><rect x="7" y="89" width="2" height="2" fill="#8e8e8e"/><rect x="7" y="95" width="2" height="2" fill="#8e8e8e"/><rect x="12" y="25" width="43" height="43" rx="5" fill="#b5b5b5"/><path d="M27.50 36.00 L27.50 52.80 L31.28 49.23 L34.01 55.53 L36.53 54.48 L33.80 48.39 L39.05 48.39Z" fill="#fff" stroke="#111" stroke-width="1.1" stroke-linejoin="round"/><rect x="15" y="73" width="43" height="31" rx="4.5" fill="url(#gBtn)" stroke="#8a8a8a" stroke-width="1.8"/><path d="M31.00 79.00 L31.00 94.20 L34.42 90.97 L36.89 96.67 L39.17 95.72 L36.70 90.21 L41.45 90.21Z" fill="#fff" stroke="#222" stroke-width="1.0" stroke-linejoin="round"/><rect x="187" y="26" width="1" height="1" fill="#6a6a6a"/><rect x="187" y="29" width="1" height="1" fill="#6a6a6a"/><rect x="187" y="32" width="1" height="1" fill="#6a6a6a"/><rect x="187" y="35" width="1" height="1" fill="#6a6a6a"/><rect x="187" y="38" width="1" height="1" fill="#6a6a6a"/><rect x="187" y="41" width="1" height="1" fill="#6a6a6a"/><rect x="187" y="44" width="1" height="1" fill="#6a6a6a"/><rect x="187" y="47" width="1" height="1" fill="#6a6a6a"/><rect x="187" y="50" width="1" height="1" fill="#6a6a6a"/><rect x="187" y="53" width="1" height="1" fill="#6a6a6a"/><rect x="187" y="56" width="1" height="1" fill="#6a6a6a"/><rect x="187" y="59" width="1" height="1" fill="#6a6a6a"/><rect x="187" y="62" width="1" height="1" fill="#6a6a6a"/><rect x="187" y="65" width="1" height="1" fill="#6a6a6a"/><rect x="289" y="26" width="1" height="1" fill="#6a6a6a"/><rect x="289" y="29" width="1" height="1" fill="#6a6a6a"/><rect x="289" y="32" width="1" height="1" fill="#6a6a6a"/><rect x="289" y="35" width="1" height="1" fill="#6a6a6a"/><rect x="289" y="38" width="1" height="1" fill="#6a6a6a"/><rect x="289" y="41" width="1" height="1" fill="#6a6a6a"/><rect x="289" y="44" width="1" height="1" fill="#6a6a6a"/><rect x="289" y="47" width="1" height="1" fill="#6a6a6a"/><rect x="289" y="50" width="1" height="1" fill="#6a6a6a"/><rect x="289" y="53" width="1" height="1" fill="#6a6a6a"/><rect x="289" y="56" width="1" height="1" fill="#6a6a6a"/><rect x="289" y="59" width="1" height="1" fill="#6a6a6a"/><rect x="289" y="62" width="1" height="1" fill="#6a6a6a"/><rect x="289" y="65" width="1" height="1" fill="#6a6a6a"/><rect x="345" y="26" width="1" height="1" fill="#6a6a6a"/><rect x="345" y="29" width="1" height="1" fill="#6a6a6a"/><rect x="345" y="32" width="1" height="1" fill="#6a6a6a"/><rect x="345" y="35" width="1" height="1" fill="#6a6a6a"/><rect x="345" y="38" width="1" height="1" fill="#6a6a6a"/><rect x="345" y="41" width="1" height="1" fill="#6a6a6a"/><rect x="345" y="44" width="1" height="1" fill="#6a6a6a"/><rect x="345" y="47" width="1" height="1" fill="#6a6a6a"/><rect x="345" y="50" width="1" height="1" fill="#6a6a6a"/><rect x="345" y="53" width="1" height="1" fill="#6a6a6a"/><rect x="345" y="56" width="1" height="1" fill="#6a6a6a"/><rect x="345" y="59" width="1" height="1" fill="#6a6a6a"/><rect x="345" y="62" width="1" height="1" fill="#6a6a6a"/><rect x="345" y="65" width="1" height="1" fill="#6a6a6a"/><rect x="502" y="26" width="1" height="1" fill="#6a6a6a"/><rect x="502" y="29" width="1" height="1" fill="#6a6a6a"/><rect x="502" y="32" width="1" height="1" fill="#6a6a6a"/><rect x="502" y="35" width="1" height="1" fill="#6a6a6a"/><rect x="502" y="38" width="1" height="1" fill="#6a6a6a"/><rect x="502" y="41" width="1" height="1" fill="#6a6a6a"/><rect x="502" y="44" width="1" height="1" fill="#6a6a6a"/><rect x="502" y="47" width="1" height="1" fill="#6a6a6a"/><rect x="502" y="50" width="1" height="1" fill="#6a6a6a"/><rect x="502" y="53" width="1" height="1" fill="#6a6a6a"/><rect x="502" y="56" width="1" height="1" fill="#6a6a6a"/><rect x="502" y="59" width="1" height="1" fill="#6a6a6a"/><rect x="502" y="62" width="1" height="1" fill="#6a6a6a"/><rect x="502" y="65" width="1" height="1" fill="#6a6a6a"/><rect x="558" y="26" width="1" height="1" fill="#6a6a6a"/><rect x="558" y="29" width="1" height="1" fill="#6a6a6a"/><rect x="558" y="32" width="1" height="1" fill="#6a6a6a"/><rect x="558" y="35" width="1" height="1" fill="#6a6a6a"/><rect x="558" y="38" width="1" height="1" fill="#6a6a6a"/><rect x="558" y="41" width="1" height="1" fill="#6a6a6a"/><rect x="558" y="44" width="1" height="1" fill="#6a6a6a"/><rect x="558" y="47" width="1" height="1" fill="#6a6a6a"/><rect x="558" y="50" width="1" height="1" fill="#6a6a6a"/><rect x="558" y="53" width="1" height="1" fill="#6a6a6a"/><rect x="558" y="56" width="1" height="1" fill="#6a6a6a"/><rect x="558" y="59" width="1" height="1" fill="#6a6a6a"/><rect x="558" y="62" width="1" height="1" fill="#6a6a6a"/><rect x="558" y="65" width="1" height="1" fill="#6a6a6a"/><rect x="854" y="26" width="1" height="1" fill="#6a6a6a"/><rect x="854" y="29" width="1" height="1" fill="#6a6a6a"/><rect x="854" y="32" width="1" height="1" fill="#6a6a6a"/><rect x="854" y="35" width="1" height="1" fill="#6a6a6a"/><rect x="854" y="38" width="1" height="1" fill="#6a6a6a"/><rect x="854" y="41" width="1" height="1" fill="#6a6a6a"/><rect x="854" y="44" width="1" height="1" fill="#6a6a6a"/><rect x="854" y="47" width="1" height="1" fill="#6a6a6a"/><rect x="854" y="50" width="1" height="1" fill="#6a6a6a"/><rect x="854" y="53" width="1" height="1" fill="#6a6a6a"/><rect x="854" y="56" width="1" height="1" fill="#6a6a6a"/><rect x="854" y="59" width="1" height="1" fill="#6a6a6a"/><rect x="854" y="62" width="1" height="1" fill="#6a6a6a"/><rect x="854" y="65" width="1" height="1" fill="#6a6a6a"/><rect x="911" y="26" width="1" height="1" fill="#6a6a6a"/><rect x="911" y="29" width="1" height="1" fill="#6a6a6a"/><rect x="911" y="32" width="1" height="1" fill="#6a6a6a"/><rect x="911" y="35" width="1" height="1" fill="#6a6a6a"/><rect x="911" y="38" width="1" height="1" fill="#6a6a6a"/><rect x="911" y="41" width="1" height="1" fill="#6a6a6a"/><rect x="911" y="44" width="1" height="1" fill="#6a6a6a"/><rect x="911" y="47" width="1" height="1" fill="#6a6a6a"/><rect x="911" y="50" width="1" height="1" fill="#6a6a6a"/><rect x="911" y="53" width="1" height="1" fill="#6a6a6a"/><rect x="911" y="56" width="1" height="1" fill="#6a6a6a"/><rect x="911" y="59" width="1" height="1" fill="#6a6a6a"/><rect x="911" y="62" width="1" height="1" fill="#6a6a6a"/><rect x="911" y="65" width="1" height="1" fill="#6a6a6a"/><rect x="67" y="71" width="1" height="1" fill="#6a6a6a"/><rect x="67" y="74" width="1" height="1" fill="#6a6a6a"/><rect x="67" y="77" width="1" height="1" fill="#6a6a6a"/><rect x="67" y="80" width="1" height="1" fill="#6a6a6a"/><rect x="67" y="83" width="1" height="1" fill="#6a6a6a"/><rect x="67" y="86" width="1" height="1" fill="#6a6a6a"/><rect x="67" y="89" width="1" height="1" fill="#6a6a6a"/><rect x="67" y="92" width="1" height="1" fill="#6a6a6a"/><rect x="67" y="95" width="1" height="1" fill="#6a6a6a"/><rect x="67" y="98" width="1" height="1" fill="#6a6a6a"/><rect x="67" y="101" width="1" height="1" fill="#6a6a6a"/><rect x="67" y="104" width="1" height="1" fill="#6a6a6a"/><rect x="88" y="32" width="2" height="2" fill="#959595"/><rect x="403" y="32" width="2" height="2" fill="#959595"/><rect x="708" y="32" width="2" height="2" fill="#959595"/><rect x="88" y="38" width="2" height="2" fill="#959595"/><rect x="403" y="38" width="2" height="2" fill="#959595"/><rect x="708" y="38" width="2" height="2" fill="#959595"/><rect x="88" y="44" width="2" height="2" fill="#959595"/><rect x="403" y="44" width="2" height="2" fill="#959595"/><rect x="708" y="44" width="2" height="2" fill="#959595"/><rect x="88" y="50" width="2" height="2" fill="#959595"/><rect x="403" y="50" width="2" height="2" fill="#959595"/><rect x="708" y="50" width="2" height="2" fill="#959595"/><rect x="88" y="56" width="2" height="2" fill="#959595"/><rect x="403" y="56" width="2" height="2" fill="#959595"/><rect x="708" y="56" width="2" height="2" fill="#959595"/><rect x="101.5" y="32.5" width="24" height="27" rx="1" fill="#f6f6f6" stroke="#8a8a8a" stroke-width="1"/><rect x="101" y="58.6" width="25" height="1.8" rx="0.8" fill="#9a9a9a"/><circle cx="121.7" cy="37.7" r="7.6" fill="url(#gGlow)"/><circle cx="121.7" cy="37.7" r="1.8" fill="#fffff0"/><path d="M144.8 35 L151 35 L151 56.5 L147 57 Z" fill="#a8a8a8" stroke="#707070" stroke-width="0.8"/><path d="M151.3 32.3 L173.2 32.3 L170.6 44 L148 56 Z" fill="#fbfbfb" stroke="#6a6a6a" stroke-width="0.9"/><path d="M154 36h16M153.5 38.5h16M153 41h16" stroke="#b0b0b0" stroke-width="1"/><path d="M151.4 43.1 L175.7 43.1 L171.5 57.5 L146.9 57.5 Z" fill="url(#gFolder)" stroke="#3d6eb0" stroke-width="0.8"/><rect x="203.7" y="33.7" width="23.6" height="24.2" rx="2.2" fill="url(#gFloppy)" stroke="#2226a8" stroke-width="1.4"/><rect x="206.8" y="34.4" width="17.6" height="11.4" fill="#f2f5ff"/><rect x="208.8" y="48" width="12" height="10" fill="#dcdde6"/><rect x="210.5" y="49.5" width="2" height="4.5" fill="#1a3cd0"/><rect x="249.7" y="33.7" width="23.6" height="24.2" rx="2.2" fill="url(#gFloppy)" stroke="#2226a8" stroke-width="1.4"/><rect x="252.8" y="34.4" width="17.6" height="11.4" fill="#f2f5ff"/><rect x="254.8" y="48" width="12" height="10" fill="#dcdde6"/><rect x="256.5" y="49.5" width="2" height="4.5" fill="#1a3cd0"/><path d="M262.5 51.5 L274 37.5 L277.8 40.8 L266.3 54.8 L261.3 56.5 Z" fill="#f0a030" stroke="#b04010" stroke-width="1"/><path d="M273.3 38.4 L275 36.2 L278.8 39.5 L277 41.6Z" fill="#e04040" stroke="#a02020" stroke-width="0.8"/><path d="M318 45.5 L311.4 39.6" stroke="#000" stroke-width="5.2" stroke-linecap="round"/><path d="M318 45.5 L318 36.6" stroke="#000" stroke-width="5.2" stroke-linecap="round"/><path d="M318 45.5 L324.6 39.6" stroke="#000" stroke-width="5.2" stroke-linecap="round"/><rect x="306" y="43.7" width="24.2" height="14.2" rx="3.2" fill="#000"/><path d="M318 45.5 L311.4 39.6" stroke="#f8a828" stroke-width="2.6" stroke-linecap="round"/><path d="M318 45.5 L318 36.6" stroke="#f8a828" stroke-width="2.6" stroke-linecap="round"/><path d="M318 45.5 L324.6 39.6" stroke="#f8a828" stroke-width="2.6" stroke-linecap="round"/><path d="M308 45.3 Q318 42.5 328.5 45.3" stroke="#f8a828" stroke-width="1.6" fill="none"/><text x="318.2" y="56.6" font-family="Liberation Sans" font-weight="bold" font-size="12" fill="#fff" text-anchor="middle" textLength="18.5" lengthAdjust="spacingAndGlyphs">SVG</text><rect x="364.5" y="32" width="18.5" height="14" rx="1.2" fill="#ececec" stroke="#a8a8a8" stroke-width="0.8"/><path d="M367 35h13M367 37.5h13M367 40h13" stroke="#c8c8c8" stroke-width="1"/><path d="M362.5 43 L385.5 43 Q387.7 43 387.7 45.2 L387.7 55.5 Q387.7 57.7 385.5 57.7 L362.5 57.7 Q360.2 57.7 360.2 55.5 L360.2 45.2 Q360.2 43 362.5 43Z" fill="url(#gPrinter)" stroke="#8c8c8c" stroke-width="0.8"/><path d="M361 50.5h26" stroke="#bdbdbd" stroke-width="1"/><path d="M361 56.5h26" stroke="#9a9a9a" stroke-width="1.2"/><path d="M374.5 45.5 L381.2 51.4" stroke="#6e6e6e" stroke-width="3.4" stroke-linecap="round"/><path d="M374.8 45.3 L381 50.8" stroke="#c8c8c8" stroke-width="1.2" stroke-linecap="round"/><circle cx="369.7" cy="40.9" r="6.9" fill="#f6f6f6" stroke="#c4c4c4" stroke-width="0.6"/><circle cx="369.7" cy="40.9" r="5.4" fill="url(#gBlue)" stroke="#4a7ed0" stroke-width="0.9"/><path d="M414.9 37.6 L418.5 42.4 C421 39.5 426 33.7 432 33.7 C438.5 33.7 443.3 38.8 443.3 45 C443.3 52 436 57.7 427.2 57.7 C432 56 438 51.5 438 45.4 C438 42.5 435.5 40.3 432 40.3 C428.5 40.3 425 43 422.4 46.3 L427.8 51.7 L414.9 51.7 Z" fill="url(#gGreen)" stroke="#17822a" stroke-width="0.9" stroke-linejoin="round"/><path d="M414.9 37.6 L418.5 42.4 C421 39.5 426 33.7 432 33.7 C438.5 33.7 443.3 38.8 443.3 45 C443.3 52 436 57.7 427.2 57.7 C432 56 438 51.5 438 45.4 C438 42.5 435.5 40.3 432 40.3 C428.5 40.3 425 43 422.4 46.3 L427.8 51.7 L414.9 51.7 Z" transform="translate(904.2 0) scale(-1 1)" fill="url(#gGreen)" stroke="#17822a" stroke-width="0.9" stroke-linejoin="round"/><ellipse cx="531" cy="57" rx="12" ry="1.5" fill="#f8f8f8" opacity="0.9"/><ellipse cx="526" cy="57" rx="5" ry="1.2" fill="#777" opacity="0.6"/><g transform="translate(531.35 45.1) rotate(-45.2)"><rect x="-12.85" y="-4.45" width="25.7" height="8.9" rx="0.8" fill="#d81a1a" stroke="#9a1010" stroke-width="0.6"/><rect x="-12.85" y="-1.4" width="25.7" height="2.8" fill="#fff"/><rect x="-12.85" y="-4.45" width="5.4" height="8.9" fill="#f0f0f0" stroke="#888" stroke-width="0.5"/><rect x="11.3" y="-4.45" width="1.6" height="8.9" fill="#555"/></g><path d="M588.3 45.8 L600.6 38 L601.2 41.2 L589.3 48.5Z" fill="#f4f4f4" stroke="#666" stroke-width="0.8"/><path d="M585.7 45.5 L588.5 31.2 L590.6 31 L589.6 47.5Z" fill="#f4f4f4" stroke="#666" stroke-width="0.8"/><ellipse cx="578.6" cy="47.8" rx="5" ry="3" fill="none" stroke="#e82020" stroke-width="2.6" transform="rotate(-12 578.6 47.8)"/><ellipse cx="589.2" cy="54.8" rx="3.1" ry="5.4" fill="none" stroke="#e82020" stroke-width="2.6" transform="rotate(-8 589.2 54.8)"/><path d="M583 46.5 L588 47.5 L589 50" stroke="#e82020" stroke-width="2" fill="none"/><path d="M573 57.3h6.4M576.2 54.1v6.4" stroke="#000" stroke-width="1.3"/><rect x="618.6" y="30.6" width="20.8" height="24.8" rx="1.5" fill="#f8f8f8" stroke="#b4b4b4" stroke-width="0.8"/><path d="M622 37.5h5M622 40h5M622 42.5h5M622 45h5M622 47.5h5" stroke="#c8c8c8" stroke-width="1"/><path d="M627.5 36.8 L646.5 36.8 Q647.8 36.8 647.8 38 L647.8 56 L642.5 61.1 L628.7 61.1 Q627.5 61.1 627.5 60 Z" fill="#fafafa" stroke="#8c8c8c" stroke-width="0.9"/><path d="M631.5 43.4h13.5M631.5 46h13M631.5 48.5h12M631.5 51.2h13.5" stroke="#c4c4c4" stroke-width="1"/><path d="M642.5 61.1 L642.5 56 L647.8 56Z" fill="#b8b8b8"/><path d="M619 56.6h6.4M622.2 53.4v6.4" stroke="#000" stroke-width="1.3"/><rect x="666.3" y="33.7" width="24.8" height="26" rx="1.2" fill="#fff" stroke="#c07e1a" stroke-width="2.4"/><path d="M672 40.5h13.5M672 43.3h13.5M672 45.8h12M672 48.4h13.5M672 51h9" stroke="#c8c8c8" stroke-width="1"/><path d="M683.5 58 L688.8 52.5 L688.8 58Z" fill="#b0b0b0"/><path d="M672.4 37.3 L672.4 34.5 L675 33.5 L675 30.8 L682.5 30.8 L682.5 33.5 L685.3 34.5 L685.3 37.3 Z" fill="#a4a49a" stroke="#6c6c64" stroke-width="0.7"/><path d="M723 56.3h22.5" stroke="#f01010" stroke-width="1.2"/><path d="M726.5 50.8 L739.8 36.5 Q742 34.6 744 36.6 Q745.6 38.6 743.6 40.5 L730.3 54.5 L723.8 55.5Z" fill="#e03220" stroke="#7a3a10" stroke-width="0.9"/><path d="M723.8 55.5 L726.5 50.8 L730.3 54.5Z" fill="#f0c8a0"/><path d="M738.5 37.8 L740.5 36 L744.6 40.2 L742.7 42Z" fill="#d8d8d8"/><rect x="765.9" y="35.8" width="28.6" height="21.2" rx="1" fill="#000080" stroke="#000030" stroke-width="1"/><path d="M769.2 53.8 L791.1 39.1 L791.1 53.8 Z" fill="none" stroke="#fff" stroke-width="1.3" stroke-dasharray="2.2 1.6"/><rect x="805" y="25" width="43" height="42" rx="5" fill="#b5b5b5"/><circle cx="826.1" cy="45.6" r="13" fill="none" stroke="#000" stroke-width="2"/><path d="M812.1 60.1 L840.1 32.1" stroke="#1030ff" stroke-width="1.1"/><rect x="862" y="25" width="43" height="42" rx="5" fill="#b5b5b5"/><rect x="870" y="33" width="2" height="2" fill="#000"/><rect x="870" y="41" width="2" height="2" fill="#000"/><rect x="870" y="49" width="2" height="2" fill="#000"/><rect x="870" y="57" width="2" height="2" fill="#000"/><rect x="878" y="33" width="2" height="2" fill="#000"/><rect x="878" y="41" width="2" height="2" fill="#000"/><rect x="878" y="49" width="2" height="2" fill="#000"/><rect x="878" y="57" width="2" height="2" fill="#000"/><rect x="886" y="33" width="2" height="2" fill="#000"/><rect x="886" y="41" width="2" height="2" fill="#000"/><rect x="886" y="49" width="2" height="2" fill="#000"/><rect x="886" y="57" width="2" height="2" fill="#000"/><rect x="894" y="33" width="2" height="2" fill="#000"/><rect x="894" y="41" width="2" height="2" fill="#000"/><rect x="894" y="49" width="2" height="2" fill="#000"/><rect x="894" y="57" width="2" height="2" fill="#000"/><ellipse cx="938.3" cy="55.7" rx="10.0" ry="2.5" fill="#000" opacity="0.08"/><path d="M945.5 51.1L952.9 57.900000000000006" stroke="#5c5c5c" stroke-width="4.2" stroke-linecap="round"/><path d="M946.0999999999999 50.900000000000006L952.3 56.7" stroke="#9a9a9a" stroke-width="1.2" stroke-linecap="round"/><circle cx="936.3" cy="41.7" r="11.2" fill="#f2f2ea" stroke="#a8a8a0" stroke-width="0.9"/><circle cx="936.3" cy="41.7" r="9.5" fill="url(#gBlue)" stroke="#8aa4c4" stroke-width="0.6"/><path d="M927.6999999999999 40.7A9.0 9.0 0 0 1 944.9 40.7" fill="#fff" opacity="0.18"/><path d="M930.5 41.7h11.6M936.3 35.9v11.6" stroke="#1c4aa0" stroke-width="5"/><path d="M931.3 41.7h10M936.3 36.7v10" stroke="#fff" stroke-width="3"/><ellipse cx="984.2" cy="55.7" rx="10.0" ry="2.5" fill="#000" opacity="0.08"/><path d="M991.4000000000001 51.1L998.8000000000001 57.900000000000006" stroke="#5c5c5c" stroke-width="4.2" stroke-linecap="round"/><path d="M992.0 50.900000000000006L998.2 56.7" stroke="#9a9a9a" stroke-width="1.2" stroke-linecap="round"/><circle cx="982.2" cy="41.7" r="11.2" fill="#f2f2ea" stroke="#a8a8a0" stroke-width="0.9"/><circle cx="982.2" cy="41.7" r="9.5" fill="url(#gBlue)" stroke="#8aa4c4" stroke-width="0.6"/><path d="M973.6 40.7A9.0 9.0 0 0 1 990.8000000000001 40.7" fill="#fff" opacity="0.18"/><path d="M976 41.7h12.4" stroke="#1c4aa0" stroke-width="4.5"/><path d="M976.8 41.7h10.8" stroke="#fff" stroke-width="2.5"/><ellipse cx="1030.2" cy="55.7" rx="10.0" ry="2.5" fill="#000" opacity="0.08"/><path d="M1037.4 51.1L1044.8 57.900000000000006" stroke="#5c5c5c" stroke-width="4.2" stroke-linecap="round"/><path d="M1038.0 50.900000000000006L1044.2 56.7" stroke="#9a9a9a" stroke-width="1.2" stroke-linecap="round"/><circle cx="1028.2" cy="41.7" r="11.2" fill="#f2f2ea" stroke="#a8a8a0" stroke-width="0.9"/><circle cx="1028.2" cy="41.7" r="9.5" fill="url(#gBlue)" stroke="#8aa4c4" stroke-width="0.6"/><path d="M1019.6 40.7A9.0 9.0 0 0 1 1036.8 40.7" fill="#fff" opacity="0.18"/><rect x="1024.2" y="37.7" width="8" height="8" fill="#a8c8f0" stroke="#fff" stroke-width="0.8"/><path d="M1022.2 39.5v-3.8h3.8M1030.4 35.7h3.8v3.8M1034.2 43.9v3.8h-3.8M1026.0 47.7h-3.8v-3.8" fill="none" stroke="#fff" stroke-width="1.6"/><ellipse cx="1076.2" cy="55.7" rx="10.0" ry="2.5" fill="#000" opacity="0.08"/><path d="M1083.4 51.1L1090.8 57.900000000000006" stroke="#5c5c5c" stroke-width="4.2" stroke-linecap="round"/><path d="M1084.0 50.900000000000006L1090.2 56.7" stroke="#9a9a9a" stroke-width="1.2" stroke-linecap="round"/><circle cx="1074.2" cy="41.7" r="11.2" fill="#f2f2ea" stroke="#a8a8a0" stroke-width="0.9"/><circle cx="1074.2" cy="41.7" r="9.5" fill="url(#gBlue)" stroke="#8aa4c4" stroke-width="0.6"/><path d="M1065.6000000000001 40.7A9.0 9.0 0 0 1 1082.8 40.7" fill="#fff" opacity="0.18"/><rect x="1070.2" y="37.7" width="8" height="8" fill="#a8c8f0"/><path d="M1068.2 39.5v-3.8h3.8M1076.4 35.7h3.8v3.8M1080.2 43.9v3.8h-3.8M1072.0 47.7h-3.8v-3.8" fill="none" stroke="#e00000" stroke-width="2.2"/><ellipse cx="1122.2" cy="55.7" rx="10.0" ry="2.5" fill="#000" opacity="0.08"/><path d="M1129.4 51.1L1136.8 57.900000000000006" stroke="#5c5c5c" stroke-width="4.2" stroke-linecap="round"/><path d="M1130.0 50.900000000000006L1136.2 56.7" stroke="#9a9a9a" stroke-width="1.2" stroke-linecap="round"/><circle cx="1120.2" cy="41.7" r="11.2" fill="#f2f2ea" stroke="#a8a8a0" stroke-width="0.9"/><circle cx="1120.2" cy="41.7" r="9.5" fill="url(#gBlue)" stroke="#8aa4c4" stroke-width="0.6"/><path d="M1111.6000000000001 40.7A9.0 9.0 0 0 1 1128.8 40.7" fill="#fff" opacity="0.18"/><path d="M1113.2 41.7 L1118.7 36.5 L1118.7 39.5 L1126.2 39.5 L1126.2 44 L1118.7 44 L1118.7 47Z" fill="#fff" stroke="#3a66b0" stroke-width="0.6"/><rect x="1154.5" y="30.8" width="27" height="17.4" rx="1.5" fill="#fcfcfc" stroke="#6e94d0" stroke-width="1"/><ellipse cx="1169.98" cy="56.46" rx="8.4" ry="2.1" fill="#000" opacity="0.08"/><path d="M1176.028 52.596000000000004L1182.244 58.308" stroke="#5c5c5c" stroke-width="3.528" stroke-linecap="round"/><path d="M1176.532 52.428000000000004L1181.74 57.300000000000004" stroke="#9a9a9a" stroke-width="1.008" stroke-linecap="round"/><circle cx="1168.3" cy="44.7" r="9.408" fill="#f2f2ea" stroke="#a8a8a0" stroke-width="0.9"/><circle cx="1168.3" cy="44.7" r="7.9799999999999995" fill="url(#gBlue)" stroke="#8aa4c4" stroke-width="0.6"/><path d="M1161.076 43.86A7.56 7.56 0 0 1 1175.524 43.86" fill="#fff" opacity="0.18"/><ellipse cx="1214.94" cy="56.58" rx="9.7" ry="2.425" fill="#000" opacity="0.08"/><path d="M1221.924 52.118L1229.102 58.714" stroke="#5c5c5c" stroke-width="4.074" stroke-linecap="round"/><path d="M1222.506 51.924L1228.52 57.55" stroke="#9a9a9a" stroke-width="1.164" stroke-linecap="round"/><circle cx="1213" cy="43" r="10.863999999999999" fill="#f2f2ea" stroke="#a8a8a0" stroke-width="0.9"/><circle cx="1213" cy="43" r="9.215" fill="url(#gBlue)" stroke="#8aa4c4" stroke-width="0.6"/><path d="M1204.658 42.03A8.73 8.73 0 0 1 1221.342 42.03" fill="#fff" opacity="0.18"/><rect x="1211.3" y="41.3" width="3.4" height="3.4" fill="#9cc0ec"/><g transform="rotate(0 1213 43)"><path d="M1213 29.8L1217.2 35.4H1214.7V40.8H1211.3V35.4H1208.8Z" fill="#fff" stroke="#2f6cd0" stroke-width="0.9" stroke-linejoin="round"/></g><g transform="rotate(90 1213 43)"><path d="M1213 29.8L1217.2 35.4H1214.7V40.8H1211.3V35.4H1208.8Z" fill="#fff" stroke="#2f6cd0" stroke-width="0.9" stroke-linejoin="round"/></g><g transform="rotate(180 1213 43)"><path d="M1213 29.8L1217.2 35.4H1214.7V40.8H1211.3V35.4H1208.8Z" fill="#fff" stroke="#2f6cd0" stroke-width="0.9" stroke-linejoin="round"/></g><g transform="rotate(270 1213 43)"><path d="M1213 29.8L1217.2 35.4H1214.7V40.8H1211.3V35.4H1208.8Z" fill="#fff" stroke="#2f6cd0" stroke-width="0.9" stroke-linejoin="round"/></g><circle cx="439" cy="56.8" r="35" fill="#c8d8ec" fill-opacity="0.12" stroke="#a4b8d0" stroke-opacity="0.45" stroke-width="5"/><circle cx="439" cy="56.8" r="36.5" fill="none" stroke="#8aa2c0" stroke-opacity="0.35" stroke-width="1.2"/><circle cx="439" cy="56.8" r="33" fill="none" stroke="#b8c8dc" stroke-opacity="0.35" stroke-width="1"/><path d="M439.00 56.00 L439.00 79.20 L444.22 74.27 L447.99 82.97 L451.47 81.52 L447.70 73.11 L454.95 73.11Z" fill="#fff" stroke="#000" stroke-width="1.2" stroke-linejoin="round"/><rect x="7" y="116" width="2" height="2" fill="#959595"/><rect x="13" y="116" width="2" height="2" fill="#959595"/><rect x="19" y="116" width="2" height="2" fill="#959595"/><rect x="25" y="116" width="2" height="2" fill="#959595"/><rect x="31" y="116" width="2" height="2" fill="#959595"/><rect x="37" y="116" width="2" height="2" fill="#959595"/><rect x="43" y="116" width="2" height="2" fill="#959595"/><rect x="49" y="116" width="2" height="2" fill="#959595"/><rect x="55" y="116" width="2" height="2" fill="#959595"/><rect x="61" y="116" width="2" height="2" fill="#959595"/><rect x="1.5" y="122.5" width="34" height="34" fill="url(#gBtnL)" stroke="#8e8e8e" stroke-width="1"/><path d="M31.5 147.5V152H27Z" fill="#000"/><rect x="36.5" y="122.5" width="34" height="34" fill="url(#gBtnL)" stroke="#8e8e8e" stroke-width="1"/><path d="M66.5 147.5V152H62Z" fill="#000"/><path d="M8 131.2h7M11.5 127.7v7M21.8 140.2h7M25.3 136.7v7M8.8 146.5h7M12.3 143v7" stroke="#111" stroke-width="1.2"/><path d="M41.8 144.8L65 133.7" stroke="#222" stroke-width="1.1"/><rect x="1.5" y="157.5" width="34" height="34" fill="url(#gBtnL)" stroke="#8e8e8e" stroke-width="1"/><path d="M31.5 182.5V187H27Z" fill="#000"/><rect x="36.5" y="157.5" width="34" height="34" fill="url(#gBtnL)" stroke="#8e8e8e" stroke-width="1"/><path d="M66.5 182.5V187H62Z" fill="#000"/><path d="M7.6 183.3A20.5 20.5 0 0 1 27.6 163.6" fill="none" stroke="#222" stroke-width="1.1"/><circle cx="52.3" cy="173.4" r="10" fill="none" stroke="#222" stroke-width="1.1"/><rect x="1.5" y="192.5" width="34" height="34" fill="url(#gBtnL)" stroke="#8e8e8e" stroke-width="1"/><path d="M31.5 217.5V222H27Z" fill="#000"/><rect x="36.5" y="192.5" width="34" height="34" fill="url(#gBtnL)" stroke="#8e8e8e" stroke-width="1"/><path d="M66.5 217.5V222H62Z" fill="#000"/><ellipse cx="17.9" cy="208.9" rx="12.6" ry="5.6" transform="rotate(-40 17.9 208.9)" fill="none" stroke="#222" stroke-width="1.1"/><path d="M42.3 201.5C41.5 206 46 217.8 49 218C52 218.2 54 206 58 201C61 198 64.5 199.5 64.3 207C64.2 211 62 211.5 59.5 209.5C55 206 48 199 44.5 199C43 199 42.5 200 42.3 201.5Z" fill="none" stroke="#222" stroke-width="1.1"/><rect x="1.5" y="227.5" width="34" height="34" fill="url(#gBtnL)" stroke="#8e8e8e" stroke-width="1"/><path d="M31.5 252.5V257H27Z" fill="#000"/><rect x="36.5" y="227.5" width="34" height="34" fill="url(#gBtnL)" stroke="#8e8e8e" stroke-width="1"/><path d="M66.5 252.5V257H62Z" fill="#000"/><path d="M14.5 238.8A4.7 4.7 0 0 0 14.5 248.2H27.7" fill="none" stroke="#222" stroke-width="1.1"/><path d="M43.8 232.5H51L54.6 237.6L51 242.7H43.8L40.2 237.6Z" fill="none" stroke="#222" stroke-width="1"/><path d="M60.6 236L65.8 245.3H55.4Z" fill="none" stroke="#222" stroke-width="1"/><rect x="41.3" y="248.8" width="14.5" height="6.8" fill="none" stroke="#222" stroke-width="1"/><rect x="1.5" y="262.5" width="34" height="34" fill="url(#gBtnL)" stroke="#8e8e8e" stroke-width="1"/><path d="M31.5 287.5V292H27Z" fill="#000"/><defs><pattern id="hatch" width="3" height="3" patternUnits="userSpaceOnUse" patternTransform="rotate(45)"><rect width="3" height="3" fill="#f4f4f4"/><path d="M0 0V3" stroke="#555" stroke-width="0.9"/></pattern></defs><path d="M7.8 286.3V277L12.3 272.3H28.4V286.3Z" fill="url(#hatch)" stroke="#222" stroke-width="1.1"/><circle cx="20.6" cy="279.5" r="3" fill="#f4f4f4" stroke="#222" stroke-width="1"/><rect x="1.5" y="305.5" width="34" height="34" fill="url(#gBtnL)" stroke="#8e8e8e" stroke-width="1"/><rect x="36.5" y="305.5" width="34" height="34" fill="url(#gBtnL)" stroke="#8e8e8e" stroke-width="1"/><path d="M66.5 330.5V335H62Z" fill="#000"/><text x="18" y="331.7" font-family="Liberation Serif" font-size="28" fill="#111" text-anchor="middle">A</text><path d="M43.5 314V330M61.5 314V330M44.5 316.5H60.5" stroke="#222" stroke-width="1.2"/><path d="M44 316.5L47.5 314.8V318.2ZM61 316.5L57.5 314.8V318.2Z" fill="#222"/><rect x="1.5" y="340.5" width="34" height="34" fill="url(#gBtnL)" stroke="#8e8e8e" stroke-width="1"/><rect x="7" y="348.8" width="21.6" height="16.2" fill="#fff" stroke="#222" stroke-width="1.4"/><path d="M9.8 362.3V358.3L13 355.3L16 358L20.5 353.3L26.3 359V362.3Z" fill="#111"/><circle cx="24.6" cy="352.2" r="1.6" fill="#111"/><rect x="1.5" y="383.5" width="34" height="34" fill="url(#gBtnL)" stroke="#8e8e8e" stroke-width="1"/><path d="M31.5 408.5V413H27Z" fill="#000"/><rect x="36.5" y="383.5" width="34" height="34" fill="url(#gBtnL)" stroke="#8e8e8e" stroke-width="1"/><path d="M5.5 393.3V412.5H24.3Z" fill="#fff" stroke="#111" stroke-width="1.1"/><path d="M9.6 401.5V408.3H16.2Z" fill="#fff" stroke="#111" stroke-width="1"/><path d="M10.2 388.5L18.5 396.5" stroke="#b02010" stroke-width="3.6" stroke-linecap="round"/><path d="M10.2 388.5L18.5 396.5" stroke="#e83a30" stroke-width="2.4" stroke-linecap="round"/><path d="M18.3 396.3L20.5 398.3" stroke="#444" stroke-width="1.2"/><path d="M22.8 405.5L25.7 389.5L29 405.5" fill="none" stroke="#111" stroke-width="1.2"/><path d="M25.7 387v3" stroke="#111" stroke-width="1.2"/><circle cx="25.7" cy="390.5" r="1.3" fill="#111"/><rect x="41.4" y="395.3" width="23.2" height="8.6" rx="1.5" fill="#fafafa" stroke="#555" stroke-width="0.9"/><path d="M43.5 396v2.8M45.5 396v1.6M47.5 396v2.8M49.5 396v1.6M51.5 396v2.8M53.5 396v1.6M55.5 396v2.8M57.5 396v1.6M59.5 396v2.8M61.5 396v1.6M63.5 396v2.8" stroke="#333" stroke-width="0.6"/><rect x="1.5" y="418.5" width="34" height="34" fill="url(#gBtnL)" stroke="#8e8e8e" stroke-width="1"/><rect x="36.5" y="418.5" width="34" height="34" fill="url(#gBtnL)" stroke="#8e8e8e" stroke-width="1"/><path d="M66.5 443.5V448H62Z" fill="#000"/><rect x="7.5" y="425.6" width="17" height="12" fill="#fff0c4" stroke="#222" stroke-width="1"/><circle cx="22.2" cy="436.8" r="6.8" fill="#fff0c4" fill-opacity="0.85" stroke="#222" stroke-width="1"/><path d="M7.5 425.6V437.6H24.5" fill="none" stroke="#222" stroke-width="1"/><circle cx="7.6" cy="438" r="1.5" fill="#f02020"/><path d="M41.5 433.8L59.2 423.5" stroke="#f02a2a" stroke-width="1.2"/><path d="M51.20 428.60 L51.20 443.32 L54.51 440.19 L56.90 445.71 L59.11 444.79 L56.72 439.46 L61.32 439.46Z" fill="#f4f4f4" stroke="#555" stroke-width="0.9" stroke-linejoin="round"/><rect x="1.5" y="461.5" width="34" height="34" fill="url(#gBtnL)" stroke="#8e8e8e" stroke-width="1"/><path d="M31.5 486.5V491H27Z" fill="#000"/><path d="M7.5 474.5L19.3 468L28.5 473.5L16.8 480ZM7.5 474.5V488L16.8 493.5V480M28.5 473.5V487L16.8 493.5" fill="none" stroke="#222" stroke-width="1.1" stroke-linejoin="round"/><circle cx="1164" cy="118" r="7" fill="#6c6c6c"/><path d="M1161 115L1167 121M1167 115L1161 121" stroke="#e8e8e8" stroke-width="2"/><circle cx="1182" cy="118" r="7" fill="#6c6c6c"/><rect x="1180.5" y="113.8" width="5" height="4.5" fill="none" stroke="#e8e8e8" stroke-width="1.1"/><rect x="1178.5" y="116.3" width="5" height="4.5" fill="#6c6c6c" stroke="#e8e8e8" stroke-width="1.1"/><path d="M1177.4 143.3C1180 136.70000000000002 1190 136.70000000000002 1192.6 143.3C1190 149.70000000000002 1180 149.70000000000002 1177.4 143.3Z" fill="#000"/><path d="M1180 143.60000000000002C1182 147.70000000000002 1188 147.70000000000002 1190 143.60000000000002C1188 142.10000000000002 1182 142.10000000000002 1180 143.60000000000002Z" fill="#fff"/><circle cx="1185" cy="142.70000000000002" r="2.6" fill="#000"/><circle cx="1184.4" cy="142.10000000000002" r="0.7" fill="#fff"/><path d="M1237.4 143.3C1240 136.70000000000002 1250 136.70000000000002 1252.6 143.3C1250 149.70000000000002 1240 149.70000000000002 1237.4 143.3Z" fill="#b0b0b0"/><path d="M1240 143.60000000000002C1242 147.70000000000002 1248 147.70000000000002 1250 143.60000000000002C1248 142.10000000000002 1242 142.10000000000002 1240 143.60000000000002Z" fill="#f0f0f0"/><circle cx="1245" cy="142.70000000000002" r="2.6" fill="#b0b0b0"/><circle cx="1244.4" cy="142.10000000000002" r="0.7" fill="#f0f0f0"/><path d="M1299 143.2h12M1305 137.2v12" stroke="#e80000" stroke-width="3.2"/><path d="M1359 143.3h12" stroke="#e80000" stroke-width="3.2"/><path d="M1418 150L1431.5 136.5" stroke="#8a5a10" stroke-width="3.4" stroke-linecap="butt"/><path d="M1418.3 149.7L1431.5 136.5" stroke="#f0b040" stroke-width="2.4"/><path d="M1429.07 138.93L1431.5 136.5" stroke="#e02020" stroke-width="3.0"/><path d="M1418 150L1420.025 147.975" stroke="#f4d8a8" stroke-width="2.0"/><path d="M1415.4 166.6C1418 160.0 1428 160.0 1430.6 166.6C1428 173.0 1418 173.0 1415.4 166.6Z" fill="#000"/><path d="M1418 166.9C1420 171.0 1426 171.0 1428 166.9C1426 165.4 1420 165.4 1418 166.9Z" fill="#fff"/><circle cx="1423" cy="166.0" r="2.6" fill="#000"/><circle cx="1422.4" cy="165.4" r="0.7" fill="#fff"/><path d="M1441.8 166.0V164.0A3.2 3.2 0 0 1 1448.2 164.0V166.0" fill="none" stroke="#b8b8b8" stroke-width="1.6"/><rect x="1440" y="165.8" width="10" height="8" fill="#b8b8b8"/><path d="M1415.4 186.6C1418 180.0 1428 180.0 1430.6 186.6C1428 193.0 1418 193.0 1415.4 186.6Z" fill="#000"/><path d="M1418 186.9C1420 191.0 1426 191.0 1428 186.9C1426 185.4 1420 185.4 1418 186.9Z" fill="#fff"/><circle cx="1423" cy="186.0" r="2.6" fill="#000"/><circle cx="1422.4" cy="185.4" r="0.7" fill="#fff"/><path d="M1441.8 186.0V184.0A3.2 3.2 0 0 1 1448.2 184.0V186.0" fill="none" stroke="#b8b8b8" stroke-width="1.6"/><rect x="1440" y="185.8" width="10" height="8" fill="#b8b8b8"/><path d="M1415.4 206.6C1418 200.0 1428 200.0 1430.6 206.6C1428 213.0 1418 213.0 1415.4 206.6Z" fill="#000"/><path d="M1418 206.9C1420 211.0 1426 211.0 1428 206.9C1426 205.4 1420 205.4 1418 206.9Z" fill="#fff"/><circle cx="1423" cy="206.0" r="2.6" fill="#000"/><circle cx="1422.4" cy="205.4" r="0.7" fill="#fff"/><path d="M1441.8 206.0V204.0A3.2 3.2 0 0 1 1448.2 204.0V206.0" fill="none" stroke="#b8b8b8" stroke-width="1.6"/><rect x="1440" y="205.8" width="10" height="8" fill="#b8b8b8"/><path d="M1415.4 226.6C1418 220.0 1428 220.0 1430.6 226.6C1428 233.0 1418 233.0 1415.4 226.6Z" fill="#000"/><path d="M1418 226.9C1420 231.0 1426 231.0 1428 226.9C1426 225.4 1420 225.4 1418 226.9Z" fill="#fff"/><circle cx="1423" cy="226.0" r="2.6" fill="#000"/><circle cx="1422.4" cy="225.4" r="0.7" fill="#fff"/><path d="M1441.8 226.0V224.0A3.2 3.2 0 0 1 1448.2 224.0V226.0" fill="none" stroke="#b8b8b8" stroke-width="1.6"/><rect x="1440" y="225.8" width="10" height="8" fill="#b8b8b8"/><path d="M1396 211.5L1407.5 200.5" stroke="#8a5a10" stroke-width="3.3" stroke-linecap="butt"/><path d="M1396.3 211.2L1407.5 200.5" stroke="#f0b040" stroke-width="2.3"/><path d="M1405.43 202.48L1407.5 200.5" stroke="#e02020" stroke-width="2.9"/><path d="M1396 211.5L1397.725 209.85" stroke="#f4d8a8" stroke-width="1.9"/><rect x="1462" y="116" width="2" height="2" fill="#9a9a9a"/><rect x="1468" y="116" width="2" height="2" fill="#9a9a9a"/><rect x="1474" y="116" width="2" height="2" fill="#9a9a9a"/><rect x="1480" y="116" width="2" height="2" fill="#9a9a9a"/><rect x="1486" y="116" width="2" height="2" fill="#9a9a9a"/><rect x="1456" y="120" width="43" height="42.4" rx="5" fill="#b4b4b4"/><rect x="1456" y="417" width="43" height="43" rx="5" fill="#b4b4b4"/><rect x="1457" y="261" width="1" height="1" fill="#777"/><rect x="1460" y="261" width="1" height="1" fill="#777"/><rect x="1463" y="261" width="1" height="1" fill="#777"/><rect x="1466" y="261" width="1" height="1" fill="#777"/><rect x="1469" y="261" width="1" height="1" fill="#777"/><rect x="1472" y="261" width="1" height="1" fill="#777"/><rect x="1475" y="261" width="1" height="1" fill="#777"/><rect x="1478" y="261" width="1" height="1" fill="#777"/><rect x="1481" y="261" width="1" height="1" fill="#777"/><rect x="1484" y="261" width="1" height="1" fill="#777"/><rect x="1487" y="261" width="1" height="1" fill="#777"/><rect x="1490" y="261" width="1" height="1" fill="#777"/><rect x="1493" y="261" width="1" height="1" fill="#777"/><rect x="1496" y="261" width="1" height="1" fill="#777"/><rect x="1457" y="409" width="1" height="1" fill="#777"/><rect x="1460" y="409" width="1" height="1" fill="#777"/><rect x="1463" y="409" width="1" height="1" fill="#777"/><rect x="1466" y="409" width="1" height="1" fill="#777"/><rect x="1469" y="409" width="1" height="1" fill="#777"/><rect x="1472" y="409" width="1" height="1" fill="#777"/><rect x="1475" y="409" width="1" height="1" fill="#777"/><rect x="1478" y="409" width="1" height="1" fill="#777"/><rect x="1481" y="409" width="1" height="1" fill="#777"/><rect x="1484" y="409" width="1" height="1" fill="#777"/><rect x="1487" y="409" width="1" height="1" fill="#777"/><rect x="1490" y="409" width="1" height="1" fill="#777"/><rect x="1493" y="409" width="1" height="1" fill="#777"/><rect x="1496" y="409" width="1" height="1" fill="#777"/><rect x="1463.5" y="127.5" width="27" height="27" fill="#fff" stroke="#111" stroke-width="1"/><rect x="1463" y="127" width="28" height="4.5" fill="#000"/><rect x="1464.5" y="128.2" width="3" height="3" fill="#fff"/><path d="M1470.5 136.5L1475 134.3V148L1470.5 150Z" fill="#9a9a9a" stroke="#444" stroke-width="0.7"/><path d="M1473.5 135.5L1483.5 131.5V144.5L1473.5 148.5Z" fill="#fff" stroke="#555" stroke-width="0.7"/><path d="M1476 146L1481 135.5L1481.5 143.5Z" fill="none" stroke="#f03030" stroke-width="0.9"/><rect x="1463.5" y="174.5" width="27" height="27" fill="#fff" stroke="#111" stroke-width="1"/><rect x="1463" y="174" width="28" height="4.5" fill="#000"/><rect x="1464.5" y="175.2" width="3" height="3" fill="#fff"/><rect x="1470.5" y="184" width="11" height="8" fill="#fff0c4" stroke="#333" stroke-width="0.8"/><circle cx="1479" cy="191.5" r="4.5" fill="#fff0c4" fill-opacity="0.85" stroke="#333" stroke-width="0.8"/><rect x="1463.5" y="220.5" width="27" height="27" fill="#fff" stroke="#111" stroke-width="1"/><rect x="1463" y="220" width="28" height="4.5" fill="#000"/><rect x="1464.5" y="221.2" width="3" height="3" fill="#fff"/><rect x="1468.5" y="227" width="17" height="11" rx="2" fill="#f2f2f2" stroke="#b4c4dc" stroke-width="0.8"/><rect x="1463.5" y="276.5" width="27" height="27" fill="#fff" stroke="#111" stroke-width="1"/><rect x="1463" y="276" width="28" height="4.5" fill="#000"/><rect x="1464.5" y="277.2" width="3" height="3" fill="#fff"/><rect x="1466" y="283" width="3.5" height="2.6" fill="#000"/><rect x="1466" y="288.4" width="3.5" height="2.6" fill="#000"/><rect x="1466" y="293.8" width="3.5" height="2.6" fill="#000"/><rect x="1472.5" y="283" width="15" height="2.6" fill="none" stroke="#333" stroke-width="0.7"/><rect x="1472.5" y="288.4" width="15" height="2.6" fill="none" stroke="#333" stroke-width="0.7"/><rect x="1472.5" y="293.8" width="15" height="2.6" fill="none" stroke="#333" stroke-width="0.7"/><rect x="1463.5" y="322.5" width="27" height="27" fill="#fff" stroke="#111" stroke-width="1"/><rect x="1463" y="322" width="28" height="4.5" fill="#000"/><rect x="1464.5" y="323.2" width="3" height="3" fill="#fff"/><path d="M1469.5 335Q1477 330 1484.5 335L1478.5 341V348L1476 346.5V341Z" fill="#a8a8a8" stroke="#333" stroke-width="0.7"/><ellipse cx="1477" cy="335" rx="7.5" ry="1.8" fill="#707070"/><rect x="1463.5" y="368.1" width="27" height="27" fill="#fff" stroke="#111" stroke-width="1"/><rect x="1463" y="367.6" width="28" height="4.5" fill="#000"/><rect x="1464.5" y="368.8" width="3" height="3" fill="#fff"/><path d="M1470.5 376L1474.5 380V387L1470.5 391Z" fill="#f4f4f4" stroke="#333" stroke-width="0.8"/><rect x="1474.5" y="380" width="9.5" height="7.5" rx="1.5" fill="#c0c0c0" stroke="#555" stroke-width="0.7"/><path d="M1467.5 383.8H1487" stroke="#f08080" stroke-width="0.6" stroke-dasharray="1.5 1"/><rect x="1463.5" y="424.5" width="27" height="27" fill="#fff" stroke="#111" stroke-width="1"/><rect x="1463" y="424" width="28" height="4.5" fill="#000"/><rect x="1464.5" y="425.2" width="3" height="3" fill="#fff"/><path d="M1466 431.5h10M1466 434h9M1466 436.5h11M1466 439h11" stroke="#a0a0a0" stroke-width="0.6"/><path d="M1463.5 446.5H1490.5" stroke="#111" stroke-width="0.8"/><path d="M1473 449h14" stroke="#888" stroke-width="0.8"/><rect x="1463.5" y="471.0" width="27" height="27" fill="#fff" stroke="#111" stroke-width="1"/><rect x="1463" y="470.5" width="28" height="4.5" fill="#000"/><rect x="1464.5" y="471.7" width="3" height="3" fill="#fff"/><rect x="1471" y="479.5" width="12" height="13.5" rx="0.8" fill="#fff" stroke="#c07e1a" stroke-width="1.6"/><rect x="1474" y="477.8" width="6" height="2.6" fill="#909090"/><path d="M1473.5 483h7M1473.5 485h7M1473.5 487h7" stroke="#c8c8c8" stroke-width="0.6"/><circle cx="102.2" cy="118.8" r="5.8" fill="#f4f4f4" stroke="#2a4690" stroke-width="2.1"/><path d="M98.5 118.5h7M102 115v7" stroke="#d06060" stroke-width="0.5"/><path d="M102 118.5L107.5 124" stroke="#f0b020" stroke-width="1.8"/><circle cx="107.6" cy="124.2" r="1" fill="#d05050"/><rect x="1133.5" y="780.5" width="13" height="9.5" fill="#f2f2f2" stroke="#222" stroke-width="1"/><rect x="1133" y="780" width="14" height="2.6" fill="#111"/><rect x="1143" y="780.7" width="1.2" height="1.2" fill="#fff"/><path d="M726 806.2C721 806.2 717.8 810 717.8 815V826.5C717.8 831.5 721.5 835 726 835C730.5 835 734.2 831.5 734.2 826.5V815C734.2 810 731 806.2 726 806.2Z" fill="#fff" stroke="#333" stroke-width="0.9"/><path d="M717.8 818.5H734.2M726 806.2V818.5" stroke="#333" stroke-width="0.8"/><rect x="724.4" y="808.5" width="3.2" height="6.5" rx="1.6" fill="#fff" stroke="#333" stroke-width="0.8"/><g font-family="Liberation Sans"><text x="13.13" y="15.9" font-size="14" fill="#1c1c1c" textLength="22.01" lengthAdjust="spacingAndGlyphs">Fájl</text><text x="46.99" y="15.9" font-size="14" fill="#1c1c1c" textLength="76.96" lengthAdjust="spacingAndGlyphs">Szerkesztés</text><text x="136.80" y="15.9" font-size="14" fill="#1c1c1c" textLength="97.43" lengthAdjust="spacingAndGlyphs">A megtekintése</text><text x="247.40" y="15.9" font-size="14" fill="#1c1c1c" textLength="117.49" lengthAdjust="spacingAndGlyphs">Válassza ki a címet</text><text x="377.29" y="15.9" font-size="14" fill="#1c1c1c" textLength="39.22" lengthAdjust="spacingAndGlyphs">Rajzol</text><text x="427.28" y="15.9" font-size="14" fill="#1c1c1c" textLength="59.28" lengthAdjust="spacingAndGlyphs">Dimenzió</text><text x="498.49" y="15.9" font-size="14" fill="#1c1c1c" textLength="115.59" lengthAdjust="spacingAndGlyphs">Módosítsa a címet</text><text x="627.00" y="15.9" font-size="14" fill="#1c1c1c" textLength="32.59" lengthAdjust="spacingAndGlyphs">Snap</text><text x="671.00" y="15.9" font-size="14" fill="#1c1c1c" textLength="25.20" lengthAdjust="spacingAndGlyphs">Infó</text><text x="707.28" y="15.9" font-size="14" fill="#1c1c1c" textLength="37.99" lengthAdjust="spacingAndGlyphs">Réteg</text><text x="756.49" y="15.9" font-size="14" fill="#1c1c1c" textLength="34.54" lengthAdjust="spacingAndGlyphs">Blokk</text><text x="805.00" y="15.9" font-size="14" fill="#1c1c1c" textLength="34.02" lengthAdjust="spacingAndGlyphs">Ablak</text><text x="851.28" y="15.9" font-size="14" fill="#1c1c1c" textLength="40.32" lengthAdjust="spacingAndGlyphs">Egyéb</text><text x="903.80" y="15.9" font-size="14" fill="#1c1c1c" textLength="55.05" lengthAdjust="spacingAndGlyphs">Segítség</text><text x="582.39" y="123.9" font-size="11.2" fill="#1e1e1e" textLength="98.37" lengthAdjust="spacingAndGlyphs">* bond_washer.dxf</text><text x="1118.62" y="744.8" font-size="12.5" fill="#111" textLength="34.48" lengthAdjust="spacingAndGlyphs">1 &lt; 10</text><text x="76.33" y="762.8" font-size="13" fill="#111" textLength="37.14" lengthAdjust="spacingAndGlyphs">Undo:</text><text x="72.49" y="789.8" font-size="13" fill="#111" textLength="51.93" lengthAdjust="spacingAndGlyphs">Parancs:</text><text x="1295.27" y="122.9" font-size="11.5" fill="#262626" textLength="52.97" lengthAdjust="spacingAndGlyphs">Réteglista</text><text x="1183.06" y="171.5" font-size="12.6" fill="#111" textLength="7.59" lengthAdjust="spacingAndGlyphs">0</text><text x="1182.53" y="191.4" font-size="12.6" fill="#111" textLength="49.41" lengthAdjust="spacingAndGlyphs">Központ</text><text x="1182.52" y="211.2" font-size="12.6" fill="#111" textLength="45.57" lengthAdjust="spacingAndGlyphs">Látható</text><text x="1182.52" y="231" font-size="12.6" fill="#111" textLength="39.41" lengthAdjust="spacingAndGlyphs">Rejtett</text><text x="1.78" y="815.8" font-size="9.7" fill="#1e1e1e" textLength="75.47" lengthAdjust="spacingAndGlyphs">61.9787,22.4261</text><text x="1.59" y="836" font-size="9.7" fill="#1e1e1e" textLength="83.89" lengthAdjust="spacingAndGlyphs">@53.9787,12.4261</text><text x="255.77" y="815.7" font-size="9.7" fill="#1e1e1e" textLength="57.84" lengthAdjust="spacingAndGlyphs">65.9112&lt;20°</text><text x="255.57" y="836" font-size="9.7" fill="#1e1e1e" textLength="68.31" lengthAdjust="spacingAndGlyphs">@55.3905&lt;13°</text><text x="556.76" y="820" font-size="9.6" fill="#1e1e1e" textLength="141.18" lengthAdjust="spacingAndGlyphs">Egység vagy régió kiválasztása</text><text x="534.95" y="830.8" font-size="9.6" fill="#1e1e1e" textLength="163.49" lengthAdjust="spacingAndGlyphs">Entitás vagy hivatkozás áthelyezése</text><text x="948.63" y="819.8" font-size="9.6" fill="#1e1e1e" textLength="114.48" lengthAdjust="spacingAndGlyphs">Kiválasztott szervezetek:</text><text x="949.18" y="830.8" font-size="9.6" fill="#1e1e1e" textLength="133.74" lengthAdjust="spacingAndGlyphs">3 Entitások a oldalon 2 réteg.</text></g></svg>
</body></html>
